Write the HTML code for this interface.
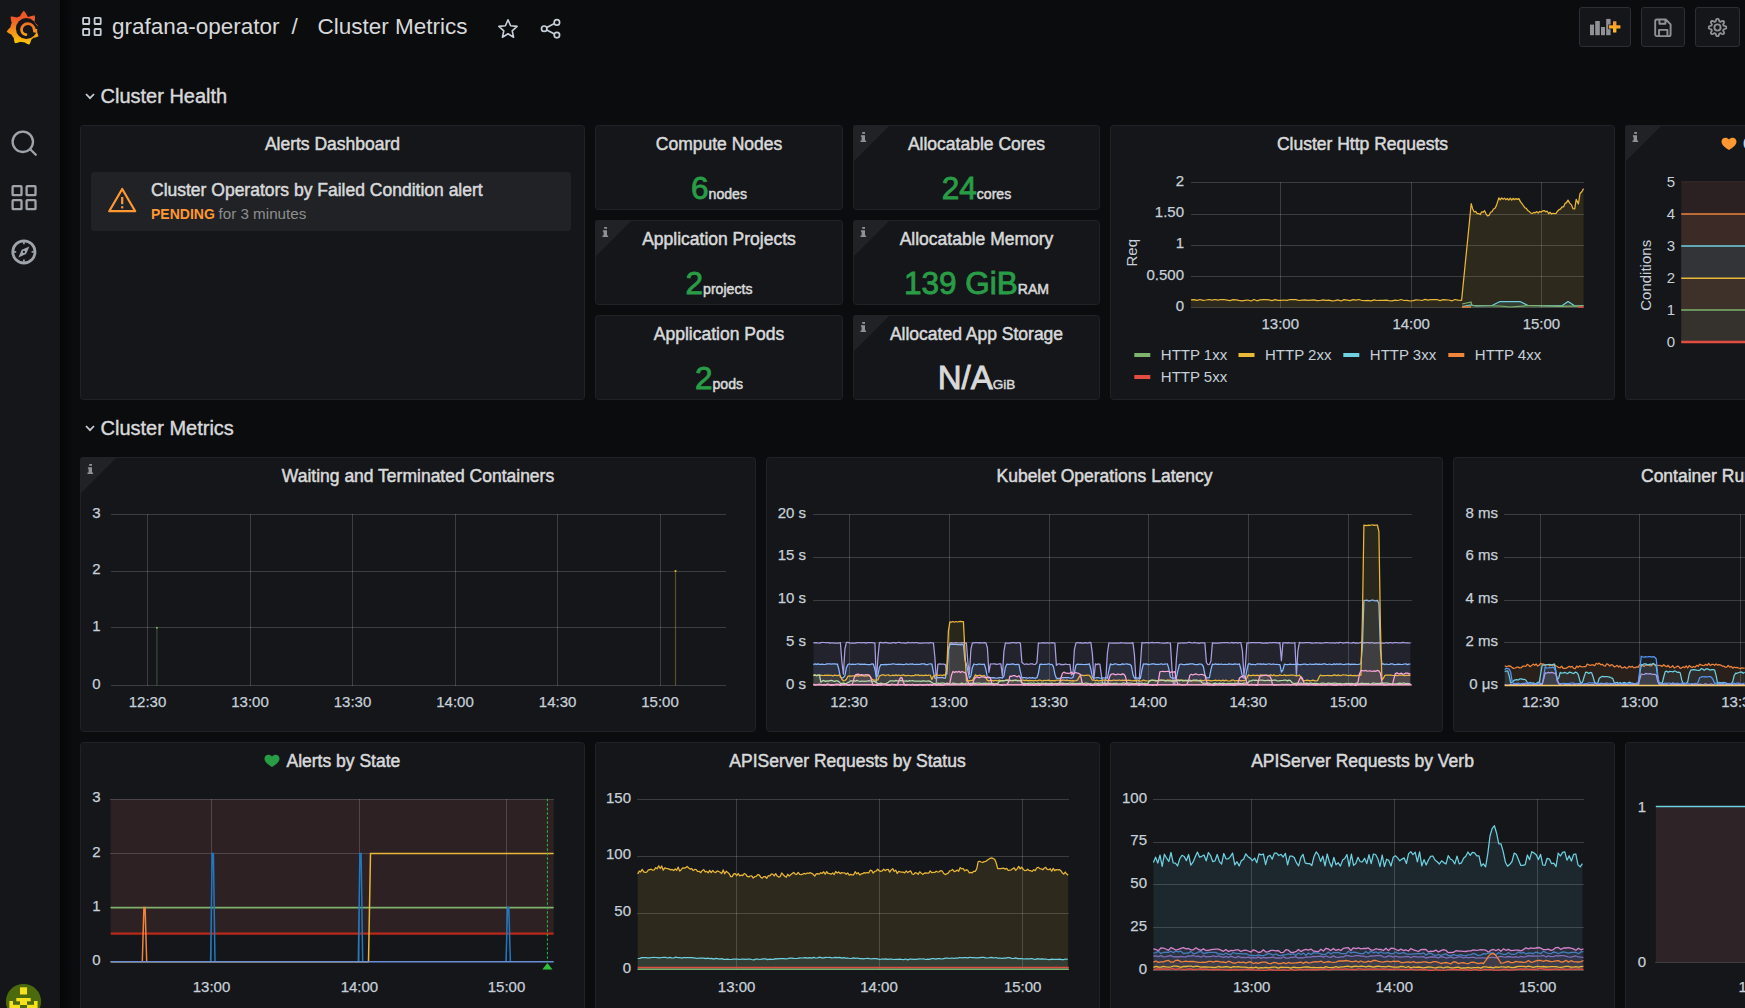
<!DOCTYPE html><html><head><meta charset="utf-8"><style>html,body{margin:0;padding:0;background:#0b0c0e;overflow:hidden;width:1745px;height:1008px}svg{display:block}</style></head><body><svg width="1745" height="1008" viewBox="0 0 1745 1008" font-family="Liberation Sans">
<defs>
<linearGradient id="logo" gradientUnits="userSpaceOnUse" x1="0" y1="12" x2="0" y2="45"><stop offset="0" stop-color="#ef5427"/><stop offset="0.2" stop-color="#f05a28"/><stop offset="1" stop-color="#fbcb0a"/></linearGradient>
<linearGradient id="shadow" x1="0" y1="0" x2="1" y2="0"><stop offset="0" stop-color="#000" stop-opacity="0.55"/><stop offset="1" stop-color="#000" stop-opacity="0"/></linearGradient>
<linearGradient id="plus" x1="0" y1="0" x2="0" y2="1"><stop offset="0" stop-color="#f98d2c"/><stop offset="1" stop-color="#fbc21a"/></linearGradient>
</defs>
<rect width="1745" height="1008" fill="#0b0c0e"/>
<rect x="0" y="0" width="60" height="1008" fill="#141619"/>
<rect x="60" y="0" width="14" height="1008" fill="url(#shadow)"/>
<path d="M8.6,29.0 L8.9,28.7 L9.1,28.5 L9.4,28.3 L9.6,28.0 L9.9,27.8 L10.1,27.6 L10.4,27.4 L10.4,27.2 L10.5,26.9 L10.5,26.7 L10.5,26.5 L10.6,26.3 L10.6,26.0 L10.7,25.8 L10.7,25.6 L10.8,25.4 L10.9,25.1 L10.9,24.9 L11.0,24.7 L11.1,24.5 L11.2,24.3 L11.3,24.1 L11.3,23.8 L11.4,23.6 L11.5,23.4 L11.6,23.2 L11.7,23.0 L11.8,22.8 L11.7,22.5 L11.6,22.1 L11.4,21.8 L11.3,21.4 L11.2,21.0 L11.1,20.7 L11.0,20.3 L11.0,19.9 L10.9,19.5 L10.8,19.1 L10.8,18.7 L10.7,18.3 L10.7,17.9 L10.7,17.5 L10.7,17.1 L10.7,16.6 L11.1,16.6 L11.5,16.6 L11.9,16.6 L12.4,16.6 L12.8,16.7 L13.2,16.7 L13.6,16.7 L14.0,16.8 L14.3,16.9 L14.7,16.9 L15.1,17.0 L15.5,17.1 L15.8,17.2 L16.2,17.3 L16.6,17.4 L16.9,17.6 L17.1,17.5 L17.3,17.3 L17.5,17.2 L17.7,17.1 L17.9,17.0 L18.1,16.9 L18.3,16.8 L18.6,16.8 L18.8,16.7 L19.0,16.6 L19.2,16.5 L19.4,16.4 L19.6,16.4 L19.9,16.3 L20.1,16.2 L20.2,15.9 L20.4,15.5 L20.6,15.2 L20.7,14.8 L20.9,14.5 L21.1,14.1 L21.4,13.8 L21.6,13.4 L21.8,13.1 L22.1,12.7 L22.3,12.4 L22.6,12.1 L22.9,11.7 L23.2,11.4 L23.5,11.1 L23.8,10.8 L24.1,11.1 L24.4,11.4 L24.7,11.8 L25.0,12.1 L25.2,12.5 L25.5,12.8 L25.7,13.1 L26.0,13.5 L26.2,13.8 L26.4,14.2 L26.6,14.6 L26.8,14.9 L26.9,15.3 L27.1,15.6 L27.2,16.0 L27.4,16.4 L27.6,16.4 L27.8,16.5 L28.0,16.6 L28.2,16.7 L28.4,16.8 L28.7,16.8 L28.9,16.9 L29.2,16.8 L29.5,16.6 L29.9,16.5 L30.2,16.4 L30.6,16.3 L30.9,16.1 L31.3,16.0 L31.7,15.9 L32.0,15.9 L32.4,15.8 L32.8,15.7 L33.2,15.7 L33.6,15.6 L34.0,15.6 L34.4,15.5 L34.8,15.5 L34.9,15.9 L34.9,16.3 L34.9,16.7 L35.0,17.1 L35.0,17.5 L35.0,17.9 L35.0,18.3 L34.9,18.7 L34.9,19.1 L34.9,19.5 L34.8,19.8 L34.8,20.2 L34.7,20.6 L34.6,20.9 L34.5,21.3 L34.4,21.6 L34.6,21.8 L34.7,22.0 L34.8,22.2 L34.9,22.4 L35.0,22.6 L35.2,22.8 L35.3,23.0 L35.4,23.2 L35.6,23.4 L35.8,23.5 L36.0,23.7 L36.2,23.9 L36.3,24.1 L36.5,24.3 L36.7,24.4 L36.9,24.6 L37.1,24.8 L37.3,25.1 L37.4,25.3 L37.6,25.5 L37.8,25.7 L38.0,25.9 L38.1,26.2 L38.3,26.4 L38.2,26.7 L38.1,26.9 L38.1,27.2 L38.0,27.5 L37.9,27.7 L37.8,28.0 L37.7,28.3 L37.6,28.5 L37.5,28.8 L37.4,29.0 L37.3,29.2 L37.1,29.5 L37.0,29.7 L36.9,29.9 L36.8,30.2 L36.6,30.4 L36.6,30.6 L36.6,30.8 L36.5,31.1 L36.5,31.3 L36.7,31.6 L36.8,31.8 L37.0,32.1 L37.1,32.4 L37.3,32.7 L37.4,33.0 L37.5,33.3 L37.7,33.6 L37.8,33.9 L37.9,34.2 L38.0,34.6 L38.1,34.9 L38.2,35.2 L38.3,35.6 L38.4,35.9 L38.4,36.3 L38.1,36.4 L37.8,36.6 L37.5,36.7 L37.1,36.9 L36.8,37.0 L36.5,37.1 L36.2,37.2 L35.9,37.3 L35.5,37.4 L35.2,37.5 L34.9,37.6 L34.6,37.7 L34.3,37.7 L33.9,37.8 L33.6,37.8 L33.3,37.8 L33.2,38.0 L33.0,38.2 L32.8,38.3 L32.7,38.5 L32.5,38.7 L32.3,38.8 L32.2,39.0 L32.0,39.1 L31.8,39.3 L31.6,39.4 L31.4,39.5 L31.3,39.7 L31.2,40.0 L31.1,40.3 L31.0,40.6 L30.9,40.9 L30.8,41.2 L30.7,41.5 L30.6,41.8 L30.5,42.2 L30.4,42.5 L30.2,42.8 L30.1,43.1 L29.9,43.4 L29.7,43.7 L29.6,44.0 L29.4,44.3 L29.2,44.6 L28.8,44.5 L28.5,44.4 L28.2,44.3 L27.8,44.1 L27.5,44.0 L27.2,43.9 L26.9,43.7 L26.6,43.6 L26.3,43.4 L26.0,43.3 L25.7,43.1 L25.5,42.9 L25.2,42.7 L24.9,42.6 L24.7,42.4 L24.4,42.2 L24.2,42.2 L24.0,42.2 L23.7,42.2 L23.5,42.2 L23.3,42.2 L23.0,42.2 L22.8,42.2 L22.6,42.2 L22.3,42.1 L22.1,42.1 L21.9,42.1 L21.7,42.1 L21.4,42.0 L21.2,42.0 L21.0,42.0 L20.8,41.9 L20.5,41.9 L20.3,41.8 L20.1,41.8 L19.8,41.9 L19.5,42.0 L19.2,42.2 L18.9,42.3 L18.6,42.4 L18.3,42.5 L18.0,42.6 L17.7,42.7 L17.4,42.8 L17.0,42.9 L16.7,43.0 L16.3,43.0 L16.0,43.1 L15.7,43.1 L15.3,43.2 L15.0,43.2 L14.8,42.9 L14.7,42.6 L14.6,42.2 L14.5,41.9 L14.4,41.6 L14.3,41.2 L14.2,40.9 L14.1,40.6 L14.1,40.3 L14.0,39.9 L14.0,39.6 L13.9,39.3 L13.9,39.0 L13.9,38.6 L13.9,38.3 L13.8,38.0 L13.7,37.8 L13.5,37.7 L13.4,37.5 L13.2,37.3 L13.1,37.1 L13.0,36.9 L12.8,36.8 L12.7,36.6 L12.6,36.4 L12.4,36.2 L12.3,36.0 L12.2,35.8 L12.1,35.6 L12.0,35.4 L11.8,35.2 L11.7,35.0 L11.6,34.8 L11.5,34.6 L11.2,34.5 L10.9,34.3 L10.6,34.2 L10.3,34.1 L10.0,33.9 L9.7,33.8 L9.4,33.6 L9.1,33.4 L8.8,33.2 L8.5,33.0 L8.2,32.8 L7.9,32.6 L7.6,32.4 L7.3,32.2 L7.0,31.9 L6.7,31.7 L6.9,31.3 L7.1,31.0 L7.3,30.7 L7.5,30.4 L7.7,30.1 L7.9,29.8 L8.2,29.5 L8.4,29.3 Z" fill="url(#logo)"/>
<circle cx="26.4" cy="28.6" r="10.5" fill="#141619"/>
<path d="M35,24.5 L40,27.5 L36.5,29.8 Z" fill="#141619"/>
<path d="M34.2,29.5 A6.4,6.4 0 0 0 27.6,23.6 A6.2,6.2 0 0 0 21.5,29.8 A5.4,5.4 0 0 0 26,34.6" fill="none" stroke="url(#logo)" stroke-width="2.7" stroke-linecap="round"/>
<path d="M32.8,28.5 L37.2,29 L37.2,33 L33.2,32.2 Z" fill="url(#logo)"/>
<g fill="none" stroke="#9fa4ab" stroke-width="2.3" stroke-linecap="round"><circle cx="22.8" cy="141.8" r="10.2"/><line x1="30.5" y1="149.5" x2="35.8" y2="154.8"/></g>
<rect x="12.6" y="186.2" width="8.9" height="9.0" rx="0.8" fill="none" stroke="#9fa4ab" stroke-width="2.3"/>
<rect x="26.6" y="186.2" width="8.9" height="9.0" rx="0.8" fill="none" stroke="#9fa4ab" stroke-width="2.3"/>
<rect x="12.6" y="200.2" width="8.9" height="9.0" rx="0.8" fill="none" stroke="#9fa4ab" stroke-width="2.3"/>
<rect x="26.6" y="200.2" width="8.9" height="9.0" rx="0.8" fill="none" stroke="#9fa4ab" stroke-width="2.3"/>
<circle cx="23.9" cy="251.9" r="11.1" fill="none" stroke="#9fa4ab" stroke-width="2.8"/>
<g stroke="#9fa4ab" stroke-width="1.7"><line x1="23.9" y1="242" x2="23.9" y2="244.2"/><line x1="23.9" y1="259.6" x2="23.9" y2="261.8"/><line x1="14" y1="251.9" x2="16.2" y2="251.9"/><line x1="31.6" y1="251.9" x2="33.8" y2="251.9"/></g>
<path d="M29.4,246.4 L26.1,254.1 L18.4,257.4 L21.7,249.7 Z" fill="#9fa4ab"/><circle cx="23.9" cy="251.9" r="1.1" fill="#141619"/>
<circle cx="23.5" cy="1001.5" r="17.6" fill="#4b6a0e"/>
<g fill="#f7e01d"><rect x="20" y="987.3" width="7" height="7.2"/><rect x="16.3" y="998" width="14.4" height="3.3"/><rect x="20" y="1001" width="7" height="4"/><rect x="9.4" y="1001" width="3.6" height="7"/><rect x="34" y="1001" width="3.6" height="7"/><rect x="13" y="1004.8" width="7" height="3.5"/><rect x="27" y="1004.8" width="7" height="3.5"/></g>
<rect x="83.1" y="17.8" width="6.1" height="6.2" rx="0.6" fill="none" stroke="#c7d0d9" stroke-width="1.8"/>
<rect x="94.6" y="17.8" width="6.1" height="6.2" rx="0.6" fill="none" stroke="#c7d0d9" stroke-width="1.8"/>
<rect x="83.1" y="29.0" width="6.1" height="6.2" rx="0.6" fill="none" stroke="#c7d0d9" stroke-width="1.8"/>
<rect x="94.6" y="29.0" width="6.1" height="6.2" rx="0.6" fill="none" stroke="#c7d0d9" stroke-width="1.8"/>
<text x="112" y="34" font-size="22.5" fill="#d8d9da" text-anchor="start" font-weight="400" >grafana-operator</text>
<text x="291.5" y="34" font-size="22.5" fill="#d8d9da" text-anchor="start" font-weight="400" >/</text>
<text x="317.5" y="34" font-size="22.5" fill="#d8d9da" text-anchor="start" font-weight="400" >Cluster Metrics</text>
<path d="M508.0,19.8 L510.6,25.8 L517.1,26.4 L512.2,30.8 L513.6,37.2 L508.0,33.8 L502.4,37.2 L503.8,30.8 L498.9,26.4 L505.4,25.8 Z" fill="none" stroke="#c7d0d9" stroke-width="1.6" stroke-linejoin="round"/>
<g fill="none" stroke="#c7d0d9" stroke-width="1.7"><circle cx="556.9" cy="22.4" r="2.7"/><circle cx="544.2" cy="28.7" r="2.7"/><circle cx="556.9" cy="35.1" r="2.7"/><line x1="546.7" y1="27.4" x2="554.5" y2="23.6"/><line x1="546.7" y1="30" x2="554.5" y2="33.9"/></g>
<rect x="1579.5" y="7.5" width="51" height="39" rx="2.5" fill="#141619" stroke="#2b2f34" stroke-width="1"/>
<rect x="1641.5" y="7.5" width="43" height="39" rx="2.5" fill="#141619" stroke="#2b2f34" stroke-width="1"/>
<rect x="1695.5" y="7.5" width="44" height="39" rx="2.5" fill="#141619" stroke="#2b2f34" stroke-width="1"/>
<g fill="#8e9297"><rect x="1590" y="24.6" width="4" height="10.6"/><rect x="1595.2" y="21" width="4.6" height="14.2"/><rect x="1601" y="27" width="4" height="8.2"/><rect x="1606.2" y="18.9" width="4.4" height="16.3"/></g>
<path d="M1613,21.2 h3.4 v4 h4 v3.4 h-4 v4 h-3.4 v-4 h-4 v-3.4 h4 z" fill="url(#plus)" stroke="#141619" stroke-width="1.4" paint-order="stroke"/>
<path d="M1656.8,19.5 h9 l4.8,4.8 v10.2 a1.6,1.6 0 0 1 -1.6,1.6 h-12.2 a1.6,1.6 0 0 1 -1.6,-1.6 v-13.4 a1.6,1.6 0 0 1 1.6,-1.6 z M1659.4,19.5 v4.2 h6 v-4.2 M1659,35.5 v-5.6 h8.4 v5.6" fill="none" stroke="#8e9297" stroke-width="1.9" stroke-linejoin="round"/>
<path d="M1726.2,27.5 L1726.2,28.4 L1724.9,29.0 L1723.6,29.4 L1723.4,29.9 L1723.1,30.5 L1723.8,31.7 L1724.2,33.0 L1723.7,33.7 L1723.0,34.2 L1721.7,33.8 L1720.5,33.1 L1719.9,33.4 L1719.4,33.6 L1719.0,34.9 L1718.4,36.2 L1717.5,36.2 L1716.6,36.2 L1716.0,34.9 L1715.6,33.6 L1715.1,33.4 L1714.5,33.1 L1713.3,33.8 L1712.0,34.2 L1711.3,33.7 L1710.8,33.0 L1711.2,31.7 L1711.9,30.5 L1711.6,29.9 L1711.4,29.4 L1710.1,29.0 L1708.8,28.4 L1708.8,27.5 L1708.8,26.6 L1710.1,26.0 L1711.4,25.6 L1711.6,25.1 L1711.9,24.5 L1711.2,23.3 L1710.8,22.0 L1711.3,21.3 L1712.0,20.8 L1713.3,21.2 L1714.5,21.9 L1715.1,21.6 L1715.6,21.4 L1716.0,20.1 L1716.6,18.8 L1717.5,18.8 L1718.4,18.8 L1719.0,20.1 L1719.4,21.4 L1719.9,21.6 L1720.5,21.9 L1721.7,21.2 L1723.0,20.8 L1723.7,21.3 L1724.2,22.0 L1723.8,23.3 L1723.1,24.5 L1723.4,25.1 L1723.6,25.6 L1724.9,26.0 L1726.2,26.6 Z" fill="none" stroke="#8e9297" stroke-width="1.8" stroke-linejoin="round"/>
<circle cx="1717.5" cy="27.5" r="3.1" fill="none" stroke="#8e9297" stroke-width="1.9"/>
<path d="M86,94 L90,98.2 L94,94" fill="none" stroke="#c7d0d9" stroke-width="1.7"/>
<text x="100.5" y="103" font-size="20" fill="#d8d9da" text-anchor="start" font-weight="400" stroke="#d8d9da" stroke-width="0.4" >Cluster Health</text>
<path d="M86,426 L90,430.2 L94,426" fill="none" stroke="#c7d0d9" stroke-width="1.7"/>
<text x="100.5" y="435" font-size="20" fill="#d8d9da" text-anchor="start" font-weight="400" stroke="#d8d9da" stroke-width="0.4" >Cluster Metrics</text>
<rect x="80.5" y="125.5" width="504" height="274" rx="3" fill="#141619" stroke="#202226" stroke-width="1"/>
<text x="332.5" y="150" font-size="17.5" fill="#d8d9da" text-anchor="middle" font-weight="400" stroke="#d8d9da" stroke-width="0.5" >Alerts Dashboard</text>
<rect x="91" y="172" width="480" height="59" rx="3" fill="#202226"/>
<path d="M122.2,189 L109.2,211.2 L135.2,211.2 Z" fill="none" stroke="#ff9830" stroke-width="2.2" stroke-linejoin="round"/>
<rect x="121.1" y="197" width="2.2" height="7.2" fill="#ff9830"/><rect x="121.1" y="206.2" width="2.2" height="2.2" fill="#ff9830"/>
<text x="151" y="195.6" font-size="17.5" fill="#d8d9da" text-anchor="start" font-weight="400" stroke="#d8d9da" stroke-width="0.5" >Cluster Operators by Failed Condition alert</text>
<text x="151" y="219" font-size="14" fill="#ff9830" text-anchor="start" font-weight="700" >PENDING</text>
<text x="218.5" y="219" font-size="15.2" fill="#8e8e8e" text-anchor="start" font-weight="400" >for 3 minutes</text>
<rect x="595.5" y="125.5" width="247" height="84" rx="3" fill="#141619" stroke="#202226" stroke-width="1"/>
<text x="719.0" y="150" font-size="17.5" fill="#d8d9da" text-anchor="middle" font-weight="400" stroke="#d8d9da" stroke-width="0.5" >Compute Nodes</text>
<text y="199" text-anchor="middle" x="719.0"><tspan font-size="31.5" fill="#299c46" stroke="#299c46" stroke-width="0.9">6</tspan><tspan font-size="14.1" fill="#d8d9da" stroke="#d8d9da" stroke-width="0.5">nodes</tspan></text>
<rect x="853.5" y="125.5" width="246" height="84" rx="3" fill="#141619" stroke="#202226" stroke-width="1"/>
<path d="M856,125 L890,125 L853,162 L853,128 Q853,125 856,125 Z" fill="#202226"/>
<g fill="#8e9297"><rect x="862.2" y="132" width="2.8" height="1.8"/><path d="M860.9,135.2 h4.1 v5.2 h1.1 v1.5 h-5.6 v-1.5 h1.1 v-3.7 h-0.7 z"/></g>
<text x="976.5" y="150" font-size="17.5" fill="#d8d9da" text-anchor="middle" font-weight="400" stroke="#d8d9da" stroke-width="0.5" >Allocatable Cores</text>
<text y="199" text-anchor="middle" x="976.5"><tspan font-size="31.5" fill="#299c46" stroke="#299c46" stroke-width="0.9">24</tspan><tspan font-size="14.1" fill="#d8d9da" stroke="#d8d9da" stroke-width="0.5">cores</tspan></text>
<rect x="595.5" y="220.5" width="247" height="84" rx="3" fill="#141619" stroke="#202226" stroke-width="1"/>
<path d="M598,220 L632,220 L595,257 L595,223 Q595,220 598,220 Z" fill="#202226"/>
<g fill="#8e9297"><rect x="604.2" y="227" width="2.8" height="1.8"/><path d="M602.9,230.2 h4.1 v5.2 h1.1 v1.5 h-5.6 v-1.5 h1.1 v-3.7 h-0.7 z"/></g>
<text x="719.0" y="245" font-size="17.5" fill="#d8d9da" text-anchor="middle" font-weight="400" stroke="#d8d9da" stroke-width="0.5" >Application Projects</text>
<text y="294" text-anchor="middle" x="719.0"><tspan font-size="31.5" fill="#299c46" stroke="#299c46" stroke-width="0.9">2</tspan><tspan font-size="14.1" fill="#d8d9da" stroke="#d8d9da" stroke-width="0.5">projects</tspan></text>
<rect x="853.5" y="220.5" width="246" height="84" rx="3" fill="#141619" stroke="#202226" stroke-width="1"/>
<path d="M856,220 L890,220 L853,257 L853,223 Q853,220 856,220 Z" fill="#202226"/>
<g fill="#8e9297"><rect x="862.2" y="227" width="2.8" height="1.8"/><path d="M860.9,230.2 h4.1 v5.2 h1.1 v1.5 h-5.6 v-1.5 h1.1 v-3.7 h-0.7 z"/></g>
<text x="976.5" y="245" font-size="17.5" fill="#d8d9da" text-anchor="middle" font-weight="400" stroke="#d8d9da" stroke-width="0.5" >Allocatable Memory</text>
<text y="294" text-anchor="middle" x="976.5"><tspan font-size="31.5" fill="#299c46" stroke="#299c46" stroke-width="0.9">139 GiB</tspan><tspan font-size="14.1" fill="#d8d9da" stroke="#d8d9da" stroke-width="0.5">RAM</tspan></text>
<rect x="595.5" y="315.5" width="247" height="84" rx="3" fill="#141619" stroke="#202226" stroke-width="1"/>
<text x="719.0" y="340" font-size="17.5" fill="#d8d9da" text-anchor="middle" font-weight="400" stroke="#d8d9da" stroke-width="0.5" >Application Pods</text>
<text y="389" text-anchor="middle" x="719.0"><tspan font-size="31.5" fill="#299c46" stroke="#299c46" stroke-width="0.9">2</tspan><tspan font-size="14.1" fill="#d8d9da" stroke="#d8d9da" stroke-width="0.5">pods</tspan></text>
<rect x="853.5" y="315.5" width="246" height="84" rx="3" fill="#141619" stroke="#202226" stroke-width="1"/>
<path d="M856,315 L890,315 L853,352 L853,318 Q853,315 856,315 Z" fill="#202226"/>
<g fill="#8e9297"><rect x="862.2" y="322" width="2.8" height="1.8"/><path d="M860.9,325.2 h4.1 v5.2 h1.1 v1.5 h-5.6 v-1.5 h1.1 v-3.7 h-0.7 z"/></g>
<text x="976.5" y="340" font-size="17.5" fill="#d8d9da" text-anchor="middle" font-weight="400" stroke="#d8d9da" stroke-width="0.5" >Allocated App Storage</text>
<text y="389" text-anchor="middle" x="976.5"><tspan font-size="33" fill="#d8d9da" stroke="#d8d9da" stroke-width="0.9">N/A</tspan><tspan font-size="13.5" fill="#d8d9da" stroke="#d8d9da" stroke-width="0.5">GiB</tspan></text>
<rect x="1110.5" y="125.5" width="504" height="274" rx="3" fill="#141619" stroke="#202226" stroke-width="1"/>
<text x="1362.5" y="150" font-size="17.5" fill="#d8d9da" text-anchor="middle" font-weight="400" stroke="#d8d9da" stroke-width="0.5" >Cluster Http Requests</text>
<line x1="1191" y1="307.5" x2="1584" y2="307.5" stroke="rgba(255,255,255,0.17)" stroke-width="1"/>
<text x="1184" y="310.8" font-size="15" fill="#c7d0d9" text-anchor="end" font-weight="400" stroke="#c7d0d9" stroke-width="0.25" >0</text>
<line x1="1191" y1="276.5" x2="1584" y2="276.5" stroke="rgba(255,255,255,0.17)" stroke-width="1"/>
<text x="1184" y="279.625" font-size="15" fill="#c7d0d9" text-anchor="end" font-weight="400" stroke="#c7d0d9" stroke-width="0.25" >0.500</text>
<line x1="1191" y1="245.5" x2="1584" y2="245.5" stroke="rgba(255,255,255,0.17)" stroke-width="1"/>
<text x="1184" y="248.45000000000005" font-size="15" fill="#c7d0d9" text-anchor="end" font-weight="400" stroke="#c7d0d9" stroke-width="0.25" >1</text>
<line x1="1191" y1="214.5" x2="1584" y2="214.5" stroke="rgba(255,255,255,0.17)" stroke-width="1"/>
<text x="1184" y="217.27500000000003" font-size="15" fill="#c7d0d9" text-anchor="end" font-weight="400" stroke="#c7d0d9" stroke-width="0.25" >1.50</text>
<line x1="1191" y1="182.5" x2="1584" y2="182.5" stroke="rgba(255,255,255,0.17)" stroke-width="1"/>
<text x="1184" y="186.10000000000005" font-size="15" fill="#c7d0d9" text-anchor="end" font-weight="400" stroke="#c7d0d9" stroke-width="0.25" >2</text>
<line x1="1280.5" y1="182" x2="1280.5" y2="308" stroke="rgba(255,255,255,0.17)" stroke-width="1"/>
<text x="1280.3" y="329" font-size="15" fill="#c7d0d9" text-anchor="middle" font-weight="400" stroke="#c7d0d9" stroke-width="0.25" >13:00</text>
<line x1="1411.5" y1="182" x2="1411.5" y2="308" stroke="rgba(255,255,255,0.17)" stroke-width="1"/>
<text x="1411.2" y="329" font-size="15" fill="#c7d0d9" text-anchor="middle" font-weight="400" stroke="#c7d0d9" stroke-width="0.25" >14:00</text>
<line x1="1541.5" y1="182" x2="1541.5" y2="308" stroke="rgba(255,255,255,0.17)" stroke-width="1"/>
<text x="1541.4" y="329" font-size="15" fill="#c7d0d9" text-anchor="middle" font-weight="400" stroke="#c7d0d9" stroke-width="0.25" >15:00</text>
<text x="0" y="0" font-size="15" fill="#c7d0d9" text-anchor="middle" transform="translate(1136.5,252.7) rotate(-90)">Req</text>
<path d="M1191.0,299.9 L1194.0,299.6 L1197.0,300.4 L1200.0,299.5 L1203.0,300.3 L1206.0,300.0 L1209.0,299.5 L1212.0,300.2 L1215.0,299.5 L1218.0,300.1 L1221.0,299.5 L1224.0,299.5 L1227.0,300.1 L1230.0,300.7 L1233.0,299.6 L1236.0,299.8 L1239.0,300.4 L1242.0,300.9 L1245.0,300.3 L1248.0,300.0 L1251.0,301.0 L1254.0,299.5 L1257.0,300.8 L1260.0,299.9 L1263.0,299.6 L1266.0,299.6 L1269.0,299.9 L1272.0,300.7 L1275.0,299.7 L1278.0,300.3 L1281.0,300.4 L1284.0,300.0 L1287.0,300.3 L1290.0,299.5 L1293.0,299.5 L1296.0,299.7 L1299.0,300.5 L1302.0,300.1 L1305.0,299.9 L1308.0,300.3 L1311.0,300.1 L1314.0,299.9 L1317.0,300.7 L1320.0,300.5 L1323.0,299.8 L1326.0,300.3 L1329.0,300.2 L1332.0,300.8 L1335.0,300.6 L1338.0,299.9 L1341.0,301.0 L1344.0,299.6 L1347.0,300.1 L1350.0,300.6 L1353.0,299.6 L1356.0,300.2 L1359.0,299.5 L1362.0,300.5 L1365.0,300.6 L1368.0,300.3 L1371.0,300.8 L1374.0,299.9 L1377.0,300.5 L1380.0,300.4 L1383.0,300.3 L1386.0,300.1 L1389.0,300.7 L1392.0,300.9 L1395.0,300.2 L1398.0,300.5 L1401.0,299.5 L1404.0,300.5 L1407.0,300.4 L1410.0,301.0 L1413.0,300.7 L1416.0,299.9 L1419.0,300.0 L1422.0,300.5 L1425.0,299.4 L1428.0,300.1 L1431.0,299.7 L1434.0,299.6 L1437.0,299.5 L1440.0,300.6 L1443.0,299.6 L1446.0,299.8 L1449.0,300.0 L1452.0,300.8 L1455.0,299.5 L1458.0,300.1 L1461.0,300.3 L1461.6,300.2 L1463.2,284.2 L1464.8,268.2 L1466.4,252.2 L1468.0,236.2 L1469.6,220.2 L1471.2,203.7 L1472.7,208.9 L1474.2,212.0 L1475.7,211.4 L1477.2,213.6 L1478.7,213.6 L1480.2,214.6 L1481.7,211.8 L1483.1,212.2 L1484.6,210.7 L1486.1,214.1 L1487.6,215.9 L1489.1,215.3 L1490.6,212.2 L1492.0,211.6 L1493.5,209.0 L1495.0,208.3 L1496.5,205.4 L1498.8,197.9 L1500.2,199.9 L1501.7,197.9 L1503.1,199.4 L1504.5,198.1 L1506.0,199.7 L1507.4,198.5 L1508.8,200.1 L1510.3,198.2 L1511.7,200.2 L1513.2,198.3 L1514.6,199.7 L1516.0,198.6 L1517.5,199.4 L1518.9,198.6 L1520.4,201.6 L1521.8,203.3 L1523.3,205.5 L1524.8,207.7 L1526.3,208.4 L1527.8,210.6 L1529.3,211.6 L1530.8,213.0 L1532.3,213.4 L1533.8,212.4 L1535.3,212.8 L1536.8,211.6 L1538.2,213.0 L1539.7,211.5 L1541.2,212.1 L1542.7,210.9 L1544.2,210.6 L1545.7,211.8 L1547.2,211.2 L1548.7,213.8 L1550.1,212.3 L1551.6,214.0 L1553.1,213.3 L1554.6,213.7 L1556.1,213.4 L1557.5,211.2 L1559.0,209.7 L1560.5,209.1 L1562.0,206.8 L1563.5,206.9 L1565.0,203.4 L1566.5,202.6 L1568.0,200.1 L1569.7,203.1 L1571.3,204.6 L1573.0,208.7 L1574.7,208.9 L1576.2,199.3 L1578.4,204.0 L1580.0,193.5 L1581.8,191.7 L1583.5,188.6 L1583.5,307.4 L1191.0,307.4 Z" fill="#eab839" fill-opacity="0.12"/>
<path d="M1191.0,299.9 L1194.0,299.6 L1197.0,300.4 L1200.0,299.5 L1203.0,300.3 L1206.0,300.0 L1209.0,299.5 L1212.0,300.2 L1215.0,299.5 L1218.0,300.1 L1221.0,299.5 L1224.0,299.5 L1227.0,300.1 L1230.0,300.7 L1233.0,299.6 L1236.0,299.8 L1239.0,300.4 L1242.0,300.9 L1245.0,300.3 L1248.0,300.0 L1251.0,301.0 L1254.0,299.5 L1257.0,300.8 L1260.0,299.9 L1263.0,299.6 L1266.0,299.6 L1269.0,299.9 L1272.0,300.7 L1275.0,299.7 L1278.0,300.3 L1281.0,300.4 L1284.0,300.0 L1287.0,300.3 L1290.0,299.5 L1293.0,299.5 L1296.0,299.7 L1299.0,300.5 L1302.0,300.1 L1305.0,299.9 L1308.0,300.3 L1311.0,300.1 L1314.0,299.9 L1317.0,300.7 L1320.0,300.5 L1323.0,299.8 L1326.0,300.3 L1329.0,300.2 L1332.0,300.8 L1335.0,300.6 L1338.0,299.9 L1341.0,301.0 L1344.0,299.6 L1347.0,300.1 L1350.0,300.6 L1353.0,299.6 L1356.0,300.2 L1359.0,299.5 L1362.0,300.5 L1365.0,300.6 L1368.0,300.3 L1371.0,300.8 L1374.0,299.9 L1377.0,300.5 L1380.0,300.4 L1383.0,300.3 L1386.0,300.1 L1389.0,300.7 L1392.0,300.9 L1395.0,300.2 L1398.0,300.5 L1401.0,299.5 L1404.0,300.5 L1407.0,300.4 L1410.0,301.0 L1413.0,300.7 L1416.0,299.9 L1419.0,300.0 L1422.0,300.5 L1425.0,299.4 L1428.0,300.1 L1431.0,299.7 L1434.0,299.6 L1437.0,299.5 L1440.0,300.6 L1443.0,299.6 L1446.0,299.8 L1449.0,300.0 L1452.0,300.8 L1455.0,299.5 L1458.0,300.1 L1461.0,300.3 L1461.6,300.2 L1463.2,284.2 L1464.8,268.2 L1466.4,252.2 L1468.0,236.2 L1469.6,220.2 L1471.2,203.7 L1472.7,208.9 L1474.2,212.0 L1475.7,211.4 L1477.2,213.6 L1478.7,213.6 L1480.2,214.6 L1481.7,211.8 L1483.1,212.2 L1484.6,210.7 L1486.1,214.1 L1487.6,215.9 L1489.1,215.3 L1490.6,212.2 L1492.0,211.6 L1493.5,209.0 L1495.0,208.3 L1496.5,205.4 L1498.8,197.9 L1500.2,199.9 L1501.7,197.9 L1503.1,199.4 L1504.5,198.1 L1506.0,199.7 L1507.4,198.5 L1508.8,200.1 L1510.3,198.2 L1511.7,200.2 L1513.2,198.3 L1514.6,199.7 L1516.0,198.6 L1517.5,199.4 L1518.9,198.6 L1520.4,201.6 L1521.8,203.3 L1523.3,205.5 L1524.8,207.7 L1526.3,208.4 L1527.8,210.6 L1529.3,211.6 L1530.8,213.0 L1532.3,213.4 L1533.8,212.4 L1535.3,212.8 L1536.8,211.6 L1538.2,213.0 L1539.7,211.5 L1541.2,212.1 L1542.7,210.9 L1544.2,210.6 L1545.7,211.8 L1547.2,211.2 L1548.7,213.8 L1550.1,212.3 L1551.6,214.0 L1553.1,213.3 L1554.6,213.7 L1556.1,213.4 L1557.5,211.2 L1559.0,209.7 L1560.5,209.1 L1562.0,206.8 L1563.5,206.9 L1565.0,203.4 L1566.5,202.6 L1568.0,200.1 L1569.7,203.1 L1571.3,204.6 L1573.0,208.7 L1574.7,208.9 L1576.2,199.3 L1578.4,204.0 L1580.0,193.5 L1581.8,191.7 L1583.5,188.6" fill="none" stroke="#eab839" stroke-width="1.25" stroke-linejoin="round"/>
<path d="M1462.0,306.5 L1470.0,305.0 L1476.0,305.8 L1492.0,305.5 L1500.0,301.5 L1520.0,301.5 L1528.0,305.5 L1562.0,305.8 L1568.0,301.5 L1575.0,306.0 L1583.5,305.5 L1583.5,307.4 L1462.0,307.4 Z" fill="#6ed0e0" fill-opacity="0.12"/>
<path d="M1462.0,306.5 L1470.0,305.0 L1476.0,305.8 L1492.0,305.5 L1500.0,301.5 L1520.0,301.5 L1528.0,305.5 L1562.0,305.8 L1568.0,301.5 L1575.0,306.0 L1583.5,305.5" fill="none" stroke="#6ed0e0" stroke-width="1.25" stroke-linejoin="round"/>
<path d="M1462.0,304.0 L1471.0,302.0 L1472.0,305.5 L1500.0,306.0 L1510.0,307.0 L1530.0,305.5 L1560.0,306.3 L1583.5,305.8 L1583.5,307.4 L1462.0,307.4 Z" fill="#7eb26d" fill-opacity="0.08"/>
<path d="M1462.0,304.0 L1471.0,302.0 L1472.0,305.5 L1500.0,306.0 L1510.0,307.0 L1530.0,305.5 L1560.0,306.3 L1583.5,305.8" fill="none" stroke="#7eb26d" stroke-width="1.25" stroke-linejoin="round"/>
<line x1="1462" y1="307" x2="1471" y2="307" stroke="#ef843c" stroke-width="1.5"/><line x1="1578" y1="307" x2="1583.5" y2="307" stroke="#e24d42" stroke-width="1.5"/>
<rect x="1134.3" y="353" width="16" height="4" fill="#7eb26d"/>
<text x="1160.8" y="360.3" font-size="15" fill="#c7d0d9" text-anchor="start" font-weight="400" >HTTP 1xx</text>
<rect x="1238.5" y="353" width="16" height="4" fill="#eab839"/>
<text x="1265.0" y="360.3" font-size="15" fill="#c7d0d9" text-anchor="start" font-weight="400" >HTTP 2xx</text>
<rect x="1343.3" y="353" width="16" height="4" fill="#6ed0e0"/>
<text x="1369.8" y="360.3" font-size="15" fill="#c7d0d9" text-anchor="start" font-weight="400" >HTTP 3xx</text>
<rect x="1448.3" y="353" width="16" height="4" fill="#ef843c"/>
<text x="1474.8" y="360.3" font-size="15" fill="#c7d0d9" text-anchor="start" font-weight="400" >HTTP 4xx</text>
<rect x="1134.3" y="375" width="16" height="4" fill="#e24d42"/>
<text x="1160.8" y="382.3" font-size="15" fill="#c7d0d9" text-anchor="start" font-weight="400" >HTTP 5xx</text>
<rect x="1625.5" y="125.5" width="274" height="274" rx="3" fill="#141619" stroke="#202226" stroke-width="1"/>
<path d="M1628,125 L1662,125 L1625,162 L1625,128 Q1625,125 1628,125 Z" fill="#202226"/>
<g fill="#8e9297"><rect x="1634.2" y="132" width="2.8" height="1.8"/><path d="M1632.9,135.2 h4.1 v5.2 h1.1 v1.5 h-5.6 v-1.5 h1.1 v-3.7 h-0.7 z"/></g>
<path d="M1729,139.5 c-2.5,-3 -7.5,-2 -7.5,2.3 c0,3.6 4.6,6.5 7.5,8.2 c2.9,-1.7 7.5,-4.6 7.5,-8.2 c0,-4.3 -5,-5.3 -7.5,-2.3 z" fill="#ff9830"/>
<text x="1743" y="150" font-size="17.5" fill="#d8d9da" text-anchor="start" font-weight="400" stroke="#d8d9da" stroke-width="0.5" >Cluster Operators by Failed Condition</text>
<text x="1675" y="347" font-size="15" fill="#c7d0d9" text-anchor="end" font-weight="400" >0</text>
<text x="1675" y="315.1" font-size="15" fill="#c7d0d9" text-anchor="end" font-weight="400" >1</text>
<text x="1675" y="283.2" font-size="15" fill="#c7d0d9" text-anchor="end" font-weight="400" >2</text>
<text x="1675" y="251" font-size="15" fill="#c7d0d9" text-anchor="end" font-weight="400" >3</text>
<text x="1675" y="219" font-size="15" fill="#c7d0d9" text-anchor="end" font-weight="400" >4</text>
<text x="1675" y="186.8" font-size="15" fill="#c7d0d9" text-anchor="end" font-weight="400" >5</text>
<rect x="1681.2" y="310.1" width="100" height="31.899999999999977" fill="#35322d"/>
<rect x="1681.2" y="278.2" width="100" height="31.900000000000034" fill="#3e3129"/>
<rect x="1681.2" y="246" width="100" height="32.19999999999999" fill="#333438"/>
<rect x="1681.2" y="214" width="100" height="32" fill="#3c2a27"/>
<rect x="1681.2" y="181.8" width="100" height="32.19999999999999" fill="#2b2022"/>
<line x1="1681.2" y1="342" x2="1745" y2="342" stroke="#e24d42" stroke-width="2.5"/>
<line x1="1681.2" y1="310.1" x2="1745" y2="310.1" stroke="#7eb26d" stroke-width="1.5"/>
<line x1="1681.2" y1="278.2" x2="1745" y2="278.2" stroke="#eab839" stroke-width="1.5"/>
<line x1="1681.2" y1="246" x2="1745" y2="246" stroke="#6ed0e0" stroke-width="1.5"/>
<line x1="1681.2" y1="214" x2="1745" y2="214" stroke="#ef843c" stroke-width="1.5"/>
<line x1="1681.2" y1="181.8" x2="1745" y2="181.8" stroke="#3a2c2e" stroke-width="1"/>
<text x="0" y="0" font-size="15" fill="#c7d0d9" text-anchor="middle" transform="translate(1650.5,275.3) rotate(-90)">Conditions</text>
<rect x="80.5" y="457.5" width="675" height="274" rx="3" fill="#141619" stroke="#202226" stroke-width="1"/>
<path d="M83,457 L117,457 L80,494 L80,460 Q80,457 83,457 Z" fill="#202226"/>
<g fill="#8e9297"><rect x="89.2" y="464" width="2.8" height="1.8"/><path d="M87.9,467.2 h4.1 v5.2 h1.1 v1.5 h-5.6 v-1.5 h1.1 v-3.7 h-0.7 z"/></g>
<text x="418.0" y="482" font-size="17.5" fill="#d8d9da" text-anchor="middle" font-weight="400" stroke="#d8d9da" stroke-width="0.5" >Waiting and Terminated Containers</text>
<line x1="111" y1="685.5" x2="726" y2="685.5" stroke="rgba(255,255,255,0.17)" stroke-width="1"/>
<text x="100.5" y="688.6999999999999" font-size="15" fill="#c7d0d9" text-anchor="end" font-weight="400" stroke="#c7d0d9" stroke-width="0.25" >0</text>
<line x1="111" y1="627.5" x2="726" y2="627.5" stroke="rgba(255,255,255,0.17)" stroke-width="1"/>
<text x="100.5" y="630.8" font-size="15" fill="#c7d0d9" text-anchor="end" font-weight="400" stroke="#c7d0d9" stroke-width="0.25" >1</text>
<line x1="111" y1="571.5" x2="726" y2="571.5" stroke="rgba(255,255,255,0.17)" stroke-width="1"/>
<text x="100.5" y="574.1999999999999" font-size="15" fill="#c7d0d9" text-anchor="end" font-weight="400" stroke="#c7d0d9" stroke-width="0.25" >2</text>
<line x1="111" y1="514.5" x2="726" y2="514.5" stroke="rgba(255,255,255,0.17)" stroke-width="1"/>
<text x="100.5" y="517.6999999999999" font-size="15" fill="#c7d0d9" text-anchor="end" font-weight="400" stroke="#c7d0d9" stroke-width="0.25" >3</text>
<line x1="147.5" y1="514" x2="147.5" y2="686" stroke="rgba(255,255,255,0.17)" stroke-width="1"/>
<text x="147.5" y="707" font-size="15" fill="#c7d0d9" text-anchor="middle" font-weight="400" stroke="#c7d0d9" stroke-width="0.25" >12:30</text>
<line x1="250.5" y1="514" x2="250.5" y2="686" stroke="rgba(255,255,255,0.17)" stroke-width="1"/>
<text x="250" y="707" font-size="15" fill="#c7d0d9" text-anchor="middle" font-weight="400" stroke="#c7d0d9" stroke-width="0.25" >13:00</text>
<line x1="352.5" y1="514" x2="352.5" y2="686" stroke="rgba(255,255,255,0.17)" stroke-width="1"/>
<text x="352.5" y="707" font-size="15" fill="#c7d0d9" text-anchor="middle" font-weight="400" stroke="#c7d0d9" stroke-width="0.25" >13:30</text>
<line x1="455.5" y1="514" x2="455.5" y2="686" stroke="rgba(255,255,255,0.17)" stroke-width="1"/>
<text x="455" y="707" font-size="15" fill="#c7d0d9" text-anchor="middle" font-weight="400" stroke="#c7d0d9" stroke-width="0.25" >14:00</text>
<line x1="557.5" y1="514" x2="557.5" y2="686" stroke="rgba(255,255,255,0.17)" stroke-width="1"/>
<text x="557.6" y="707" font-size="15" fill="#c7d0d9" text-anchor="middle" font-weight="400" stroke="#c7d0d9" stroke-width="0.25" >14:30</text>
<line x1="660.5" y1="514" x2="660.5" y2="686" stroke="rgba(255,255,255,0.17)" stroke-width="1"/>
<text x="660" y="707" font-size="15" fill="#c7d0d9" text-anchor="middle" font-weight="400" stroke="#c7d0d9" stroke-width="0.25" >15:00</text>
<line x1="156.9" y1="627.7" x2="156.9" y2="685.4" stroke="#7eb26d" stroke-opacity="0.35" stroke-width="1.2"/><circle cx="156.9" cy="627.7" r="1" fill="#7eb26d"/>
<line x1="675.5" y1="571.1" x2="675.5" y2="685.4" stroke="#eab839" stroke-opacity="0.35" stroke-width="1.2"/><circle cx="675.5" cy="571.1" r="1" fill="#eab839"/>
<rect x="766.5" y="457.5" width="676" height="274" rx="3" fill="#141619" stroke="#202226" stroke-width="1"/>
<text x="1104.5" y="482" font-size="17.5" fill="#d8d9da" text-anchor="middle" font-weight="400" stroke="#d8d9da" stroke-width="0.5" >Kubelet Operations Latency</text>
<line x1="813" y1="685.5" x2="1412" y2="685.5" stroke="rgba(255,255,255,0.17)" stroke-width="1"/>
<text x="806" y="688.8" font-size="15" fill="#c7d0d9" text-anchor="end" font-weight="400" stroke="#c7d0d9" stroke-width="0.25" >0 s</text>
<line x1="813" y1="642.5" x2="1412" y2="642.5" stroke="rgba(255,255,255,0.17)" stroke-width="1"/>
<text x="806" y="646.025" font-size="15" fill="#c7d0d9" text-anchor="end" font-weight="400" stroke="#c7d0d9" stroke-width="0.25" >5 s</text>
<line x1="813" y1="600.5" x2="1412" y2="600.5" stroke="rgba(255,255,255,0.17)" stroke-width="1"/>
<text x="806" y="603.25" font-size="15" fill="#c7d0d9" text-anchor="end" font-weight="400" stroke="#c7d0d9" stroke-width="0.25" >10 s</text>
<line x1="813" y1="557.5" x2="1412" y2="557.5" stroke="rgba(255,255,255,0.17)" stroke-width="1"/>
<text x="806" y="560.475" font-size="15" fill="#c7d0d9" text-anchor="end" font-weight="400" stroke="#c7d0d9" stroke-width="0.25" >15 s</text>
<line x1="813" y1="514.5" x2="1412" y2="514.5" stroke="rgba(255,255,255,0.17)" stroke-width="1"/>
<text x="806" y="517.6999999999999" font-size="15" fill="#c7d0d9" text-anchor="end" font-weight="400" stroke="#c7d0d9" stroke-width="0.25" >20 s</text>
<line x1="849.5" y1="514" x2="849.5" y2="686" stroke="rgba(255,255,255,0.17)" stroke-width="1"/>
<text x="849" y="707" font-size="15" fill="#c7d0d9" text-anchor="middle" font-weight="400" stroke="#c7d0d9" stroke-width="0.25" >12:30</text>
<line x1="949.5" y1="514" x2="949.5" y2="686" stroke="rgba(255,255,255,0.17)" stroke-width="1"/>
<text x="949" y="707" font-size="15" fill="#c7d0d9" text-anchor="middle" font-weight="400" stroke="#c7d0d9" stroke-width="0.25" >13:00</text>
<line x1="1049.5" y1="514" x2="1049.5" y2="686" stroke="rgba(255,255,255,0.17)" stroke-width="1"/>
<text x="1049" y="707" font-size="15" fill="#c7d0d9" text-anchor="middle" font-weight="400" stroke="#c7d0d9" stroke-width="0.25" >13:30</text>
<line x1="1148.5" y1="514" x2="1148.5" y2="686" stroke="rgba(255,255,255,0.17)" stroke-width="1"/>
<text x="1148.3" y="707" font-size="15" fill="#c7d0d9" text-anchor="middle" font-weight="400" stroke="#c7d0d9" stroke-width="0.25" >14:00</text>
<line x1="1248.5" y1="514" x2="1248.5" y2="686" stroke="rgba(255,255,255,0.17)" stroke-width="1"/>
<text x="1248.3" y="707" font-size="15" fill="#c7d0d9" text-anchor="middle" font-weight="400" stroke="#c7d0d9" stroke-width="0.25" >14:30</text>
<line x1="1348.5" y1="514" x2="1348.5" y2="686" stroke="rgba(255,255,255,0.17)" stroke-width="1"/>
<text x="1348.4" y="707" font-size="15" fill="#c7d0d9" text-anchor="middle" font-weight="400" stroke="#c7d0d9" stroke-width="0.25" >15:00</text>
<path d="M813.4,642.6 L814.9,642.8 L816.4,642.6 L817.9,643.0 L819.4,643.1 L820.9,642.6 L822.4,642.4 L823.9,642.5 L825.4,642.6 L826.9,642.6 L828.4,642.6 L829.9,643.1 L831.4,642.8 L832.9,642.9 L834.4,643.2 L835.9,643.2 L837.4,643.0 L838.9,643.0 L840.4,642.7 L841.9,662.1 L843.4,674.1 L844.9,649.0 L846.4,642.4 L847.9,642.4 L849.4,642.9 L850.9,643.1 L852.4,643.1 L853.9,643.1 L855.4,643.1 L856.9,642.7 L858.4,642.5 L859.9,642.5 L861.4,642.8 L862.9,642.7 L864.4,642.6 L865.9,643.2 L867.4,642.7 L868.9,642.5 L870.4,642.6 L871.9,642.6 L873.4,642.8 L874.9,643.1 L876.4,682.0 L877.9,657.8 L879.4,642.6 L880.9,642.4 L882.4,642.9 L883.9,642.9 L885.4,642.4 L886.9,642.6 L888.4,643.1 L889.9,643.1 L891.4,643.1 L892.9,642.5 L894.4,642.6 L895.9,643.1 L897.4,642.5 L898.9,642.4 L900.4,642.7 L901.9,643.0 L903.4,642.8 L904.9,643.1 L906.4,643.2 L907.9,642.4 L909.4,642.7 L910.9,642.8 L912.4,642.5 L913.9,642.9 L915.4,642.5 L916.9,642.5 L918.4,643.1 L919.9,643.0 L921.4,643.0 L922.9,643.0 L924.4,642.8 L925.9,643.0 L927.4,642.9 L928.9,643.1 L930.4,642.5 L931.9,643.0 L933.4,642.9 L934.9,657.5 L936.4,681.9 L937.9,664.3 L939.4,663.9 L940.9,664.2 L942.4,664.2 L943.9,664.2 L945.4,664.6 L946.9,674.1 L948.4,649.7 L949.9,643.2 L951.4,642.6 L952.9,643.1 L954.4,642.8 L955.9,642.6 L957.4,642.8 L958.9,643.0 L960.4,642.8 L961.9,642.8 L963.4,642.6 L964.9,643.2 L966.4,642.8 L967.9,662.8 L969.4,674.2 L970.9,649.2 L972.4,642.8 L973.9,642.8 L975.4,642.6 L976.9,642.5 L978.4,642.9 L979.9,642.7 L981.4,642.8 L982.9,642.8 L984.4,642.7 L985.9,642.9 L987.4,647.7 L988.9,672.4 L990.4,663.8 L991.9,664.0 L993.4,663.9 L994.9,663.8 L996.4,664.4 L997.9,664.2 L999.4,663.8 L1000.9,663.9 L1002.4,676.0 L1003.9,651.4 L1005.4,642.9 L1006.9,643.2 L1008.4,643.0 L1009.9,643.2 L1011.4,642.7 L1012.9,642.6 L1014.4,642.5 L1015.9,643.1 L1017.4,642.6 L1018.9,642.7 L1020.4,643.1 L1021.9,662.2 L1023.4,663.8 L1024.9,664.5 L1026.4,663.8 L1027.9,664.3 L1029.4,664.2 L1030.9,663.8 L1032.4,663.9 L1033.9,664.5 L1035.4,664.3 L1036.9,662.5 L1038.4,643.0 L1039.9,643.1 L1041.4,643.0 L1042.9,642.6 L1044.4,643.2 L1045.9,642.8 L1047.4,642.9 L1048.9,643.2 L1050.4,643.0 L1051.9,642.7 L1053.4,642.8 L1054.9,643.2 L1056.4,665.4 L1057.9,664.0 L1059.4,663.8 L1060.9,664.6 L1062.4,664.4 L1063.9,664.6 L1065.4,664.0 L1066.9,664.4 L1068.4,664.5 L1069.9,664.3 L1071.4,674.9 L1072.9,673.8 L1074.4,649.6 L1075.9,643.1 L1077.4,642.5 L1078.9,642.8 L1080.4,642.7 L1081.9,643.2 L1083.4,643.2 L1084.9,642.7 L1086.4,642.9 L1087.9,643.2 L1089.4,642.4 L1090.9,642.7 L1092.4,654.1 L1093.9,679.3 L1095.4,663.9 L1096.9,664.6 L1098.4,663.9 L1099.9,664.3 L1101.4,675.4 L1102.9,683.8 L1104.4,683.5 L1105.9,677.5 L1107.4,653.0 L1108.9,642.8 L1110.4,643.0 L1111.9,643.2 L1113.4,643.1 L1114.9,643.2 L1116.4,643.1 L1117.9,643.0 L1119.4,643.0 L1120.9,642.6 L1122.4,643.0 L1123.9,642.8 L1125.4,643.1 L1126.9,643.0 L1128.4,643.2 L1129.9,643.0 L1131.4,643.2 L1132.9,642.6 L1134.4,654.3 L1135.9,679.2 L1137.4,683.9 L1138.9,683.5 L1140.4,664.5 L1141.9,642.6 L1143.4,642.9 L1144.9,642.8 L1146.4,642.5 L1147.9,642.9 L1149.4,642.8 L1150.9,642.7 L1152.4,642.4 L1153.9,643.0 L1155.4,642.5 L1156.9,642.6 L1158.4,642.7 L1159.9,642.9 L1161.4,643.0 L1162.9,643.2 L1164.4,643.1 L1165.9,643.2 L1167.4,642.6 L1168.9,643.0 L1170.4,643.1 L1171.9,667.8 L1173.4,683.6 L1174.9,683.6 L1176.4,659.1 L1177.9,643.0 L1179.4,643.0 L1180.9,643.0 L1182.4,642.9 L1183.9,643.1 L1185.4,642.9 L1186.9,643.0 L1188.4,642.4 L1189.9,642.4 L1191.4,642.8 L1192.9,643.0 L1194.4,642.4 L1195.9,643.0 L1197.4,642.9 L1198.9,643.3 L1200.4,642.9 L1201.9,642.8 L1203.4,642.8 L1204.9,643.1 L1206.4,662.5 L1207.9,664.6 L1209.4,664.4 L1210.9,661.2 L1212.4,642.9 L1213.9,643.2 L1215.4,643.2 L1216.9,643.0 L1218.4,643.1 L1219.9,642.8 L1221.4,642.8 L1222.9,642.6 L1224.4,642.7 L1225.9,642.6 L1227.4,642.5 L1228.9,642.9 L1230.4,643.0 L1231.9,642.4 L1233.4,643.1 L1234.9,642.6 L1236.4,642.7 L1237.9,643.2 L1239.4,642.5 L1240.9,642.5 L1242.4,650.9 L1243.9,675.5 L1245.4,665.6 L1246.9,643.1 L1248.4,642.8 L1249.9,642.8 L1251.4,642.5 L1252.9,642.6 L1254.4,642.5 L1255.9,642.8 L1257.4,642.5 L1258.9,642.7 L1260.4,642.7 L1261.9,643.1 L1263.4,643.2 L1264.9,643.1 L1266.4,642.9 L1267.9,643.2 L1269.4,642.5 L1270.9,642.8 L1272.4,642.7 L1273.9,642.7 L1275.4,642.7 L1276.9,642.8 L1278.4,643.2 L1279.9,642.6 L1281.4,660.7 L1282.9,642.8 L1284.4,642.8 L1285.9,642.7 L1287.4,643.2 L1288.9,642.6 L1290.4,643.0 L1291.9,643.2 L1293.4,643.0 L1294.9,642.6 L1296.4,675.9 L1297.9,650.8 L1299.4,642.4 L1300.9,642.8 L1302.4,642.9 L1303.9,642.8 L1305.4,642.7 L1306.9,642.6 L1308.4,642.7 L1309.9,642.7 L1311.4,643.2 L1312.9,643.1 L1314.4,643.0 L1315.9,642.6 L1317.4,643.0 L1318.9,642.8 L1320.4,643.2 L1321.9,643.2 L1323.4,643.0 L1324.9,642.7 L1326.4,642.7 L1327.9,642.7 L1329.4,643.0 L1330.9,642.8 L1332.4,642.9 L1333.9,642.9 L1335.4,643.2 L1336.9,642.5 L1338.4,643.1 L1339.9,642.4 L1341.4,642.5 L1342.9,643.2 L1344.4,642.9 L1345.9,642.6 L1347.4,642.4 L1348.9,642.9 L1350.4,643.0 L1351.9,643.1 L1353.4,642.4 L1354.9,643.1 L1356.4,642.8 L1357.9,643.1 L1359.4,642.8 L1360.9,642.4 L1362.4,643.1 L1363.9,642.6 L1365.4,642.8 L1366.9,642.5 L1368.4,642.7 L1369.9,643.1 L1371.4,642.5 L1372.9,642.8 L1374.4,643.2 L1375.9,643.2 L1377.4,642.8 L1378.9,642.9 L1380.4,643.0 L1381.9,643.1 L1383.4,643.0 L1384.9,643.0 L1386.4,642.5 L1387.9,643.3 L1389.4,642.6 L1390.9,642.5 L1392.4,643.2 L1393.9,642.5 L1395.4,642.6 L1396.9,642.5 L1398.4,643.0 L1399.9,642.9 L1401.4,642.9 L1402.9,642.4 L1404.4,642.7 L1405.9,642.9 L1407.4,642.9 L1408.9,643.0 L1410.4,643.2 L1410.4,685.6 L813.4,685.6 Z" fill="#a99ee0" fill-opacity="0.1"/>
<path d="M813.4,642.6 L814.9,642.8 L816.4,642.6 L817.9,643.0 L819.4,643.1 L820.9,642.6 L822.4,642.4 L823.9,642.5 L825.4,642.6 L826.9,642.6 L828.4,642.6 L829.9,643.1 L831.4,642.8 L832.9,642.9 L834.4,643.2 L835.9,643.2 L837.4,643.0 L838.9,643.0 L840.4,642.7 L841.9,662.1 L843.4,674.1 L844.9,649.0 L846.4,642.4 L847.9,642.4 L849.4,642.9 L850.9,643.1 L852.4,643.1 L853.9,643.1 L855.4,643.1 L856.9,642.7 L858.4,642.5 L859.9,642.5 L861.4,642.8 L862.9,642.7 L864.4,642.6 L865.9,643.2 L867.4,642.7 L868.9,642.5 L870.4,642.6 L871.9,642.6 L873.4,642.8 L874.9,643.1 L876.4,682.0 L877.9,657.8 L879.4,642.6 L880.9,642.4 L882.4,642.9 L883.9,642.9 L885.4,642.4 L886.9,642.6 L888.4,643.1 L889.9,643.1 L891.4,643.1 L892.9,642.5 L894.4,642.6 L895.9,643.1 L897.4,642.5 L898.9,642.4 L900.4,642.7 L901.9,643.0 L903.4,642.8 L904.9,643.1 L906.4,643.2 L907.9,642.4 L909.4,642.7 L910.9,642.8 L912.4,642.5 L913.9,642.9 L915.4,642.5 L916.9,642.5 L918.4,643.1 L919.9,643.0 L921.4,643.0 L922.9,643.0 L924.4,642.8 L925.9,643.0 L927.4,642.9 L928.9,643.1 L930.4,642.5 L931.9,643.0 L933.4,642.9 L934.9,657.5 L936.4,681.9 L937.9,664.3 L939.4,663.9 L940.9,664.2 L942.4,664.2 L943.9,664.2 L945.4,664.6 L946.9,674.1 L948.4,649.7 L949.9,643.2 L951.4,642.6 L952.9,643.1 L954.4,642.8 L955.9,642.6 L957.4,642.8 L958.9,643.0 L960.4,642.8 L961.9,642.8 L963.4,642.6 L964.9,643.2 L966.4,642.8 L967.9,662.8 L969.4,674.2 L970.9,649.2 L972.4,642.8 L973.9,642.8 L975.4,642.6 L976.9,642.5 L978.4,642.9 L979.9,642.7 L981.4,642.8 L982.9,642.8 L984.4,642.7 L985.9,642.9 L987.4,647.7 L988.9,672.4 L990.4,663.8 L991.9,664.0 L993.4,663.9 L994.9,663.8 L996.4,664.4 L997.9,664.2 L999.4,663.8 L1000.9,663.9 L1002.4,676.0 L1003.9,651.4 L1005.4,642.9 L1006.9,643.2 L1008.4,643.0 L1009.9,643.2 L1011.4,642.7 L1012.9,642.6 L1014.4,642.5 L1015.9,643.1 L1017.4,642.6 L1018.9,642.7 L1020.4,643.1 L1021.9,662.2 L1023.4,663.8 L1024.9,664.5 L1026.4,663.8 L1027.9,664.3 L1029.4,664.2 L1030.9,663.8 L1032.4,663.9 L1033.9,664.5 L1035.4,664.3 L1036.9,662.5 L1038.4,643.0 L1039.9,643.1 L1041.4,643.0 L1042.9,642.6 L1044.4,643.2 L1045.9,642.8 L1047.4,642.9 L1048.9,643.2 L1050.4,643.0 L1051.9,642.7 L1053.4,642.8 L1054.9,643.2 L1056.4,665.4 L1057.9,664.0 L1059.4,663.8 L1060.9,664.6 L1062.4,664.4 L1063.9,664.6 L1065.4,664.0 L1066.9,664.4 L1068.4,664.5 L1069.9,664.3 L1071.4,674.9 L1072.9,673.8 L1074.4,649.6 L1075.9,643.1 L1077.4,642.5 L1078.9,642.8 L1080.4,642.7 L1081.9,643.2 L1083.4,643.2 L1084.9,642.7 L1086.4,642.9 L1087.9,643.2 L1089.4,642.4 L1090.9,642.7 L1092.4,654.1 L1093.9,679.3 L1095.4,663.9 L1096.9,664.6 L1098.4,663.9 L1099.9,664.3 L1101.4,675.4 L1102.9,683.8 L1104.4,683.5 L1105.9,677.5 L1107.4,653.0 L1108.9,642.8 L1110.4,643.0 L1111.9,643.2 L1113.4,643.1 L1114.9,643.2 L1116.4,643.1 L1117.9,643.0 L1119.4,643.0 L1120.9,642.6 L1122.4,643.0 L1123.9,642.8 L1125.4,643.1 L1126.9,643.0 L1128.4,643.2 L1129.9,643.0 L1131.4,643.2 L1132.9,642.6 L1134.4,654.3 L1135.9,679.2 L1137.4,683.9 L1138.9,683.5 L1140.4,664.5 L1141.9,642.6 L1143.4,642.9 L1144.9,642.8 L1146.4,642.5 L1147.9,642.9 L1149.4,642.8 L1150.9,642.7 L1152.4,642.4 L1153.9,643.0 L1155.4,642.5 L1156.9,642.6 L1158.4,642.7 L1159.9,642.9 L1161.4,643.0 L1162.9,643.2 L1164.4,643.1 L1165.9,643.2 L1167.4,642.6 L1168.9,643.0 L1170.4,643.1 L1171.9,667.8 L1173.4,683.6 L1174.9,683.6 L1176.4,659.1 L1177.9,643.0 L1179.4,643.0 L1180.9,643.0 L1182.4,642.9 L1183.9,643.1 L1185.4,642.9 L1186.9,643.0 L1188.4,642.4 L1189.9,642.4 L1191.4,642.8 L1192.9,643.0 L1194.4,642.4 L1195.9,643.0 L1197.4,642.9 L1198.9,643.3 L1200.4,642.9 L1201.9,642.8 L1203.4,642.8 L1204.9,643.1 L1206.4,662.5 L1207.9,664.6 L1209.4,664.4 L1210.9,661.2 L1212.4,642.9 L1213.9,643.2 L1215.4,643.2 L1216.9,643.0 L1218.4,643.1 L1219.9,642.8 L1221.4,642.8 L1222.9,642.6 L1224.4,642.7 L1225.9,642.6 L1227.4,642.5 L1228.9,642.9 L1230.4,643.0 L1231.9,642.4 L1233.4,643.1 L1234.9,642.6 L1236.4,642.7 L1237.9,643.2 L1239.4,642.5 L1240.9,642.5 L1242.4,650.9 L1243.9,675.5 L1245.4,665.6 L1246.9,643.1 L1248.4,642.8 L1249.9,642.8 L1251.4,642.5 L1252.9,642.6 L1254.4,642.5 L1255.9,642.8 L1257.4,642.5 L1258.9,642.7 L1260.4,642.7 L1261.9,643.1 L1263.4,643.2 L1264.9,643.1 L1266.4,642.9 L1267.9,643.2 L1269.4,642.5 L1270.9,642.8 L1272.4,642.7 L1273.9,642.7 L1275.4,642.7 L1276.9,642.8 L1278.4,643.2 L1279.9,642.6 L1281.4,660.7 L1282.9,642.8 L1284.4,642.8 L1285.9,642.7 L1287.4,643.2 L1288.9,642.6 L1290.4,643.0 L1291.9,643.2 L1293.4,643.0 L1294.9,642.6 L1296.4,675.9 L1297.9,650.8 L1299.4,642.4 L1300.9,642.8 L1302.4,642.9 L1303.9,642.8 L1305.4,642.7 L1306.9,642.6 L1308.4,642.7 L1309.9,642.7 L1311.4,643.2 L1312.9,643.1 L1314.4,643.0 L1315.9,642.6 L1317.4,643.0 L1318.9,642.8 L1320.4,643.2 L1321.9,643.2 L1323.4,643.0 L1324.9,642.7 L1326.4,642.7 L1327.9,642.7 L1329.4,643.0 L1330.9,642.8 L1332.4,642.9 L1333.9,642.9 L1335.4,643.2 L1336.9,642.5 L1338.4,643.1 L1339.9,642.4 L1341.4,642.5 L1342.9,643.2 L1344.4,642.9 L1345.9,642.6 L1347.4,642.4 L1348.9,642.9 L1350.4,643.0 L1351.9,643.1 L1353.4,642.4 L1354.9,643.1 L1356.4,642.8 L1357.9,643.1 L1359.4,642.8 L1360.9,642.4 L1362.4,643.1 L1363.9,642.6 L1365.4,642.8 L1366.9,642.5 L1368.4,642.7 L1369.9,643.1 L1371.4,642.5 L1372.9,642.8 L1374.4,643.2 L1375.9,643.2 L1377.4,642.8 L1378.9,642.9 L1380.4,643.0 L1381.9,643.1 L1383.4,643.0 L1384.9,643.0 L1386.4,642.5 L1387.9,643.3 L1389.4,642.6 L1390.9,642.5 L1392.4,643.2 L1393.9,642.5 L1395.4,642.6 L1396.9,642.5 L1398.4,643.0 L1399.9,642.9 L1401.4,642.9 L1402.9,642.4 L1404.4,642.7 L1405.9,642.9 L1407.4,642.9 L1408.9,643.0 L1410.4,643.2" fill="none" stroke="#a99ee0" stroke-width="1.25" stroke-linejoin="round"/>
<path d="M813.4,664.6 L814.9,663.9 L816.4,664.4 L817.9,663.8 L819.4,664.4 L820.9,664.4 L822.4,664.2 L823.9,664.5 L825.4,664.3 L826.9,663.8 L828.4,663.9 L829.9,663.9 L831.4,664.1 L832.9,663.9 L834.4,663.8 L835.9,664.2 L837.4,664.0 L838.9,669.5 L840.4,677.2 L841.9,677.9 L843.4,677.7 L844.9,675.6 L846.4,667.7 L847.9,664.6 L849.4,663.8 L850.9,664.5 L852.4,664.2 L853.9,664.3 L855.4,664.4 L856.9,664.0 L858.4,663.8 L859.9,664.4 L861.4,664.1 L862.9,664.4 L864.4,664.2 L865.9,664.3 L867.4,664.5 L868.9,664.5 L870.4,664.5 L871.9,663.9 L873.4,664.2 L874.9,669.4 L876.4,677.0 L877.9,675.3 L879.4,667.5 L880.9,664.5 L882.4,664.5 L883.9,664.6 L885.4,664.3 L886.9,664.6 L888.4,664.4 L889.9,664.4 L891.4,664.2 L892.9,663.9 L894.4,664.0 L895.9,664.3 L897.4,664.3 L898.9,664.2 L900.4,664.3 L901.9,664.4 L903.4,664.6 L904.9,664.4 L906.4,663.8 L907.9,664.5 L909.4,664.2 L910.9,664.1 L912.4,663.9 L913.9,664.5 L915.4,664.4 L916.9,664.4 L918.4,664.3 L919.9,664.3 L921.4,663.8 L922.9,663.9 L924.4,663.9 L925.9,664.6 L927.4,664.6 L928.9,664.0 L930.4,663.9 L931.9,664.2 L933.4,671.8 L934.9,678.3 L936.4,678.0 L937.9,677.5 L939.4,677.6 L940.9,677.6 L942.4,677.5 L943.9,678.1 L945.4,678.2 L946.9,670.2 L948.4,649.9 L949.9,644.4 L951.4,644.2 L952.9,644.3 L954.4,644.4 L955.9,644.3 L957.4,644.6 L958.9,644.5 L960.4,644.9 L961.9,644.3 L963.4,644.8 L964.9,660.2 L966.4,664.1 L967.9,671.0 L969.4,678.2 L970.9,675.9 L972.4,667.4 L973.9,664.0 L975.4,664.5 L976.9,664.6 L978.4,664.2 L979.9,664.1 L981.4,664.3 L982.9,664.4 L984.4,664.1 L985.9,669.6 L987.4,677.5 L988.9,677.9 L990.4,677.5 L991.9,677.8 L993.4,677.6 L994.9,677.9 L996.4,678.1 L997.9,678.1 L999.4,677.5 L1000.9,677.7 L1002.4,678.1 L1003.9,676.1 L1005.4,667.5 L1006.9,664.1 L1008.4,664.3 L1009.9,664.4 L1011.4,664.1 L1012.9,663.8 L1014.4,664.4 L1015.9,664.6 L1017.4,664.4 L1018.9,664.3 L1020.4,671.7 L1021.9,678.2 L1023.4,677.6 L1024.9,677.7 L1026.4,677.9 L1027.9,678.2 L1029.4,677.5 L1030.9,678.1 L1032.4,677.6 L1033.9,678.1 L1035.4,678.1 L1036.9,677.7 L1038.4,673.1 L1039.9,664.4 L1041.4,664.2 L1042.9,664.5 L1044.4,664.4 L1045.9,664.3 L1047.4,664.1 L1048.9,663.8 L1050.4,664.5 L1051.9,664.3 L1053.4,666.6 L1054.9,674.2 L1056.4,678.2 L1057.9,678.3 L1059.4,678.3 L1060.9,678.0 L1062.4,677.6 L1063.9,677.6 L1065.4,677.7 L1066.9,677.5 L1068.4,677.5 L1069.9,678.0 L1071.4,678.2 L1072.9,677.5 L1074.4,672.8 L1075.9,665.2 L1077.4,664.1 L1078.9,664.3 L1080.4,664.3 L1081.9,664.4 L1083.4,664.5 L1084.9,664.6 L1086.4,664.4 L1087.9,664.3 L1089.4,663.8 L1090.9,669.5 L1092.4,677.0 L1093.9,678.2 L1095.4,678.0 L1096.9,677.6 L1098.4,677.6 L1099.9,678.0 L1101.4,678.3 L1102.9,677.9 L1104.4,678.0 L1105.9,677.5 L1107.4,678.2 L1108.9,670.4 L1110.4,663.9 L1111.9,664.6 L1113.4,664.3 L1114.9,663.9 L1116.4,664.0 L1117.9,664.6 L1119.4,664.6 L1120.9,664.6 L1122.4,663.9 L1123.9,664.4 L1125.4,664.0 L1126.9,663.9 L1128.4,664.4 L1129.9,664.4 L1131.4,666.0 L1132.9,674.5 L1134.4,678.1 L1135.9,677.7 L1137.4,678.1 L1138.9,678.1 L1140.4,678.3 L1141.9,670.0 L1143.4,663.9 L1144.9,664.1 L1146.4,663.8 L1147.9,664.6 L1149.4,664.4 L1150.9,664.2 L1152.4,663.8 L1153.9,663.8 L1155.4,664.3 L1156.9,664.4 L1158.4,664.3 L1159.9,664.2 L1161.4,663.8 L1162.9,664.5 L1164.4,664.0 L1165.9,664.0 L1167.4,663.9 L1168.9,668.9 L1170.4,677.3 L1171.9,678.0 L1173.4,678.1 L1174.9,678.0 L1176.4,677.7 L1177.9,670.6 L1179.4,664.5 L1180.9,664.0 L1182.4,664.4 L1183.9,664.6 L1185.4,664.6 L1186.9,664.2 L1188.4,664.4 L1189.9,663.8 L1191.4,663.9 L1192.9,663.8 L1194.4,664.4 L1195.9,664.6 L1197.4,664.6 L1198.9,664.2 L1200.4,664.0 L1201.9,664.3 L1203.4,666.6 L1204.9,674.7 L1206.4,677.8 L1207.9,677.8 L1209.4,677.7 L1210.9,669.9 L1212.4,664.1 L1213.9,664.5 L1215.4,663.9 L1216.9,664.4 L1218.4,664.2 L1219.9,664.3 L1221.4,664.0 L1222.9,664.5 L1224.4,664.4 L1225.9,664.4 L1227.4,664.5 L1228.9,663.9 L1230.4,664.1 L1231.9,664.4 L1233.4,664.3 L1234.9,663.8 L1236.4,664.2 L1237.9,664.4 L1239.4,663.9 L1240.9,669.0 L1242.4,676.9 L1243.9,678.2 L1245.4,677.9 L1246.9,670.0 L1248.4,663.9 L1249.9,663.9 L1251.4,664.6 L1252.9,664.4 L1254.4,664.5 L1255.9,664.5 L1257.4,663.8 L1258.9,664.1 L1260.4,663.8 L1261.9,664.3 L1263.4,663.9 L1264.9,664.3 L1266.4,664.4 L1267.9,664.0 L1269.4,663.8 L1270.9,664.5 L1272.4,664.1 L1273.9,664.1 L1275.4,664.5 L1276.9,664.3 L1278.4,664.5 L1279.9,664.5 L1281.4,672.1 L1282.9,670.2 L1284.4,664.1 L1285.9,664.5 L1287.4,664.6 L1288.9,664.4 L1290.4,664.1 L1291.9,664.5 L1293.4,664.4 L1294.9,664.5 L1296.4,664.0 L1297.9,664.2 L1299.4,664.6 L1300.9,664.6 L1302.4,664.3 L1303.9,664.2 L1305.4,664.1 L1306.9,664.6 L1308.4,664.5 L1309.9,664.0 L1311.4,664.3 L1312.9,664.4 L1314.4,664.4 L1315.9,663.8 L1317.4,664.4 L1318.9,664.2 L1320.4,664.3 L1321.9,664.3 L1323.4,663.9 L1324.9,663.8 L1326.4,664.3 L1327.9,664.5 L1329.4,664.0 L1330.9,664.5 L1332.4,664.6 L1333.9,663.9 L1335.4,664.3 L1336.9,663.9 L1338.4,664.3 L1339.9,663.9 L1341.4,664.2 L1342.9,664.5 L1344.4,664.6 L1345.9,664.2 L1347.4,664.1 L1348.9,663.9 L1350.4,664.6 L1351.9,664.1 L1353.4,664.3 L1354.9,664.2 L1356.4,664.5 L1357.9,664.4 L1359.4,664.2 L1360.9,663.8 L1362.4,647.3 L1363.9,600.6 L1365.4,600.3 L1366.9,600.2 L1368.4,600.8 L1369.9,600.9 L1371.4,600.2 L1372.9,600.2 L1374.4,600.6 L1375.9,600.9 L1377.4,600.2 L1378.9,603.8 L1380.4,649.7 L1381.9,664.1 L1383.4,663.9 L1384.9,664.5 L1386.4,664.0 L1387.9,664.5 L1389.4,664.3 L1390.9,663.9 L1392.4,663.9 L1393.9,664.5 L1395.4,664.5 L1396.9,664.3 L1398.4,664.2 L1399.9,664.3 L1401.4,664.5 L1402.9,664.4 L1404.4,664.0 L1405.9,663.9 L1407.4,664.6 L1408.9,664.2 L1410.4,664.0 L1410.4,685.6 L813.4,685.6 Z" fill="#8ab8ff" fill-opacity="0.1"/>
<path d="M813.4,664.6 L814.9,663.9 L816.4,664.4 L817.9,663.8 L819.4,664.4 L820.9,664.4 L822.4,664.2 L823.9,664.5 L825.4,664.3 L826.9,663.8 L828.4,663.9 L829.9,663.9 L831.4,664.1 L832.9,663.9 L834.4,663.8 L835.9,664.2 L837.4,664.0 L838.9,669.5 L840.4,677.2 L841.9,677.9 L843.4,677.7 L844.9,675.6 L846.4,667.7 L847.9,664.6 L849.4,663.8 L850.9,664.5 L852.4,664.2 L853.9,664.3 L855.4,664.4 L856.9,664.0 L858.4,663.8 L859.9,664.4 L861.4,664.1 L862.9,664.4 L864.4,664.2 L865.9,664.3 L867.4,664.5 L868.9,664.5 L870.4,664.5 L871.9,663.9 L873.4,664.2 L874.9,669.4 L876.4,677.0 L877.9,675.3 L879.4,667.5 L880.9,664.5 L882.4,664.5 L883.9,664.6 L885.4,664.3 L886.9,664.6 L888.4,664.4 L889.9,664.4 L891.4,664.2 L892.9,663.9 L894.4,664.0 L895.9,664.3 L897.4,664.3 L898.9,664.2 L900.4,664.3 L901.9,664.4 L903.4,664.6 L904.9,664.4 L906.4,663.8 L907.9,664.5 L909.4,664.2 L910.9,664.1 L912.4,663.9 L913.9,664.5 L915.4,664.4 L916.9,664.4 L918.4,664.3 L919.9,664.3 L921.4,663.8 L922.9,663.9 L924.4,663.9 L925.9,664.6 L927.4,664.6 L928.9,664.0 L930.4,663.9 L931.9,664.2 L933.4,671.8 L934.9,678.3 L936.4,678.0 L937.9,677.5 L939.4,677.6 L940.9,677.6 L942.4,677.5 L943.9,678.1 L945.4,678.2 L946.9,670.2 L948.4,649.9 L949.9,644.4 L951.4,644.2 L952.9,644.3 L954.4,644.4 L955.9,644.3 L957.4,644.6 L958.9,644.5 L960.4,644.9 L961.9,644.3 L963.4,644.8 L964.9,660.2 L966.4,664.1 L967.9,671.0 L969.4,678.2 L970.9,675.9 L972.4,667.4 L973.9,664.0 L975.4,664.5 L976.9,664.6 L978.4,664.2 L979.9,664.1 L981.4,664.3 L982.9,664.4 L984.4,664.1 L985.9,669.6 L987.4,677.5 L988.9,677.9 L990.4,677.5 L991.9,677.8 L993.4,677.6 L994.9,677.9 L996.4,678.1 L997.9,678.1 L999.4,677.5 L1000.9,677.7 L1002.4,678.1 L1003.9,676.1 L1005.4,667.5 L1006.9,664.1 L1008.4,664.3 L1009.9,664.4 L1011.4,664.1 L1012.9,663.8 L1014.4,664.4 L1015.9,664.6 L1017.4,664.4 L1018.9,664.3 L1020.4,671.7 L1021.9,678.2 L1023.4,677.6 L1024.9,677.7 L1026.4,677.9 L1027.9,678.2 L1029.4,677.5 L1030.9,678.1 L1032.4,677.6 L1033.9,678.1 L1035.4,678.1 L1036.9,677.7 L1038.4,673.1 L1039.9,664.4 L1041.4,664.2 L1042.9,664.5 L1044.4,664.4 L1045.9,664.3 L1047.4,664.1 L1048.9,663.8 L1050.4,664.5 L1051.9,664.3 L1053.4,666.6 L1054.9,674.2 L1056.4,678.2 L1057.9,678.3 L1059.4,678.3 L1060.9,678.0 L1062.4,677.6 L1063.9,677.6 L1065.4,677.7 L1066.9,677.5 L1068.4,677.5 L1069.9,678.0 L1071.4,678.2 L1072.9,677.5 L1074.4,672.8 L1075.9,665.2 L1077.4,664.1 L1078.9,664.3 L1080.4,664.3 L1081.9,664.4 L1083.4,664.5 L1084.9,664.6 L1086.4,664.4 L1087.9,664.3 L1089.4,663.8 L1090.9,669.5 L1092.4,677.0 L1093.9,678.2 L1095.4,678.0 L1096.9,677.6 L1098.4,677.6 L1099.9,678.0 L1101.4,678.3 L1102.9,677.9 L1104.4,678.0 L1105.9,677.5 L1107.4,678.2 L1108.9,670.4 L1110.4,663.9 L1111.9,664.6 L1113.4,664.3 L1114.9,663.9 L1116.4,664.0 L1117.9,664.6 L1119.4,664.6 L1120.9,664.6 L1122.4,663.9 L1123.9,664.4 L1125.4,664.0 L1126.9,663.9 L1128.4,664.4 L1129.9,664.4 L1131.4,666.0 L1132.9,674.5 L1134.4,678.1 L1135.9,677.7 L1137.4,678.1 L1138.9,678.1 L1140.4,678.3 L1141.9,670.0 L1143.4,663.9 L1144.9,664.1 L1146.4,663.8 L1147.9,664.6 L1149.4,664.4 L1150.9,664.2 L1152.4,663.8 L1153.9,663.8 L1155.4,664.3 L1156.9,664.4 L1158.4,664.3 L1159.9,664.2 L1161.4,663.8 L1162.9,664.5 L1164.4,664.0 L1165.9,664.0 L1167.4,663.9 L1168.9,668.9 L1170.4,677.3 L1171.9,678.0 L1173.4,678.1 L1174.9,678.0 L1176.4,677.7 L1177.9,670.6 L1179.4,664.5 L1180.9,664.0 L1182.4,664.4 L1183.9,664.6 L1185.4,664.6 L1186.9,664.2 L1188.4,664.4 L1189.9,663.8 L1191.4,663.9 L1192.9,663.8 L1194.4,664.4 L1195.9,664.6 L1197.4,664.6 L1198.9,664.2 L1200.4,664.0 L1201.9,664.3 L1203.4,666.6 L1204.9,674.7 L1206.4,677.8 L1207.9,677.8 L1209.4,677.7 L1210.9,669.9 L1212.4,664.1 L1213.9,664.5 L1215.4,663.9 L1216.9,664.4 L1218.4,664.2 L1219.9,664.3 L1221.4,664.0 L1222.9,664.5 L1224.4,664.4 L1225.9,664.4 L1227.4,664.5 L1228.9,663.9 L1230.4,664.1 L1231.9,664.4 L1233.4,664.3 L1234.9,663.8 L1236.4,664.2 L1237.9,664.4 L1239.4,663.9 L1240.9,669.0 L1242.4,676.9 L1243.9,678.2 L1245.4,677.9 L1246.9,670.0 L1248.4,663.9 L1249.9,663.9 L1251.4,664.6 L1252.9,664.4 L1254.4,664.5 L1255.9,664.5 L1257.4,663.8 L1258.9,664.1 L1260.4,663.8 L1261.9,664.3 L1263.4,663.9 L1264.9,664.3 L1266.4,664.4 L1267.9,664.0 L1269.4,663.8 L1270.9,664.5 L1272.4,664.1 L1273.9,664.1 L1275.4,664.5 L1276.9,664.3 L1278.4,664.5 L1279.9,664.5 L1281.4,672.1 L1282.9,670.2 L1284.4,664.1 L1285.9,664.5 L1287.4,664.6 L1288.9,664.4 L1290.4,664.1 L1291.9,664.5 L1293.4,664.4 L1294.9,664.5 L1296.4,664.0 L1297.9,664.2 L1299.4,664.6 L1300.9,664.6 L1302.4,664.3 L1303.9,664.2 L1305.4,664.1 L1306.9,664.6 L1308.4,664.5 L1309.9,664.0 L1311.4,664.3 L1312.9,664.4 L1314.4,664.4 L1315.9,663.8 L1317.4,664.4 L1318.9,664.2 L1320.4,664.3 L1321.9,664.3 L1323.4,663.9 L1324.9,663.8 L1326.4,664.3 L1327.9,664.5 L1329.4,664.0 L1330.9,664.5 L1332.4,664.6 L1333.9,663.9 L1335.4,664.3 L1336.9,663.9 L1338.4,664.3 L1339.9,663.9 L1341.4,664.2 L1342.9,664.5 L1344.4,664.6 L1345.9,664.2 L1347.4,664.1 L1348.9,663.9 L1350.4,664.6 L1351.9,664.1 L1353.4,664.3 L1354.9,664.2 L1356.4,664.5 L1357.9,664.4 L1359.4,664.2 L1360.9,663.8 L1362.4,647.3 L1363.9,600.6 L1365.4,600.3 L1366.9,600.2 L1368.4,600.8 L1369.9,600.9 L1371.4,600.2 L1372.9,600.2 L1374.4,600.6 L1375.9,600.9 L1377.4,600.2 L1378.9,603.8 L1380.4,649.7 L1381.9,664.1 L1383.4,663.9 L1384.9,664.5 L1386.4,664.0 L1387.9,664.5 L1389.4,664.3 L1390.9,663.9 L1392.4,663.9 L1393.9,664.5 L1395.4,664.5 L1396.9,664.3 L1398.4,664.2 L1399.9,664.3 L1401.4,664.5 L1402.9,664.4 L1404.4,664.0 L1405.9,663.9 L1407.4,664.6 L1408.9,664.2 L1410.4,664.0" fill="none" stroke="#8ab8ff" stroke-width="1.25" stroke-linejoin="round"/>
<path d="M813.4,675.8 L814.9,675.0 L816.4,675.7 L817.9,675.2 L819.4,675.3 L820.9,675.2 L822.4,675.5 L823.9,675.4 L825.4,675.2 L826.9,675.4 L828.4,675.2 L829.9,675.4 L831.4,675.4 L832.9,675.8 L834.4,675.2 L835.9,675.3 L837.4,675.6 L838.9,675.1 L840.4,675.9 L841.9,679.3 L843.4,680.8 L844.9,680.5 L846.4,679.2 L847.9,676.3 L849.4,675.8 L850.9,676.2 L852.4,675.8 L853.9,675.8 L855.4,676.2 L856.9,675.6 L858.4,676.2 L859.9,675.5 L861.4,675.5 L862.9,675.7 L864.4,676.2 L865.9,675.8 L867.4,675.9 L868.9,675.3 L870.4,676.9 L871.9,679.0 L873.4,680.0 L874.9,680.2 L876.4,680.1 L877.9,680.0 L879.4,676.1 L880.9,675.3 L882.4,674.9 L883.9,674.9 L885.4,675.7 L886.9,675.0 L888.4,674.9 L889.9,675.8 L891.4,675.5 L892.9,675.1 L894.4,675.7 L895.9,674.9 L897.4,675.6 L898.9,675.0 L900.4,675.7 L901.9,675.3 L903.4,674.9 L904.9,675.6 L906.4,675.6 L907.9,675.3 L909.4,675.5 L910.9,675.8 L912.4,675.7 L913.9,675.7 L915.4,674.9 L916.9,675.1 L918.4,674.9 L919.9,675.7 L921.4,675.0 L922.9,675.7 L924.4,675.3 L925.9,675.2 L927.4,675.5 L928.9,675.0 L930.4,675.3 L931.9,679.6 L933.4,676.2 L934.9,675.7 L936.4,674.8 L937.9,675.2 L939.4,675.4 L940.9,675.0 L942.4,675.6 L943.9,674.8 L945.4,675.3 L946.9,666.5 L948.4,630.9 L949.9,621.8 L951.4,622.1 L952.9,621.5 L954.4,622.2 L955.9,621.5 L957.4,622.0 L958.9,621.6 L960.4,621.3 L961.9,621.7 L963.4,621.6 L964.9,650.1 L966.4,681.0 L967.9,680.9 L969.4,680.8 L970.9,680.3 L972.4,680.5 L973.9,677.6 L975.4,674.9 L976.9,675.7 L978.4,675.6 L979.9,675.2 L981.4,675.8 L982.9,675.8 L984.4,675.5 L985.9,677.6 L987.4,680.4 L988.9,680.8 L990.4,680.4 L991.9,680.4 L993.4,680.8 L994.9,680.3 L996.4,680.5 L997.9,680.8 L999.4,680.0 L1000.9,680.7 L1002.4,680.8 L1003.9,680.9 L1005.4,680.3 L1006.9,680.1 L1008.4,680.2 L1009.9,680.6 L1011.4,680.7 L1012.9,681.0 L1014.4,680.3 L1015.9,680.4 L1017.4,680.6 L1018.9,680.3 L1020.4,680.5 L1021.9,680.0 L1023.4,680.2 L1024.9,680.7 L1026.4,680.1 L1027.9,680.9 L1029.4,680.4 L1030.9,680.6 L1032.4,680.7 L1033.9,680.9 L1035.4,680.2 L1036.9,681.0 L1038.4,680.4 L1039.9,680.0 L1041.4,680.8 L1042.9,680.8 L1044.4,680.4 L1045.9,680.5 L1047.4,680.3 L1048.9,680.1 L1050.4,680.8 L1051.9,680.7 L1053.4,680.7 L1054.9,680.9 L1056.4,680.1 L1057.9,680.2 L1059.4,680.2 L1060.9,681.0 L1062.4,680.1 L1063.9,680.2 L1065.4,680.5 L1066.9,680.2 L1068.4,680.5 L1069.9,680.7 L1071.4,680.9 L1072.9,680.7 L1074.4,680.9 L1075.9,680.6 L1077.4,680.2 L1078.9,677.4 L1080.4,675.0 L1081.9,675.1 L1083.4,675.6 L1084.9,675.3 L1086.4,675.4 L1087.9,675.0 L1089.4,675.3 L1090.9,677.4 L1092.4,680.1 L1093.9,680.0 L1095.4,680.8 L1096.9,680.1 L1098.4,681.0 L1099.9,680.7 L1101.4,680.7 L1102.9,680.2 L1104.4,680.0 L1105.9,680.2 L1107.4,680.6 L1108.9,680.1 L1110.4,680.6 L1111.9,680.7 L1113.4,680.0 L1114.9,680.3 L1116.4,680.3 L1117.9,680.3 L1119.4,680.0 L1120.9,680.5 L1122.4,680.1 L1123.9,680.3 L1125.4,680.1 L1126.9,680.5 L1128.4,680.2 L1129.9,680.4 L1131.4,680.7 L1132.9,680.8 L1134.4,680.3 L1135.9,680.9 L1137.4,680.0 L1138.9,680.8 L1140.4,681.0 L1141.9,680.9 L1143.4,680.0 L1144.9,680.6 L1146.4,680.8 L1147.9,681.0 L1149.4,680.9 L1150.9,680.3 L1152.4,680.3 L1153.9,680.3 L1155.4,680.2 L1156.9,680.9 L1158.4,680.4 L1159.9,680.6 L1161.4,680.1 L1162.9,680.1 L1164.4,680.1 L1165.9,680.9 L1167.4,680.1 L1168.9,680.0 L1170.4,680.0 L1171.9,680.9 L1173.4,680.8 L1174.9,680.9 L1176.4,680.9 L1177.9,680.1 L1179.4,680.1 L1180.9,680.3 L1182.4,680.1 L1183.9,680.3 L1185.4,680.7 L1186.9,680.9 L1188.4,680.9 L1189.9,680.2 L1191.4,680.8 L1192.9,680.7 L1194.4,680.5 L1195.9,681.0 L1197.4,680.7 L1198.9,680.7 L1200.4,680.2 L1201.9,680.6 L1203.4,680.7 L1204.9,680.0 L1206.4,680.5 L1207.9,680.1 L1209.4,680.3 L1210.9,680.9 L1212.4,680.6 L1213.9,680.5 L1215.4,680.2 L1216.9,680.6 L1218.4,680.3 L1219.9,680.4 L1221.4,680.8 L1222.9,680.1 L1224.4,680.9 L1225.9,680.1 L1227.4,680.8 L1228.9,681.0 L1230.4,680.8 L1231.9,680.2 L1233.4,680.0 L1234.9,681.0 L1236.4,680.5 L1237.9,680.5 L1239.4,680.2 L1240.9,680.8 L1242.4,680.5 L1243.9,680.6 L1245.4,680.1 L1246.9,677.8 L1248.4,674.9 L1249.9,675.6 L1251.4,675.6 L1252.9,675.1 L1254.4,675.3 L1255.9,675.7 L1257.4,675.2 L1258.9,675.8 L1260.4,675.0 L1261.9,675.1 L1263.4,675.0 L1264.9,675.2 L1266.4,675.5 L1267.9,675.4 L1269.4,675.4 L1270.9,674.9 L1272.4,675.8 L1273.9,674.9 L1275.4,675.8 L1276.9,675.6 L1278.4,675.6 L1279.9,674.9 L1281.4,675.3 L1282.9,675.5 L1284.4,674.9 L1285.9,675.6 L1287.4,675.4 L1288.9,675.3 L1290.4,675.1 L1291.9,675.1 L1293.4,675.2 L1294.9,675.5 L1296.4,675.5 L1297.9,675.7 L1299.4,675.0 L1300.9,677.0 L1302.4,680.0 L1303.9,680.8 L1305.4,680.5 L1306.9,680.2 L1308.4,680.4 L1309.9,680.9 L1311.4,680.5 L1312.9,680.1 L1314.4,680.7 L1315.9,680.8 L1317.4,680.7 L1318.9,677.4 L1320.4,675.0 L1321.9,675.7 L1323.4,675.7 L1324.9,675.6 L1326.4,675.5 L1327.9,675.3 L1329.4,675.7 L1330.9,675.5 L1332.4,675.7 L1333.9,674.8 L1335.4,675.1 L1336.9,675.7 L1338.4,674.9 L1339.9,675.7 L1341.4,675.5 L1342.9,674.8 L1344.4,675.0 L1345.9,675.1 L1347.4,675.4 L1348.9,675.6 L1350.4,675.2 L1351.9,675.7 L1353.4,675.6 L1354.9,675.4 L1356.4,675.8 L1357.9,675.4 L1359.4,675.0 L1360.9,675.1 L1362.4,618.4 L1363.9,525.1 L1365.4,525.3 L1366.9,525.6 L1368.4,525.2 L1369.9,525.4 L1371.4,525.0 L1372.9,524.9 L1374.4,525.4 L1375.9,525.2 L1377.4,525.0 L1378.9,531.6 L1380.4,624.9 L1381.9,680.2 L1383.4,678.2 L1384.9,675.3 L1386.4,675.1 L1387.9,675.0 L1389.4,675.1 L1390.9,675.2 L1392.4,675.4 L1393.9,675.5 L1395.4,675.2 L1396.9,675.7 L1398.4,675.4 L1399.9,675.0 L1401.4,675.1 L1402.9,675.2 L1404.4,675.6 L1405.9,675.4 L1407.4,675.4 L1408.9,675.2 L1410.4,675.4 L1410.4,685.6 L813.4,685.6 Z" fill="#eab839" fill-opacity="0.1"/>
<path d="M813.4,675.8 L814.9,675.0 L816.4,675.7 L817.9,675.2 L819.4,675.3 L820.9,675.2 L822.4,675.5 L823.9,675.4 L825.4,675.2 L826.9,675.4 L828.4,675.2 L829.9,675.4 L831.4,675.4 L832.9,675.8 L834.4,675.2 L835.9,675.3 L837.4,675.6 L838.9,675.1 L840.4,675.9 L841.9,679.3 L843.4,680.8 L844.9,680.5 L846.4,679.2 L847.9,676.3 L849.4,675.8 L850.9,676.2 L852.4,675.8 L853.9,675.8 L855.4,676.2 L856.9,675.6 L858.4,676.2 L859.9,675.5 L861.4,675.5 L862.9,675.7 L864.4,676.2 L865.9,675.8 L867.4,675.9 L868.9,675.3 L870.4,676.9 L871.9,679.0 L873.4,680.0 L874.9,680.2 L876.4,680.1 L877.9,680.0 L879.4,676.1 L880.9,675.3 L882.4,674.9 L883.9,674.9 L885.4,675.7 L886.9,675.0 L888.4,674.9 L889.9,675.8 L891.4,675.5 L892.9,675.1 L894.4,675.7 L895.9,674.9 L897.4,675.6 L898.9,675.0 L900.4,675.7 L901.9,675.3 L903.4,674.9 L904.9,675.6 L906.4,675.6 L907.9,675.3 L909.4,675.5 L910.9,675.8 L912.4,675.7 L913.9,675.7 L915.4,674.9 L916.9,675.1 L918.4,674.9 L919.9,675.7 L921.4,675.0 L922.9,675.7 L924.4,675.3 L925.9,675.2 L927.4,675.5 L928.9,675.0 L930.4,675.3 L931.9,679.6 L933.4,676.2 L934.9,675.7 L936.4,674.8 L937.9,675.2 L939.4,675.4 L940.9,675.0 L942.4,675.6 L943.9,674.8 L945.4,675.3 L946.9,666.5 L948.4,630.9 L949.9,621.8 L951.4,622.1 L952.9,621.5 L954.4,622.2 L955.9,621.5 L957.4,622.0 L958.9,621.6 L960.4,621.3 L961.9,621.7 L963.4,621.6 L964.9,650.1 L966.4,681.0 L967.9,680.9 L969.4,680.8 L970.9,680.3 L972.4,680.5 L973.9,677.6 L975.4,674.9 L976.9,675.7 L978.4,675.6 L979.9,675.2 L981.4,675.8 L982.9,675.8 L984.4,675.5 L985.9,677.6 L987.4,680.4 L988.9,680.8 L990.4,680.4 L991.9,680.4 L993.4,680.8 L994.9,680.3 L996.4,680.5 L997.9,680.8 L999.4,680.0 L1000.9,680.7 L1002.4,680.8 L1003.9,680.9 L1005.4,680.3 L1006.9,680.1 L1008.4,680.2 L1009.9,680.6 L1011.4,680.7 L1012.9,681.0 L1014.4,680.3 L1015.9,680.4 L1017.4,680.6 L1018.9,680.3 L1020.4,680.5 L1021.9,680.0 L1023.4,680.2 L1024.9,680.7 L1026.4,680.1 L1027.9,680.9 L1029.4,680.4 L1030.9,680.6 L1032.4,680.7 L1033.9,680.9 L1035.4,680.2 L1036.9,681.0 L1038.4,680.4 L1039.9,680.0 L1041.4,680.8 L1042.9,680.8 L1044.4,680.4 L1045.9,680.5 L1047.4,680.3 L1048.9,680.1 L1050.4,680.8 L1051.9,680.7 L1053.4,680.7 L1054.9,680.9 L1056.4,680.1 L1057.9,680.2 L1059.4,680.2 L1060.9,681.0 L1062.4,680.1 L1063.9,680.2 L1065.4,680.5 L1066.9,680.2 L1068.4,680.5 L1069.9,680.7 L1071.4,680.9 L1072.9,680.7 L1074.4,680.9 L1075.9,680.6 L1077.4,680.2 L1078.9,677.4 L1080.4,675.0 L1081.9,675.1 L1083.4,675.6 L1084.9,675.3 L1086.4,675.4 L1087.9,675.0 L1089.4,675.3 L1090.9,677.4 L1092.4,680.1 L1093.9,680.0 L1095.4,680.8 L1096.9,680.1 L1098.4,681.0 L1099.9,680.7 L1101.4,680.7 L1102.9,680.2 L1104.4,680.0 L1105.9,680.2 L1107.4,680.6 L1108.9,680.1 L1110.4,680.6 L1111.9,680.7 L1113.4,680.0 L1114.9,680.3 L1116.4,680.3 L1117.9,680.3 L1119.4,680.0 L1120.9,680.5 L1122.4,680.1 L1123.9,680.3 L1125.4,680.1 L1126.9,680.5 L1128.4,680.2 L1129.9,680.4 L1131.4,680.7 L1132.9,680.8 L1134.4,680.3 L1135.9,680.9 L1137.4,680.0 L1138.9,680.8 L1140.4,681.0 L1141.9,680.9 L1143.4,680.0 L1144.9,680.6 L1146.4,680.8 L1147.9,681.0 L1149.4,680.9 L1150.9,680.3 L1152.4,680.3 L1153.9,680.3 L1155.4,680.2 L1156.9,680.9 L1158.4,680.4 L1159.9,680.6 L1161.4,680.1 L1162.9,680.1 L1164.4,680.1 L1165.9,680.9 L1167.4,680.1 L1168.9,680.0 L1170.4,680.0 L1171.9,680.9 L1173.4,680.8 L1174.9,680.9 L1176.4,680.9 L1177.9,680.1 L1179.4,680.1 L1180.9,680.3 L1182.4,680.1 L1183.9,680.3 L1185.4,680.7 L1186.9,680.9 L1188.4,680.9 L1189.9,680.2 L1191.4,680.8 L1192.9,680.7 L1194.4,680.5 L1195.9,681.0 L1197.4,680.7 L1198.9,680.7 L1200.4,680.2 L1201.9,680.6 L1203.4,680.7 L1204.9,680.0 L1206.4,680.5 L1207.9,680.1 L1209.4,680.3 L1210.9,680.9 L1212.4,680.6 L1213.9,680.5 L1215.4,680.2 L1216.9,680.6 L1218.4,680.3 L1219.9,680.4 L1221.4,680.8 L1222.9,680.1 L1224.4,680.9 L1225.9,680.1 L1227.4,680.8 L1228.9,681.0 L1230.4,680.8 L1231.9,680.2 L1233.4,680.0 L1234.9,681.0 L1236.4,680.5 L1237.9,680.5 L1239.4,680.2 L1240.9,680.8 L1242.4,680.5 L1243.9,680.6 L1245.4,680.1 L1246.9,677.8 L1248.4,674.9 L1249.9,675.6 L1251.4,675.6 L1252.9,675.1 L1254.4,675.3 L1255.9,675.7 L1257.4,675.2 L1258.9,675.8 L1260.4,675.0 L1261.9,675.1 L1263.4,675.0 L1264.9,675.2 L1266.4,675.5 L1267.9,675.4 L1269.4,675.4 L1270.9,674.9 L1272.4,675.8 L1273.9,674.9 L1275.4,675.8 L1276.9,675.6 L1278.4,675.6 L1279.9,674.9 L1281.4,675.3 L1282.9,675.5 L1284.4,674.9 L1285.9,675.6 L1287.4,675.4 L1288.9,675.3 L1290.4,675.1 L1291.9,675.1 L1293.4,675.2 L1294.9,675.5 L1296.4,675.5 L1297.9,675.7 L1299.4,675.0 L1300.9,677.0 L1302.4,680.0 L1303.9,680.8 L1305.4,680.5 L1306.9,680.2 L1308.4,680.4 L1309.9,680.9 L1311.4,680.5 L1312.9,680.1 L1314.4,680.7 L1315.9,680.8 L1317.4,680.7 L1318.9,677.4 L1320.4,675.0 L1321.9,675.7 L1323.4,675.7 L1324.9,675.6 L1326.4,675.5 L1327.9,675.3 L1329.4,675.7 L1330.9,675.5 L1332.4,675.7 L1333.9,674.8 L1335.4,675.1 L1336.9,675.7 L1338.4,674.9 L1339.9,675.7 L1341.4,675.5 L1342.9,674.8 L1344.4,675.0 L1345.9,675.1 L1347.4,675.4 L1348.9,675.6 L1350.4,675.2 L1351.9,675.7 L1353.4,675.6 L1354.9,675.4 L1356.4,675.8 L1357.9,675.4 L1359.4,675.0 L1360.9,675.1 L1362.4,618.4 L1363.9,525.1 L1365.4,525.3 L1366.9,525.6 L1368.4,525.2 L1369.9,525.4 L1371.4,525.0 L1372.9,524.9 L1374.4,525.4 L1375.9,525.2 L1377.4,525.0 L1378.9,531.6 L1380.4,624.9 L1381.9,680.2 L1383.4,678.2 L1384.9,675.3 L1386.4,675.1 L1387.9,675.0 L1389.4,675.1 L1390.9,675.2 L1392.4,675.4 L1393.9,675.5 L1395.4,675.2 L1396.9,675.7 L1398.4,675.4 L1399.9,675.0 L1401.4,675.1 L1402.9,675.2 L1404.4,675.6 L1405.9,675.4 L1407.4,675.4 L1408.9,675.2 L1410.4,675.4" fill="none" stroke="#eab839" stroke-width="1.25" stroke-linejoin="round"/>
<path d="M813.4,675.2 L814.9,674.9 L816.4,675.7 L817.9,675.2 L819.4,675.0 L820.9,682.1 L822.4,680.9 L823.9,680.4 L825.4,681.4 L826.9,680.9 L828.4,681.2 L829.9,680.6 L831.4,680.4 L832.9,680.9 L834.4,681.3 L835.9,680.8 L837.4,680.9 L838.9,681.6 L840.4,683.3 L841.9,683.3 L843.4,683.1 L844.9,683.4 L846.4,683.6 L847.9,682.6 L849.4,681.8 L850.9,680.7 L852.4,681.0 L853.9,680.6 L855.4,681.3 L856.9,680.4 L858.4,681.0 L859.9,681.3 L861.4,681.1 L862.9,681.0 L864.4,681.4 L865.9,681.0 L867.4,681.0 L868.9,680.7 L870.4,681.0 L871.9,681.1 L873.4,681.2 L874.9,681.6 L876.4,682.9 L877.9,683.4 L879.4,683.7 L880.9,683.2 L882.4,683.6 L883.9,683.8 L885.4,683.8 L886.9,683.2 L888.4,682.2 L889.9,680.9 L891.4,680.9 L892.9,680.8 L894.4,681.2 L895.9,680.4 L897.4,681.0 L898.9,680.8 L900.4,680.6 L901.9,680.6 L903.4,680.9 L904.9,681.1 L906.4,680.8 L907.9,681.3 L909.4,680.6 L910.9,681.0 L912.4,680.5 L913.9,681.1 L915.4,681.0 L916.9,681.1 L918.4,681.0 L919.9,681.2 L921.4,681.4 L922.9,680.7 L924.4,681.1 L925.9,681.2 L927.4,681.1 L928.9,680.9 L930.4,681.4 L931.9,682.7 L933.4,683.3 L934.9,683.6 L936.4,683.0 L937.9,683.1 L939.4,683.9 L940.9,683.1 L942.4,683.0 L943.9,683.2 L945.4,683.8 L946.9,683.1 L948.4,683.3 L949.9,684.0 L951.4,684.0 L952.9,683.0 L954.4,683.3 L955.9,683.7 L957.4,683.9 L958.9,683.8 L960.4,683.7 L961.9,683.2 L963.4,683.6 L964.9,683.8 L966.4,683.0 L967.9,683.2 L969.4,683.8 L970.9,683.1 L972.4,683.4 L973.9,683.2 L975.4,683.3 L976.9,683.1 L978.4,683.2 L979.9,683.1 L981.4,683.8 L982.9,683.3 L984.4,683.4 L985.9,683.2 L987.4,683.5 L988.9,683.1 L990.4,683.4 L991.9,683.7 L993.4,683.7 L994.9,683.8 L996.4,683.5 L997.9,683.4 L999.4,681.2 L1000.9,680.8 L1002.4,680.5 L1003.9,680.5 L1005.4,680.4 L1006.9,680.1 L1008.4,681.0 L1009.9,680.1 L1011.4,680.5 L1012.9,680.4 L1014.4,680.3 L1015.9,680.1 L1017.4,680.6 L1018.9,680.6 L1020.4,680.5 L1021.9,683.2 L1023.4,683.3 L1024.9,683.3 L1026.4,683.9 L1027.9,683.3 L1029.4,683.3 L1030.9,683.0 L1032.4,683.6 L1033.9,683.0 L1035.4,683.5 L1036.9,683.5 L1038.4,683.1 L1039.9,683.9 L1041.4,683.2 L1042.9,683.3 L1044.4,683.6 L1045.9,683.1 L1047.4,683.6 L1048.9,683.5 L1050.4,683.4 L1051.9,683.2 L1053.4,683.8 L1054.9,683.5 L1056.4,683.5 L1057.9,683.4 L1059.4,683.1 L1060.9,683.7 L1062.4,683.1 L1063.9,683.6 L1065.4,683.5 L1066.9,683.7 L1068.4,683.5 L1069.9,683.0 L1071.4,683.3 L1072.9,683.2 L1074.4,683.6 L1075.9,683.6 L1077.4,683.7 L1078.9,683.4 L1080.4,683.3 L1081.9,683.2 L1083.4,683.9 L1084.9,683.2 L1086.4,683.1 L1087.9,683.4 L1089.4,683.9 L1090.9,683.7 L1092.4,684.0 L1093.9,683.8 L1095.4,683.0 L1096.9,683.3 L1098.4,683.3 L1099.9,683.2 L1101.4,683.0 L1102.9,683.3 L1104.4,683.3 L1105.9,683.3 L1107.4,683.3 L1108.9,683.4 L1110.4,683.3 L1111.9,683.8 L1113.4,683.3 L1114.9,683.5 L1116.4,683.2 L1117.9,683.9 L1119.4,683.8 L1120.9,683.9 L1122.4,683.2 L1123.9,683.0 L1125.4,683.3 L1126.9,683.6 L1128.4,683.1 L1129.9,683.2 L1131.4,683.4 L1132.9,683.7 L1134.4,683.7 L1135.9,683.5 L1137.4,683.6 L1138.9,683.5 L1140.4,683.3 L1141.9,683.0 L1143.4,683.9 L1144.9,683.4 L1146.4,683.9 L1147.9,683.4 L1149.4,680.9 L1150.9,680.4 L1152.4,680.0 L1153.9,680.5 L1155.4,681.0 L1156.9,680.6 L1158.4,680.4 L1159.9,680.0 L1161.4,680.0 L1162.9,680.5 L1164.4,680.6 L1165.9,680.9 L1167.4,680.3 L1168.9,680.8 L1170.4,680.8 L1171.9,681.0 L1173.4,681.0 L1174.9,680.3 L1176.4,680.9 L1177.9,680.0 L1179.4,680.9 L1180.9,680.1 L1182.4,680.8 L1183.9,681.0 L1185.4,680.2 L1186.9,680.7 L1188.4,680.2 L1189.9,680.8 L1191.4,680.9 L1192.9,680.2 L1194.4,680.2 L1195.9,680.1 L1197.4,680.2 L1198.9,680.9 L1200.4,680.8 L1201.9,682.5 L1203.4,683.5 L1204.9,683.0 L1206.4,683.7 L1207.9,683.0 L1209.4,683.2 L1210.9,684.0 L1212.4,684.0 L1213.9,683.3 L1215.4,683.1 L1216.9,683.9 L1218.4,683.7 L1219.9,683.2 L1221.4,683.8 L1222.9,683.1 L1224.4,683.5 L1225.9,683.9 L1227.4,683.6 L1228.9,683.4 L1230.4,683.5 L1231.9,683.3 L1233.4,683.8 L1234.9,683.2 L1236.4,683.6 L1237.9,683.3 L1239.4,683.3 L1240.9,683.5 L1242.4,683.6 L1243.9,683.2 L1245.4,683.0 L1246.9,683.2 L1248.4,682.3 L1249.9,680.8 L1251.4,680.9 L1252.9,680.0 L1254.4,680.3 L1255.9,680.1 L1257.4,680.6 L1258.9,680.4 L1260.4,680.0 L1261.9,680.1 L1263.4,680.4 L1264.9,680.7 L1266.4,680.5 L1267.9,680.1 L1269.4,680.6 L1270.9,680.3 L1272.4,680.4 L1273.9,680.1 L1275.4,680.2 L1276.9,680.7 L1278.4,681.0 L1279.9,680.7 L1281.4,680.5 L1282.9,680.4 L1284.4,680.1 L1285.9,680.1 L1287.4,680.9 L1288.9,680.1 L1290.4,680.6 L1291.9,682.4 L1293.4,683.4 L1294.9,683.7 L1296.4,683.1 L1297.9,683.1 L1299.4,683.3 L1300.9,683.0 L1302.4,683.6 L1303.9,683.9 L1305.4,683.4 L1306.9,683.2 L1308.4,683.8 L1309.9,683.2 L1311.4,683.0 L1312.9,683.7 L1314.4,683.4 L1315.9,683.3 L1317.4,683.5 L1318.9,683.8 L1320.4,683.7 L1321.9,683.2 L1323.4,683.2 L1324.9,683.5 L1326.4,683.9 L1327.9,683.1 L1329.4,683.2 L1330.9,683.7 L1332.4,683.4 L1333.9,683.1 L1335.4,683.1 L1336.9,683.4 L1338.4,683.5 L1339.9,683.4 L1341.4,683.8 L1342.9,683.8 L1344.4,683.8 L1345.9,683.3 L1347.4,683.6 L1348.9,683.4 L1350.4,683.6 L1351.9,683.4 L1353.4,683.8 L1354.9,683.9 L1356.4,683.0 L1357.9,683.6 L1359.4,683.9 L1360.9,683.3 L1362.4,683.2 L1363.9,683.8 L1365.4,683.4 L1366.9,683.6 L1368.4,683.4 L1369.9,684.0 L1371.4,683.9 L1372.9,683.0 L1374.4,683.1 L1375.9,683.5 L1377.4,683.4 L1378.9,683.7 L1380.4,683.2 L1381.9,683.5 L1383.4,683.0 L1384.9,683.2 L1386.4,683.1 L1387.9,683.0 L1389.4,683.7 L1390.9,683.9 L1392.4,683.8 L1393.9,683.8 L1395.4,683.9 L1396.9,683.9 L1398.4,683.4 L1399.9,683.1 L1401.4,683.5 L1402.9,683.0 L1404.4,683.0 L1405.9,683.9 L1407.4,683.4 L1408.9,683.6 L1410.4,683.9 L1410.4,685.6 L813.4,685.6 Z" fill="#b7dbab" fill-opacity="0.05"/>
<path d="M813.4,675.2 L814.9,674.9 L816.4,675.7 L817.9,675.2 L819.4,675.0 L820.9,682.1 L822.4,680.9 L823.9,680.4 L825.4,681.4 L826.9,680.9 L828.4,681.2 L829.9,680.6 L831.4,680.4 L832.9,680.9 L834.4,681.3 L835.9,680.8 L837.4,680.9 L838.9,681.6 L840.4,683.3 L841.9,683.3 L843.4,683.1 L844.9,683.4 L846.4,683.6 L847.9,682.6 L849.4,681.8 L850.9,680.7 L852.4,681.0 L853.9,680.6 L855.4,681.3 L856.9,680.4 L858.4,681.0 L859.9,681.3 L861.4,681.1 L862.9,681.0 L864.4,681.4 L865.9,681.0 L867.4,681.0 L868.9,680.7 L870.4,681.0 L871.9,681.1 L873.4,681.2 L874.9,681.6 L876.4,682.9 L877.9,683.4 L879.4,683.7 L880.9,683.2 L882.4,683.6 L883.9,683.8 L885.4,683.8 L886.9,683.2 L888.4,682.2 L889.9,680.9 L891.4,680.9 L892.9,680.8 L894.4,681.2 L895.9,680.4 L897.4,681.0 L898.9,680.8 L900.4,680.6 L901.9,680.6 L903.4,680.9 L904.9,681.1 L906.4,680.8 L907.9,681.3 L909.4,680.6 L910.9,681.0 L912.4,680.5 L913.9,681.1 L915.4,681.0 L916.9,681.1 L918.4,681.0 L919.9,681.2 L921.4,681.4 L922.9,680.7 L924.4,681.1 L925.9,681.2 L927.4,681.1 L928.9,680.9 L930.4,681.4 L931.9,682.7 L933.4,683.3 L934.9,683.6 L936.4,683.0 L937.9,683.1 L939.4,683.9 L940.9,683.1 L942.4,683.0 L943.9,683.2 L945.4,683.8 L946.9,683.1 L948.4,683.3 L949.9,684.0 L951.4,684.0 L952.9,683.0 L954.4,683.3 L955.9,683.7 L957.4,683.9 L958.9,683.8 L960.4,683.7 L961.9,683.2 L963.4,683.6 L964.9,683.8 L966.4,683.0 L967.9,683.2 L969.4,683.8 L970.9,683.1 L972.4,683.4 L973.9,683.2 L975.4,683.3 L976.9,683.1 L978.4,683.2 L979.9,683.1 L981.4,683.8 L982.9,683.3 L984.4,683.4 L985.9,683.2 L987.4,683.5 L988.9,683.1 L990.4,683.4 L991.9,683.7 L993.4,683.7 L994.9,683.8 L996.4,683.5 L997.9,683.4 L999.4,681.2 L1000.9,680.8 L1002.4,680.5 L1003.9,680.5 L1005.4,680.4 L1006.9,680.1 L1008.4,681.0 L1009.9,680.1 L1011.4,680.5 L1012.9,680.4 L1014.4,680.3 L1015.9,680.1 L1017.4,680.6 L1018.9,680.6 L1020.4,680.5 L1021.9,683.2 L1023.4,683.3 L1024.9,683.3 L1026.4,683.9 L1027.9,683.3 L1029.4,683.3 L1030.9,683.0 L1032.4,683.6 L1033.9,683.0 L1035.4,683.5 L1036.9,683.5 L1038.4,683.1 L1039.9,683.9 L1041.4,683.2 L1042.9,683.3 L1044.4,683.6 L1045.9,683.1 L1047.4,683.6 L1048.9,683.5 L1050.4,683.4 L1051.9,683.2 L1053.4,683.8 L1054.9,683.5 L1056.4,683.5 L1057.9,683.4 L1059.4,683.1 L1060.9,683.7 L1062.4,683.1 L1063.9,683.6 L1065.4,683.5 L1066.9,683.7 L1068.4,683.5 L1069.9,683.0 L1071.4,683.3 L1072.9,683.2 L1074.4,683.6 L1075.9,683.6 L1077.4,683.7 L1078.9,683.4 L1080.4,683.3 L1081.9,683.2 L1083.4,683.9 L1084.9,683.2 L1086.4,683.1 L1087.9,683.4 L1089.4,683.9 L1090.9,683.7 L1092.4,684.0 L1093.9,683.8 L1095.4,683.0 L1096.9,683.3 L1098.4,683.3 L1099.9,683.2 L1101.4,683.0 L1102.9,683.3 L1104.4,683.3 L1105.9,683.3 L1107.4,683.3 L1108.9,683.4 L1110.4,683.3 L1111.9,683.8 L1113.4,683.3 L1114.9,683.5 L1116.4,683.2 L1117.9,683.9 L1119.4,683.8 L1120.9,683.9 L1122.4,683.2 L1123.9,683.0 L1125.4,683.3 L1126.9,683.6 L1128.4,683.1 L1129.9,683.2 L1131.4,683.4 L1132.9,683.7 L1134.4,683.7 L1135.9,683.5 L1137.4,683.6 L1138.9,683.5 L1140.4,683.3 L1141.9,683.0 L1143.4,683.9 L1144.9,683.4 L1146.4,683.9 L1147.9,683.4 L1149.4,680.9 L1150.9,680.4 L1152.4,680.0 L1153.9,680.5 L1155.4,681.0 L1156.9,680.6 L1158.4,680.4 L1159.9,680.0 L1161.4,680.0 L1162.9,680.5 L1164.4,680.6 L1165.9,680.9 L1167.4,680.3 L1168.9,680.8 L1170.4,680.8 L1171.9,681.0 L1173.4,681.0 L1174.9,680.3 L1176.4,680.9 L1177.9,680.0 L1179.4,680.9 L1180.9,680.1 L1182.4,680.8 L1183.9,681.0 L1185.4,680.2 L1186.9,680.7 L1188.4,680.2 L1189.9,680.8 L1191.4,680.9 L1192.9,680.2 L1194.4,680.2 L1195.9,680.1 L1197.4,680.2 L1198.9,680.9 L1200.4,680.8 L1201.9,682.5 L1203.4,683.5 L1204.9,683.0 L1206.4,683.7 L1207.9,683.0 L1209.4,683.2 L1210.9,684.0 L1212.4,684.0 L1213.9,683.3 L1215.4,683.1 L1216.9,683.9 L1218.4,683.7 L1219.9,683.2 L1221.4,683.8 L1222.9,683.1 L1224.4,683.5 L1225.9,683.9 L1227.4,683.6 L1228.9,683.4 L1230.4,683.5 L1231.9,683.3 L1233.4,683.8 L1234.9,683.2 L1236.4,683.6 L1237.9,683.3 L1239.4,683.3 L1240.9,683.5 L1242.4,683.6 L1243.9,683.2 L1245.4,683.0 L1246.9,683.2 L1248.4,682.3 L1249.9,680.8 L1251.4,680.9 L1252.9,680.0 L1254.4,680.3 L1255.9,680.1 L1257.4,680.6 L1258.9,680.4 L1260.4,680.0 L1261.9,680.1 L1263.4,680.4 L1264.9,680.7 L1266.4,680.5 L1267.9,680.1 L1269.4,680.6 L1270.9,680.3 L1272.4,680.4 L1273.9,680.1 L1275.4,680.2 L1276.9,680.7 L1278.4,681.0 L1279.9,680.7 L1281.4,680.5 L1282.9,680.4 L1284.4,680.1 L1285.9,680.1 L1287.4,680.9 L1288.9,680.1 L1290.4,680.6 L1291.9,682.4 L1293.4,683.4 L1294.9,683.7 L1296.4,683.1 L1297.9,683.1 L1299.4,683.3 L1300.9,683.0 L1302.4,683.6 L1303.9,683.9 L1305.4,683.4 L1306.9,683.2 L1308.4,683.8 L1309.9,683.2 L1311.4,683.0 L1312.9,683.7 L1314.4,683.4 L1315.9,683.3 L1317.4,683.5 L1318.9,683.8 L1320.4,683.7 L1321.9,683.2 L1323.4,683.2 L1324.9,683.5 L1326.4,683.9 L1327.9,683.1 L1329.4,683.2 L1330.9,683.7 L1332.4,683.4 L1333.9,683.1 L1335.4,683.1 L1336.9,683.4 L1338.4,683.5 L1339.9,683.4 L1341.4,683.8 L1342.9,683.8 L1344.4,683.8 L1345.9,683.3 L1347.4,683.6 L1348.9,683.4 L1350.4,683.6 L1351.9,683.4 L1353.4,683.8 L1354.9,683.9 L1356.4,683.0 L1357.9,683.6 L1359.4,683.9 L1360.9,683.3 L1362.4,683.2 L1363.9,683.8 L1365.4,683.4 L1366.9,683.6 L1368.4,683.4 L1369.9,684.0 L1371.4,683.9 L1372.9,683.0 L1374.4,683.1 L1375.9,683.5 L1377.4,683.4 L1378.9,683.7 L1380.4,683.2 L1381.9,683.5 L1383.4,683.0 L1384.9,683.2 L1386.4,683.1 L1387.9,683.0 L1389.4,683.7 L1390.9,683.9 L1392.4,683.8 L1393.9,683.8 L1395.4,683.9 L1396.9,683.9 L1398.4,683.4 L1399.9,683.1 L1401.4,683.5 L1402.9,683.0 L1404.4,683.0 L1405.9,683.9 L1407.4,683.4 L1408.9,683.6 L1410.4,683.9" fill="none" stroke="#b7dbab" stroke-width="1.25" stroke-linejoin="round"/>
<path d="M813.4,684.1 L814.9,685.1 L816.4,684.7 L817.9,684.6 L819.4,684.1 L820.9,684.5 L822.4,684.9 L823.9,684.8 L825.4,685.2 L826.9,684.1 L828.4,684.1 L829.9,685.1 L831.4,685.4 L832.9,685.1 L834.4,684.9 L835.9,684.2 L837.4,684.2 L838.9,684.3 L840.4,685.4 L841.9,684.4 L843.4,684.5 L844.9,684.5 L846.4,684.1 L847.9,685.4 L849.4,685.2 L850.9,684.4 L852.4,684.1 L853.9,678.8 L855.4,674.8 L856.9,674.4 L858.4,674.1 L859.9,675.0 L861.4,674.7 L862.9,674.8 L864.4,675.0 L865.9,674.5 L867.4,674.9 L868.9,674.8 L870.4,676.6 L871.9,682.0 L873.4,685.4 L874.9,684.4 L876.4,685.2 L877.9,685.4 L879.4,684.2 L880.9,685.1 L882.4,684.2 L883.9,684.2 L885.4,684.2 L886.9,685.2 L888.4,684.8 L889.9,685.3 L891.4,684.2 L892.9,684.3 L894.4,684.6 L895.9,684.8 L897.4,685.0 L898.9,680.5 L900.4,677.9 L901.9,677.7 L903.4,682.2 L904.9,685.1 L906.4,685.4 L907.9,684.5 L909.4,684.7 L910.9,685.2 L912.4,684.2 L913.9,685.1 L915.4,684.9 L916.9,685.2 L918.4,685.1 L919.9,684.3 L921.4,685.0 L922.9,685.2 L924.4,684.8 L925.9,685.0 L927.4,684.2 L928.9,685.3 L930.4,684.1 L931.9,685.4 L933.4,684.2 L934.9,684.5 L936.4,685.1 L937.9,684.8 L939.4,685.0 L940.9,685.1 L942.4,685.2 L943.9,684.9 L945.4,684.1 L946.9,684.1 L948.4,684.2 L949.9,683.2 L951.4,675.3 L952.9,671.4 L954.4,672.5 L955.9,671.6 L957.4,672.2 L958.9,671.3 L960.4,672.6 L961.9,671.5 L963.4,672.1 L964.9,672.4 L966.4,674.6 L967.9,681.2 L969.4,684.7 L970.9,685.2 L972.4,684.8 L973.9,679.9 L975.4,677.4 L976.9,676.9 L978.4,677.5 L979.9,677.5 L981.4,676.7 L982.9,676.8 L984.4,677.5 L985.9,677.6 L987.4,677.6 L988.9,676.9 L990.4,678.3 L991.9,683.2 L993.4,685.1 L994.9,684.6 L996.4,684.5 L997.9,684.3 L999.4,684.6 L1000.9,685.2 L1002.4,685.3 L1003.9,684.4 L1005.4,684.9 L1006.9,684.4 L1008.4,682.3 L1009.9,676.1 L1011.4,676.4 L1012.9,675.7 L1014.4,675.7 L1015.9,676.2 L1017.4,676.9 L1018.9,675.6 L1020.4,677.6 L1021.9,682.2 L1023.4,685.1 L1024.9,685.2 L1026.4,684.3 L1027.9,684.9 L1029.4,685.2 L1030.9,684.9 L1032.4,684.6 L1033.9,685.4 L1035.4,684.7 L1036.9,684.8 L1038.4,684.7 L1039.9,685.3 L1041.4,684.5 L1042.9,684.3 L1044.4,684.2 L1045.9,685.0 L1047.4,684.5 L1048.9,684.9 L1050.4,684.4 L1051.9,685.3 L1053.4,684.2 L1054.9,684.1 L1056.4,684.8 L1057.9,684.7 L1059.4,684.7 L1060.9,678.0 L1062.4,673.4 L1063.9,672.1 L1065.4,673.1 L1066.9,673.2 L1068.4,673.3 L1069.9,673.1 L1071.4,672.3 L1072.9,673.4 L1074.4,673.3 L1075.9,672.5 L1077.4,673.2 L1078.9,673.4 L1080.4,674.5 L1081.9,681.8 L1083.4,684.7 L1084.9,684.5 L1086.4,685.3 L1087.9,684.2 L1089.4,684.4 L1090.9,685.4 L1092.4,685.3 L1093.9,684.8 L1095.4,684.7 L1096.9,685.0 L1098.4,685.3 L1099.9,684.9 L1101.4,685.2 L1102.9,684.6 L1104.4,684.3 L1105.9,685.2 L1107.4,684.6 L1108.9,678.7 L1110.4,674.9 L1111.9,674.0 L1113.4,673.9 L1114.9,674.6 L1116.4,674.6 L1117.9,674.0 L1119.4,674.4 L1120.9,674.6 L1122.4,673.9 L1123.9,674.1 L1125.4,676.3 L1126.9,682.6 L1128.4,685.0 L1129.9,684.8 L1131.4,684.1 L1132.9,684.3 L1134.4,684.2 L1135.9,684.3 L1137.4,684.3 L1138.9,685.4 L1140.4,684.7 L1141.9,684.1 L1143.4,684.1 L1144.9,685.1 L1146.4,684.9 L1147.9,684.6 L1149.4,684.9 L1150.9,684.7 L1152.4,685.3 L1153.9,684.8 L1155.4,684.7 L1156.9,685.4 L1158.4,680.6 L1159.9,671.8 L1161.4,671.5 L1162.9,671.3 L1164.4,671.7 L1165.9,671.5 L1167.4,671.4 L1168.9,671.4 L1170.4,672.5 L1171.9,671.7 L1173.4,672.2 L1174.9,671.7 L1176.4,679.4 L1177.9,684.7 L1179.4,684.2 L1180.9,684.6 L1182.4,685.1 L1183.9,684.7 L1185.4,684.8 L1186.9,684.1 L1188.4,681.3 L1189.9,675.2 L1191.4,674.3 L1192.9,675.0 L1194.4,674.3 L1195.9,673.9 L1197.4,674.5 L1198.9,674.8 L1200.4,674.5 L1201.9,674.4 L1203.4,675.0 L1204.9,675.0 L1206.4,680.7 L1207.9,685.0 L1209.4,684.9 L1210.9,685.0 L1212.4,685.1 L1213.9,685.3 L1215.4,684.7 L1216.9,684.3 L1218.4,684.6 L1219.9,684.6 L1221.4,684.5 L1222.9,685.2 L1224.4,684.5 L1225.9,684.8 L1227.4,684.7 L1228.9,684.6 L1230.4,684.8 L1231.9,685.0 L1233.4,685.1 L1234.9,685.1 L1236.4,684.7 L1237.9,683.5 L1239.4,678.1 L1240.9,676.9 L1242.4,676.4 L1243.9,675.7 L1245.4,677.9 L1246.9,682.6 L1248.4,684.8 L1249.9,685.0 L1251.4,684.1 L1252.9,685.0 L1254.4,684.4 L1255.9,685.2 L1257.4,685.3 L1258.9,679.0 L1260.4,675.4 L1261.9,675.9 L1263.4,675.5 L1264.9,675.4 L1266.4,675.0 L1267.9,675.9 L1269.4,675.7 L1270.9,678.1 L1272.4,684.0 L1273.9,685.2 L1275.4,685.0 L1276.9,684.9 L1278.4,684.5 L1279.9,684.6 L1281.4,684.3 L1282.9,684.3 L1284.4,684.7 L1285.9,684.4 L1287.4,684.4 L1288.9,684.4 L1290.4,684.8 L1291.9,684.4 L1293.4,684.5 L1294.9,684.2 L1296.4,685.3 L1297.9,683.0 L1299.4,679.6 L1300.9,676.7 L1302.4,678.2 L1303.9,682.9 L1305.4,684.1 L1306.9,684.6 L1308.4,684.9 L1309.9,684.4 L1311.4,684.2 L1312.9,684.6 L1314.4,684.9 L1315.9,684.8 L1317.4,684.8 L1318.9,684.4 L1320.4,685.0 L1321.9,684.9 L1323.4,684.7 L1324.9,684.9 L1326.4,685.0 L1327.9,684.4 L1329.4,684.3 L1330.9,684.7 L1332.4,684.8 L1333.9,685.2 L1335.4,685.0 L1336.9,685.2 L1338.4,684.6 L1339.9,684.6 L1341.4,685.3 L1342.9,684.2 L1344.4,685.0 L1345.9,684.3 L1347.4,684.3 L1348.9,684.1 L1350.4,685.1 L1351.9,684.8 L1353.4,684.2 L1354.9,685.4 L1356.4,685.4 L1357.9,682.5 L1359.4,674.3 L1360.9,670.5 L1362.4,670.7 L1363.9,671.0 L1365.4,670.4 L1366.9,671.0 L1368.4,671.0 L1369.9,670.8 L1371.4,671.2 L1372.9,671.3 L1374.4,670.9 L1375.9,671.3 L1377.4,670.4 L1378.9,670.8 L1380.4,673.2 L1381.9,682.0 L1383.4,684.9 L1384.9,684.9 L1386.4,684.7 L1387.9,684.6 L1389.4,684.2 L1390.9,684.1 L1392.4,684.8 L1393.9,678.6 L1395.4,673.5 L1396.9,672.9 L1398.4,673.8 L1399.9,673.6 L1401.4,673.2 L1402.9,674.1 L1404.4,673.9 L1405.9,673.0 L1407.4,673.2 L1408.9,673.6 L1410.4,674.2 L1410.4,685.6 L813.4,685.6 Z" fill="#f9a8d8" fill-opacity="0.08"/>
<path d="M813.4,684.1 L814.9,685.1 L816.4,684.7 L817.9,684.6 L819.4,684.1 L820.9,684.5 L822.4,684.9 L823.9,684.8 L825.4,685.2 L826.9,684.1 L828.4,684.1 L829.9,685.1 L831.4,685.4 L832.9,685.1 L834.4,684.9 L835.9,684.2 L837.4,684.2 L838.9,684.3 L840.4,685.4 L841.9,684.4 L843.4,684.5 L844.9,684.5 L846.4,684.1 L847.9,685.4 L849.4,685.2 L850.9,684.4 L852.4,684.1 L853.9,678.8 L855.4,674.8 L856.9,674.4 L858.4,674.1 L859.9,675.0 L861.4,674.7 L862.9,674.8 L864.4,675.0 L865.9,674.5 L867.4,674.9 L868.9,674.8 L870.4,676.6 L871.9,682.0 L873.4,685.4 L874.9,684.4 L876.4,685.2 L877.9,685.4 L879.4,684.2 L880.9,685.1 L882.4,684.2 L883.9,684.2 L885.4,684.2 L886.9,685.2 L888.4,684.8 L889.9,685.3 L891.4,684.2 L892.9,684.3 L894.4,684.6 L895.9,684.8 L897.4,685.0 L898.9,680.5 L900.4,677.9 L901.9,677.7 L903.4,682.2 L904.9,685.1 L906.4,685.4 L907.9,684.5 L909.4,684.7 L910.9,685.2 L912.4,684.2 L913.9,685.1 L915.4,684.9 L916.9,685.2 L918.4,685.1 L919.9,684.3 L921.4,685.0 L922.9,685.2 L924.4,684.8 L925.9,685.0 L927.4,684.2 L928.9,685.3 L930.4,684.1 L931.9,685.4 L933.4,684.2 L934.9,684.5 L936.4,685.1 L937.9,684.8 L939.4,685.0 L940.9,685.1 L942.4,685.2 L943.9,684.9 L945.4,684.1 L946.9,684.1 L948.4,684.2 L949.9,683.2 L951.4,675.3 L952.9,671.4 L954.4,672.5 L955.9,671.6 L957.4,672.2 L958.9,671.3 L960.4,672.6 L961.9,671.5 L963.4,672.1 L964.9,672.4 L966.4,674.6 L967.9,681.2 L969.4,684.7 L970.9,685.2 L972.4,684.8 L973.9,679.9 L975.4,677.4 L976.9,676.9 L978.4,677.5 L979.9,677.5 L981.4,676.7 L982.9,676.8 L984.4,677.5 L985.9,677.6 L987.4,677.6 L988.9,676.9 L990.4,678.3 L991.9,683.2 L993.4,685.1 L994.9,684.6 L996.4,684.5 L997.9,684.3 L999.4,684.6 L1000.9,685.2 L1002.4,685.3 L1003.9,684.4 L1005.4,684.9 L1006.9,684.4 L1008.4,682.3 L1009.9,676.1 L1011.4,676.4 L1012.9,675.7 L1014.4,675.7 L1015.9,676.2 L1017.4,676.9 L1018.9,675.6 L1020.4,677.6 L1021.9,682.2 L1023.4,685.1 L1024.9,685.2 L1026.4,684.3 L1027.9,684.9 L1029.4,685.2 L1030.9,684.9 L1032.4,684.6 L1033.9,685.4 L1035.4,684.7 L1036.9,684.8 L1038.4,684.7 L1039.9,685.3 L1041.4,684.5 L1042.9,684.3 L1044.4,684.2 L1045.9,685.0 L1047.4,684.5 L1048.9,684.9 L1050.4,684.4 L1051.9,685.3 L1053.4,684.2 L1054.9,684.1 L1056.4,684.8 L1057.9,684.7 L1059.4,684.7 L1060.9,678.0 L1062.4,673.4 L1063.9,672.1 L1065.4,673.1 L1066.9,673.2 L1068.4,673.3 L1069.9,673.1 L1071.4,672.3 L1072.9,673.4 L1074.4,673.3 L1075.9,672.5 L1077.4,673.2 L1078.9,673.4 L1080.4,674.5 L1081.9,681.8 L1083.4,684.7 L1084.9,684.5 L1086.4,685.3 L1087.9,684.2 L1089.4,684.4 L1090.9,685.4 L1092.4,685.3 L1093.9,684.8 L1095.4,684.7 L1096.9,685.0 L1098.4,685.3 L1099.9,684.9 L1101.4,685.2 L1102.9,684.6 L1104.4,684.3 L1105.9,685.2 L1107.4,684.6 L1108.9,678.7 L1110.4,674.9 L1111.9,674.0 L1113.4,673.9 L1114.9,674.6 L1116.4,674.6 L1117.9,674.0 L1119.4,674.4 L1120.9,674.6 L1122.4,673.9 L1123.9,674.1 L1125.4,676.3 L1126.9,682.6 L1128.4,685.0 L1129.9,684.8 L1131.4,684.1 L1132.9,684.3 L1134.4,684.2 L1135.9,684.3 L1137.4,684.3 L1138.9,685.4 L1140.4,684.7 L1141.9,684.1 L1143.4,684.1 L1144.9,685.1 L1146.4,684.9 L1147.9,684.6 L1149.4,684.9 L1150.9,684.7 L1152.4,685.3 L1153.9,684.8 L1155.4,684.7 L1156.9,685.4 L1158.4,680.6 L1159.9,671.8 L1161.4,671.5 L1162.9,671.3 L1164.4,671.7 L1165.9,671.5 L1167.4,671.4 L1168.9,671.4 L1170.4,672.5 L1171.9,671.7 L1173.4,672.2 L1174.9,671.7 L1176.4,679.4 L1177.9,684.7 L1179.4,684.2 L1180.9,684.6 L1182.4,685.1 L1183.9,684.7 L1185.4,684.8 L1186.9,684.1 L1188.4,681.3 L1189.9,675.2 L1191.4,674.3 L1192.9,675.0 L1194.4,674.3 L1195.9,673.9 L1197.4,674.5 L1198.9,674.8 L1200.4,674.5 L1201.9,674.4 L1203.4,675.0 L1204.9,675.0 L1206.4,680.7 L1207.9,685.0 L1209.4,684.9 L1210.9,685.0 L1212.4,685.1 L1213.9,685.3 L1215.4,684.7 L1216.9,684.3 L1218.4,684.6 L1219.9,684.6 L1221.4,684.5 L1222.9,685.2 L1224.4,684.5 L1225.9,684.8 L1227.4,684.7 L1228.9,684.6 L1230.4,684.8 L1231.9,685.0 L1233.4,685.1 L1234.9,685.1 L1236.4,684.7 L1237.9,683.5 L1239.4,678.1 L1240.9,676.9 L1242.4,676.4 L1243.9,675.7 L1245.4,677.9 L1246.9,682.6 L1248.4,684.8 L1249.9,685.0 L1251.4,684.1 L1252.9,685.0 L1254.4,684.4 L1255.9,685.2 L1257.4,685.3 L1258.9,679.0 L1260.4,675.4 L1261.9,675.9 L1263.4,675.5 L1264.9,675.4 L1266.4,675.0 L1267.9,675.9 L1269.4,675.7 L1270.9,678.1 L1272.4,684.0 L1273.9,685.2 L1275.4,685.0 L1276.9,684.9 L1278.4,684.5 L1279.9,684.6 L1281.4,684.3 L1282.9,684.3 L1284.4,684.7 L1285.9,684.4 L1287.4,684.4 L1288.9,684.4 L1290.4,684.8 L1291.9,684.4 L1293.4,684.5 L1294.9,684.2 L1296.4,685.3 L1297.9,683.0 L1299.4,679.6 L1300.9,676.7 L1302.4,678.2 L1303.9,682.9 L1305.4,684.1 L1306.9,684.6 L1308.4,684.9 L1309.9,684.4 L1311.4,684.2 L1312.9,684.6 L1314.4,684.9 L1315.9,684.8 L1317.4,684.8 L1318.9,684.4 L1320.4,685.0 L1321.9,684.9 L1323.4,684.7 L1324.9,684.9 L1326.4,685.0 L1327.9,684.4 L1329.4,684.3 L1330.9,684.7 L1332.4,684.8 L1333.9,685.2 L1335.4,685.0 L1336.9,685.2 L1338.4,684.6 L1339.9,684.6 L1341.4,685.3 L1342.9,684.2 L1344.4,685.0 L1345.9,684.3 L1347.4,684.3 L1348.9,684.1 L1350.4,685.1 L1351.9,684.8 L1353.4,684.2 L1354.9,685.4 L1356.4,685.4 L1357.9,682.5 L1359.4,674.3 L1360.9,670.5 L1362.4,670.7 L1363.9,671.0 L1365.4,670.4 L1366.9,671.0 L1368.4,671.0 L1369.9,670.8 L1371.4,671.2 L1372.9,671.3 L1374.4,670.9 L1375.9,671.3 L1377.4,670.4 L1378.9,670.8 L1380.4,673.2 L1381.9,682.0 L1383.4,684.9 L1384.9,684.9 L1386.4,684.7 L1387.9,684.6 L1389.4,684.2 L1390.9,684.1 L1392.4,684.8 L1393.9,678.6 L1395.4,673.5 L1396.9,672.9 L1398.4,673.8 L1399.9,673.6 L1401.4,673.2 L1402.9,674.1 L1404.4,673.9 L1405.9,673.0 L1407.4,673.2 L1408.9,673.6 L1410.4,674.2" fill="none" stroke="#f9a8d8" stroke-width="1.25" stroke-linejoin="round"/>
<line x1="813.4" y1="684.8" x2="1411.6" y2="684.8" stroke="#f2a5c9" stroke-width="1.5"/>
<rect x="1453.5" y="457.5" width="446" height="274" rx="3" fill="#141619" stroke="#202226" stroke-width="1"/>
<text x="1641" y="482" font-size="17.5" fill="#d8d9da" text-anchor="start" font-weight="400" stroke="#d8d9da" stroke-width="0.5" >Container Runtime Operations Latency</text>
<line x1="1504" y1="685.5" x2="1745" y2="685.5" stroke="rgba(255,255,255,0.17)" stroke-width="1"/>
<text x="1498" y="688.8" font-size="15" fill="#c7d0d9" text-anchor="end" font-weight="400" stroke="#c7d0d9" stroke-width="0.25" >0 μs</text>
<line x1="1504" y1="642.5" x2="1745" y2="642.5" stroke="rgba(255,255,255,0.17)" stroke-width="1"/>
<text x="1498" y="646.0" font-size="15" fill="#c7d0d9" text-anchor="end" font-weight="400" stroke="#c7d0d9" stroke-width="0.25" >2 ms</text>
<line x1="1504" y1="600.5" x2="1745" y2="600.5" stroke="rgba(255,255,255,0.17)" stroke-width="1"/>
<text x="1498" y="603.1999999999999" font-size="15" fill="#c7d0d9" text-anchor="end" font-weight="400" stroke="#c7d0d9" stroke-width="0.25" >4 ms</text>
<line x1="1504" y1="557.5" x2="1745" y2="557.5" stroke="rgba(255,255,255,0.17)" stroke-width="1"/>
<text x="1498" y="560.4" font-size="15" fill="#c7d0d9" text-anchor="end" font-weight="400" stroke="#c7d0d9" stroke-width="0.25" >6 ms</text>
<line x1="1504" y1="514.5" x2="1745" y2="514.5" stroke="rgba(255,255,255,0.17)" stroke-width="1"/>
<text x="1498" y="517.6" font-size="15" fill="#c7d0d9" text-anchor="end" font-weight="400" stroke="#c7d0d9" stroke-width="0.25" >8 ms</text>
<line x1="1540.5" y1="514" x2="1540.5" y2="686" stroke="rgba(255,255,255,0.17)" stroke-width="1"/>
<text x="1540.7" y="707" font-size="15" fill="#c7d0d9" text-anchor="middle" font-weight="400" stroke="#c7d0d9" stroke-width="0.25" >12:30</text>
<line x1="1639.5" y1="514" x2="1639.5" y2="686" stroke="rgba(255,255,255,0.17)" stroke-width="1"/>
<text x="1639.4" y="707" font-size="15" fill="#c7d0d9" text-anchor="middle" font-weight="400" stroke="#c7d0d9" stroke-width="0.25" >13:00</text>
<line x1="1740.5" y1="514" x2="1740.5" y2="686" stroke="rgba(255,255,255,0.17)" stroke-width="1"/>
<text x="1740" y="707" font-size="15" fill="#c7d0d9" text-anchor="middle" font-weight="400" stroke="#c7d0d9" stroke-width="0.25" >13:30</text>
<path d="M1504.7,665.7 L1506.2,666.5 L1507.7,666.2 L1509.2,665.8 L1510.7,666.2 L1512.2,667.6 L1513.7,668.4 L1515.2,668.0 L1516.7,667.2 L1518.2,667.1 L1519.7,667.9 L1521.2,667.7 L1522.7,666.2 L1524.2,666.0 L1525.7,666.5 L1527.2,664.4 L1528.7,665.2 L1530.2,666.7 L1531.7,665.4 L1533.2,664.1 L1534.7,665.3 L1536.2,664.0 L1537.7,666.0 L1539.2,665.0 L1540.7,663.4 L1542.2,664.2 L1543.7,664.0 L1545.2,665.5 L1546.7,664.7 L1548.2,664.7 L1549.7,665.8 L1551.2,664.8 L1552.7,665.4 L1554.2,664.3 L1555.7,665.8 L1557.2,666.5 L1558.7,667.6 L1560.2,667.7 L1561.7,666.1 L1563.2,668.3 L1564.7,668.4 L1566.2,668.3 L1567.7,667.3 L1569.2,666.4 L1570.7,667.1 L1572.2,666.4 L1573.7,668.5 L1575.2,668.6 L1576.7,666.1 L1578.2,667.3 L1579.7,665.9 L1581.2,666.7 L1582.7,667.0 L1584.2,666.5 L1585.7,666.7 L1587.2,664.1 L1588.7,664.8 L1590.2,665.3 L1591.7,664.9 L1593.2,664.9 L1594.7,665.8 L1596.2,663.3 L1597.7,664.2 L1599.2,663.1 L1600.7,664.7 L1602.2,664.3 L1603.7,665.5 L1605.2,666.3 L1606.7,663.8 L1608.2,664.3 L1609.7,666.1 L1611.2,664.6 L1612.7,665.1 L1614.2,666.9 L1615.7,666.3 L1617.2,665.4 L1618.7,667.0 L1620.2,665.8 L1621.7,668.0 L1623.2,667.7 L1624.7,666.7 L1626.2,668.2 L1627.7,667.9 L1629.2,666.2 L1630.7,667.2 L1632.2,666.2 L1633.7,667.6 L1635.2,667.6 L1636.7,666.9 L1638.2,667.1 L1639.7,664.5 L1641.2,666.3 L1642.7,665.3 L1644.2,666.4 L1645.7,664.9 L1647.2,665.2 L1648.7,665.0 L1650.2,665.9 L1651.7,665.6 L1653.2,663.4 L1654.7,664.9 L1656.2,665.2 L1657.7,665.5 L1659.2,665.3 L1660.7,665.6 L1662.2,666.4 L1663.7,664.7 L1665.2,665.9 L1666.7,666.7 L1668.2,665.3 L1669.7,667.4 L1671.2,667.1 L1672.7,665.6 L1674.2,668.0 L1675.7,667.2 L1677.2,666.2 L1678.7,666.4 L1680.2,668.4 L1681.7,667.8 L1683.2,666.7 L1684.7,667.7 L1686.2,665.9 L1687.7,668.0 L1689.2,665.6 L1690.7,666.8 L1692.2,667.4 L1693.7,666.5 L1695.2,667.2 L1696.7,665.3 L1698.2,666.3 L1699.7,664.2 L1701.2,664.9 L1702.7,665.4 L1704.2,665.5 L1705.7,664.3 L1707.2,665.4 L1708.7,663.3 L1710.2,665.5 L1711.7,664.4 L1713.2,664.3 L1714.7,665.3 L1716.2,663.9 L1717.7,665.2 L1719.2,664.6 L1720.7,665.1 L1722.2,666.1 L1723.7,666.1 L1725.2,667.2 L1726.7,667.2 L1728.2,665.4 L1729.7,667.2 L1731.2,666.4 L1732.7,668.2 L1734.2,667.0 L1735.7,667.7 L1737.2,667.4 L1738.7,668.0 L1740.2,668.7 L1741.7,667.9 L1743.2,668.1 L1744.7,668.2 L1744.7,685.6 L1504.7,685.6 Z" fill="#ef843c" fill-opacity="0.1"/>
<path d="M1504.7,665.7 L1506.2,666.5 L1507.7,666.2 L1509.2,665.8 L1510.7,666.2 L1512.2,667.6 L1513.7,668.4 L1515.2,668.0 L1516.7,667.2 L1518.2,667.1 L1519.7,667.9 L1521.2,667.7 L1522.7,666.2 L1524.2,666.0 L1525.7,666.5 L1527.2,664.4 L1528.7,665.2 L1530.2,666.7 L1531.7,665.4 L1533.2,664.1 L1534.7,665.3 L1536.2,664.0 L1537.7,666.0 L1539.2,665.0 L1540.7,663.4 L1542.2,664.2 L1543.7,664.0 L1545.2,665.5 L1546.7,664.7 L1548.2,664.7 L1549.7,665.8 L1551.2,664.8 L1552.7,665.4 L1554.2,664.3 L1555.7,665.8 L1557.2,666.5 L1558.7,667.6 L1560.2,667.7 L1561.7,666.1 L1563.2,668.3 L1564.7,668.4 L1566.2,668.3 L1567.7,667.3 L1569.2,666.4 L1570.7,667.1 L1572.2,666.4 L1573.7,668.5 L1575.2,668.6 L1576.7,666.1 L1578.2,667.3 L1579.7,665.9 L1581.2,666.7 L1582.7,667.0 L1584.2,666.5 L1585.7,666.7 L1587.2,664.1 L1588.7,664.8 L1590.2,665.3 L1591.7,664.9 L1593.2,664.9 L1594.7,665.8 L1596.2,663.3 L1597.7,664.2 L1599.2,663.1 L1600.7,664.7 L1602.2,664.3 L1603.7,665.5 L1605.2,666.3 L1606.7,663.8 L1608.2,664.3 L1609.7,666.1 L1611.2,664.6 L1612.7,665.1 L1614.2,666.9 L1615.7,666.3 L1617.2,665.4 L1618.7,667.0 L1620.2,665.8 L1621.7,668.0 L1623.2,667.7 L1624.7,666.7 L1626.2,668.2 L1627.7,667.9 L1629.2,666.2 L1630.7,667.2 L1632.2,666.2 L1633.7,667.6 L1635.2,667.6 L1636.7,666.9 L1638.2,667.1 L1639.7,664.5 L1641.2,666.3 L1642.7,665.3 L1644.2,666.4 L1645.7,664.9 L1647.2,665.2 L1648.7,665.0 L1650.2,665.9 L1651.7,665.6 L1653.2,663.4 L1654.7,664.9 L1656.2,665.2 L1657.7,665.5 L1659.2,665.3 L1660.7,665.6 L1662.2,666.4 L1663.7,664.7 L1665.2,665.9 L1666.7,666.7 L1668.2,665.3 L1669.7,667.4 L1671.2,667.1 L1672.7,665.6 L1674.2,668.0 L1675.7,667.2 L1677.2,666.2 L1678.7,666.4 L1680.2,668.4 L1681.7,667.8 L1683.2,666.7 L1684.7,667.7 L1686.2,665.9 L1687.7,668.0 L1689.2,665.6 L1690.7,666.8 L1692.2,667.4 L1693.7,666.5 L1695.2,667.2 L1696.7,665.3 L1698.2,666.3 L1699.7,664.2 L1701.2,664.9 L1702.7,665.4 L1704.2,665.5 L1705.7,664.3 L1707.2,665.4 L1708.7,663.3 L1710.2,665.5 L1711.7,664.4 L1713.2,664.3 L1714.7,665.3 L1716.2,663.9 L1717.7,665.2 L1719.2,664.6 L1720.7,665.1 L1722.2,666.1 L1723.7,666.1 L1725.2,667.2 L1726.7,667.2 L1728.2,665.4 L1729.7,667.2 L1731.2,666.4 L1732.7,668.2 L1734.2,667.0 L1735.7,667.7 L1737.2,667.4 L1738.7,668.0 L1740.2,668.7 L1741.7,667.9 L1743.2,668.1 L1744.7,668.2" fill="none" stroke="#ef843c" stroke-width="1.25" stroke-linejoin="round"/>
<path d="M1504.7,671.7 L1506.2,671.0 L1507.7,670.8 L1509.2,675.9 L1510.7,682.6 L1512.2,682.4 L1513.7,680.6 L1515.2,679.8 L1516.7,679.6 L1518.2,680.0 L1519.7,678.9 L1521.2,678.9 L1522.7,679.4 L1524.2,679.3 L1525.7,680.0 L1527.2,682.2 L1528.7,683.5 L1530.2,682.4 L1531.7,683.3 L1533.2,682.8 L1534.7,683.6 L1536.2,683.7 L1537.7,682.3 L1539.2,682.6 L1540.7,673.6 L1542.2,665.0 L1543.7,665.0 L1545.2,664.8 L1546.7,664.7 L1548.2,664.5 L1549.7,664.4 L1551.2,665.0 L1552.7,664.5 L1554.2,664.0 L1555.7,670.0 L1557.2,680.2 L1558.7,678.0 L1560.2,672.4 L1561.7,673.2 L1563.2,672.9 L1564.7,672.4 L1566.2,673.0 L1567.7,673.6 L1569.2,672.2 L1570.7,672.3 L1572.2,673.1 L1573.7,673.5 L1575.2,672.2 L1576.7,672.6 L1578.2,674.4 L1579.7,680.2 L1581.2,683.7 L1582.7,681.7 L1584.2,676.5 L1585.7,672.1 L1587.2,672.3 L1588.7,673.5 L1590.2,672.4 L1591.7,672.9 L1593.2,677.3 L1594.7,682.5 L1596.2,683.4 L1597.7,683.3 L1599.2,678.2 L1600.7,677.2 L1602.2,676.3 L1603.7,676.7 L1605.2,676.6 L1606.7,676.5 L1608.2,676.8 L1609.7,677.1 L1611.2,677.8 L1612.7,678.4 L1614.2,682.4 L1615.7,683.0 L1617.2,682.3 L1618.7,683.7 L1620.2,682.6 L1621.7,683.8 L1623.2,682.7 L1624.7,682.5 L1626.2,683.4 L1627.7,683.0 L1629.2,682.2 L1630.7,682.8 L1632.2,683.0 L1633.7,683.5 L1635.2,683.8 L1636.7,683.3 L1638.2,683.2 L1639.7,674.5 L1641.2,664.5 L1642.7,664.8 L1644.2,663.8 L1645.7,663.9 L1647.2,664.6 L1648.7,664.6 L1650.2,664.2 L1651.7,664.3 L1653.2,663.5 L1654.7,664.5 L1656.2,666.1 L1657.7,676.3 L1659.2,683.6 L1660.7,682.9 L1662.2,683.3 L1663.7,677.0 L1665.2,671.6 L1666.7,671.2 L1668.2,672.3 L1669.7,671.4 L1671.2,671.5 L1672.7,671.8 L1674.2,671.2 L1675.7,671.1 L1677.2,672.4 L1678.7,672.1 L1680.2,672.8 L1681.7,679.9 L1683.2,683.8 L1684.7,683.4 L1686.2,683.6 L1687.7,681.6 L1689.2,674.0 L1690.7,670.2 L1692.2,669.9 L1693.7,669.6 L1695.2,669.8 L1696.7,670.1 L1698.2,670.3 L1699.7,670.4 L1701.2,668.7 L1702.7,669.1 L1704.2,670.3 L1705.7,669.2 L1707.2,668.7 L1708.7,669.4 L1710.2,670.2 L1711.7,669.6 L1713.2,669.7 L1714.7,670.1 L1716.2,675.9 L1717.7,683.9 L1719.2,682.3 L1720.7,682.8 L1722.2,682.8 L1723.7,682.3 L1725.2,682.8 L1726.7,683.5 L1728.2,683.5 L1729.7,683.7 L1731.2,683.8 L1732.7,681.7 L1734.2,675.5 L1735.7,673.1 L1737.2,673.3 L1738.7,672.5 L1740.2,672.2 L1741.7,672.0 L1743.2,673.3 L1744.7,672.3 L1744.7,685.6 L1504.7,685.6 Z" fill="#6ed0e0" fill-opacity="0.08"/>
<path d="M1504.7,671.7 L1506.2,671.0 L1507.7,670.8 L1509.2,675.9 L1510.7,682.6 L1512.2,682.4 L1513.7,680.6 L1515.2,679.8 L1516.7,679.6 L1518.2,680.0 L1519.7,678.9 L1521.2,678.9 L1522.7,679.4 L1524.2,679.3 L1525.7,680.0 L1527.2,682.2 L1528.7,683.5 L1530.2,682.4 L1531.7,683.3 L1533.2,682.8 L1534.7,683.6 L1536.2,683.7 L1537.7,682.3 L1539.2,682.6 L1540.7,673.6 L1542.2,665.0 L1543.7,665.0 L1545.2,664.8 L1546.7,664.7 L1548.2,664.5 L1549.7,664.4 L1551.2,665.0 L1552.7,664.5 L1554.2,664.0 L1555.7,670.0 L1557.2,680.2 L1558.7,678.0 L1560.2,672.4 L1561.7,673.2 L1563.2,672.9 L1564.7,672.4 L1566.2,673.0 L1567.7,673.6 L1569.2,672.2 L1570.7,672.3 L1572.2,673.1 L1573.7,673.5 L1575.2,672.2 L1576.7,672.6 L1578.2,674.4 L1579.7,680.2 L1581.2,683.7 L1582.7,681.7 L1584.2,676.5 L1585.7,672.1 L1587.2,672.3 L1588.7,673.5 L1590.2,672.4 L1591.7,672.9 L1593.2,677.3 L1594.7,682.5 L1596.2,683.4 L1597.7,683.3 L1599.2,678.2 L1600.7,677.2 L1602.2,676.3 L1603.7,676.7 L1605.2,676.6 L1606.7,676.5 L1608.2,676.8 L1609.7,677.1 L1611.2,677.8 L1612.7,678.4 L1614.2,682.4 L1615.7,683.0 L1617.2,682.3 L1618.7,683.7 L1620.2,682.6 L1621.7,683.8 L1623.2,682.7 L1624.7,682.5 L1626.2,683.4 L1627.7,683.0 L1629.2,682.2 L1630.7,682.8 L1632.2,683.0 L1633.7,683.5 L1635.2,683.8 L1636.7,683.3 L1638.2,683.2 L1639.7,674.5 L1641.2,664.5 L1642.7,664.8 L1644.2,663.8 L1645.7,663.9 L1647.2,664.6 L1648.7,664.6 L1650.2,664.2 L1651.7,664.3 L1653.2,663.5 L1654.7,664.5 L1656.2,666.1 L1657.7,676.3 L1659.2,683.6 L1660.7,682.9 L1662.2,683.3 L1663.7,677.0 L1665.2,671.6 L1666.7,671.2 L1668.2,672.3 L1669.7,671.4 L1671.2,671.5 L1672.7,671.8 L1674.2,671.2 L1675.7,671.1 L1677.2,672.4 L1678.7,672.1 L1680.2,672.8 L1681.7,679.9 L1683.2,683.8 L1684.7,683.4 L1686.2,683.6 L1687.7,681.6 L1689.2,674.0 L1690.7,670.2 L1692.2,669.9 L1693.7,669.6 L1695.2,669.8 L1696.7,670.1 L1698.2,670.3 L1699.7,670.4 L1701.2,668.7 L1702.7,669.1 L1704.2,670.3 L1705.7,669.2 L1707.2,668.7 L1708.7,669.4 L1710.2,670.2 L1711.7,669.6 L1713.2,669.7 L1714.7,670.1 L1716.2,675.9 L1717.7,683.9 L1719.2,682.3 L1720.7,682.8 L1722.2,682.8 L1723.7,682.3 L1725.2,682.8 L1726.7,683.5 L1728.2,683.5 L1729.7,683.7 L1731.2,683.8 L1732.7,681.7 L1734.2,675.5 L1735.7,673.1 L1737.2,673.3 L1738.7,672.5 L1740.2,672.2 L1741.7,672.0 L1743.2,673.3 L1744.7,672.3" fill="none" stroke="#6ed0e0" stroke-width="1.25" stroke-linejoin="round"/>
<path d="M1504.7,669.9 L1506.2,668.2 L1507.7,668.7 L1509.2,668.9 L1510.7,672.3 L1512.2,681.9 L1513.7,683.6 L1515.2,683.4 L1516.7,683.6 L1518.2,683.0 L1519.7,683.8 L1521.2,684.0 L1522.7,683.4 L1524.2,683.3 L1525.7,683.0 L1527.2,683.2 L1528.7,682.9 L1530.2,682.9 L1531.7,683.5 L1533.2,683.5 L1534.7,683.9 L1536.2,683.7 L1537.7,683.4 L1539.2,684.0 L1540.7,683.2 L1542.2,683.9 L1543.7,675.8 L1545.2,666.8 L1546.7,667.9 L1548.2,668.0 L1549.7,667.5 L1551.2,667.8 L1552.7,667.1 L1554.2,668.0 L1555.7,671.5 L1557.2,681.1 L1558.7,683.1 L1560.2,683.6 L1561.7,683.7 L1563.2,683.3 L1564.7,683.4 L1566.2,683.6 L1567.7,683.7 L1569.2,683.5 L1570.7,683.2 L1572.2,683.0 L1573.7,682.9 L1575.2,683.9 L1576.7,683.7 L1578.2,683.5 L1579.7,683.4 L1581.2,683.7 L1582.7,683.9 L1584.2,684.0 L1585.7,683.7 L1587.2,683.5 L1588.7,682.9 L1590.2,682.9 L1591.7,683.0 L1593.2,682.9 L1594.7,682.9 L1596.2,683.3 L1597.7,683.1 L1599.2,684.0 L1600.7,683.2 L1602.2,683.3 L1603.7,683.7 L1605.2,683.4 L1606.7,682.9 L1608.2,683.5 L1609.7,683.3 L1611.2,683.7 L1612.7,683.7 L1614.2,683.0 L1615.7,684.1 L1617.2,683.9 L1618.7,683.2 L1620.2,683.5 L1621.7,684.0 L1623.2,683.3 L1624.7,683.6 L1626.2,683.4 L1627.7,683.6 L1629.2,683.4 L1630.7,683.4 L1632.2,683.6 L1633.7,684.0 L1635.2,683.9 L1636.7,683.0 L1638.2,683.4 L1639.7,671.1 L1641.2,656.2 L1642.7,657.0 L1644.2,657.2 L1645.7,656.7 L1647.2,657.0 L1648.7,656.7 L1650.2,656.6 L1651.7,657.1 L1653.2,656.6 L1654.7,657.2 L1656.2,658.8 L1657.7,674.8 L1659.2,684.0 L1660.7,683.6 L1662.2,684.0 L1663.7,683.5 L1665.2,683.0 L1666.7,683.4 L1668.2,683.2 L1669.7,683.1 L1671.2,684.0 L1672.7,682.8 L1674.2,683.2 L1675.7,684.0 L1677.2,683.0 L1678.7,683.6 L1680.2,683.9 L1681.7,682.9 L1683.2,683.4 L1684.7,683.1 L1686.2,683.9 L1687.7,683.1 L1689.2,684.0 L1690.7,683.8 L1692.2,683.6 L1693.7,684.1 L1695.2,683.3 L1696.7,683.8 L1698.2,681.9 L1699.7,677.5 L1701.2,677.1 L1702.7,676.5 L1704.2,676.9 L1705.7,676.6 L1707.2,677.0 L1708.7,676.5 L1710.2,676.6 L1711.7,677.5 L1713.2,679.8 L1714.7,683.7 L1716.2,683.1 L1717.7,683.2 L1719.2,683.0 L1720.7,683.9 L1722.2,683.6 L1723.7,683.2 L1725.2,682.9 L1726.7,683.2 L1728.2,684.0 L1729.7,683.3 L1731.2,684.0 L1732.7,683.4 L1734.2,683.1 L1735.7,684.0 L1737.2,682.9 L1738.7,683.2 L1740.2,683.8 L1741.7,683.9 L1743.2,683.5 L1744.7,683.0 L1744.7,685.6 L1504.7,685.6 Z" fill="#5794f2" fill-opacity="0.08"/>
<path d="M1504.7,669.9 L1506.2,668.2 L1507.7,668.7 L1509.2,668.9 L1510.7,672.3 L1512.2,681.9 L1513.7,683.6 L1515.2,683.4 L1516.7,683.6 L1518.2,683.0 L1519.7,683.8 L1521.2,684.0 L1522.7,683.4 L1524.2,683.3 L1525.7,683.0 L1527.2,683.2 L1528.7,682.9 L1530.2,682.9 L1531.7,683.5 L1533.2,683.5 L1534.7,683.9 L1536.2,683.7 L1537.7,683.4 L1539.2,684.0 L1540.7,683.2 L1542.2,683.9 L1543.7,675.8 L1545.2,666.8 L1546.7,667.9 L1548.2,668.0 L1549.7,667.5 L1551.2,667.8 L1552.7,667.1 L1554.2,668.0 L1555.7,671.5 L1557.2,681.1 L1558.7,683.1 L1560.2,683.6 L1561.7,683.7 L1563.2,683.3 L1564.7,683.4 L1566.2,683.6 L1567.7,683.7 L1569.2,683.5 L1570.7,683.2 L1572.2,683.0 L1573.7,682.9 L1575.2,683.9 L1576.7,683.7 L1578.2,683.5 L1579.7,683.4 L1581.2,683.7 L1582.7,683.9 L1584.2,684.0 L1585.7,683.7 L1587.2,683.5 L1588.7,682.9 L1590.2,682.9 L1591.7,683.0 L1593.2,682.9 L1594.7,682.9 L1596.2,683.3 L1597.7,683.1 L1599.2,684.0 L1600.7,683.2 L1602.2,683.3 L1603.7,683.7 L1605.2,683.4 L1606.7,682.9 L1608.2,683.5 L1609.7,683.3 L1611.2,683.7 L1612.7,683.7 L1614.2,683.0 L1615.7,684.1 L1617.2,683.9 L1618.7,683.2 L1620.2,683.5 L1621.7,684.0 L1623.2,683.3 L1624.7,683.6 L1626.2,683.4 L1627.7,683.6 L1629.2,683.4 L1630.7,683.4 L1632.2,683.6 L1633.7,684.0 L1635.2,683.9 L1636.7,683.0 L1638.2,683.4 L1639.7,671.1 L1641.2,656.2 L1642.7,657.0 L1644.2,657.2 L1645.7,656.7 L1647.2,657.0 L1648.7,656.7 L1650.2,656.6 L1651.7,657.1 L1653.2,656.6 L1654.7,657.2 L1656.2,658.8 L1657.7,674.8 L1659.2,684.0 L1660.7,683.6 L1662.2,684.0 L1663.7,683.5 L1665.2,683.0 L1666.7,683.4 L1668.2,683.2 L1669.7,683.1 L1671.2,684.0 L1672.7,682.8 L1674.2,683.2 L1675.7,684.0 L1677.2,683.0 L1678.7,683.6 L1680.2,683.9 L1681.7,682.9 L1683.2,683.4 L1684.7,683.1 L1686.2,683.9 L1687.7,683.1 L1689.2,684.0 L1690.7,683.8 L1692.2,683.6 L1693.7,684.1 L1695.2,683.3 L1696.7,683.8 L1698.2,681.9 L1699.7,677.5 L1701.2,677.1 L1702.7,676.5 L1704.2,676.9 L1705.7,676.6 L1707.2,677.0 L1708.7,676.5 L1710.2,676.6 L1711.7,677.5 L1713.2,679.8 L1714.7,683.7 L1716.2,683.1 L1717.7,683.2 L1719.2,683.0 L1720.7,683.9 L1722.2,683.6 L1723.7,683.2 L1725.2,682.9 L1726.7,683.2 L1728.2,684.0 L1729.7,683.3 L1731.2,684.0 L1732.7,683.4 L1734.2,683.1 L1735.7,684.0 L1737.2,682.9 L1738.7,683.2 L1740.2,683.8 L1741.7,683.9 L1743.2,683.5 L1744.7,683.0" fill="none" stroke="#5794f2" stroke-width="1.25" stroke-linejoin="round"/>
<path d="M1504.7,684.4 L1506.2,685.0 L1507.7,685.1 L1509.2,685.0 L1510.7,684.1 L1512.2,684.9 L1513.7,684.5 L1515.2,684.8 L1516.7,684.3 L1518.2,684.7 L1519.7,685.0 L1521.2,684.0 L1522.7,684.5 L1524.2,684.3 L1525.7,684.1 L1527.2,684.0 L1528.7,685.2 L1530.2,684.7 L1531.7,685.0 L1533.2,684.5 L1534.7,684.1 L1536.2,684.1 L1537.7,685.1 L1539.2,684.9 L1540.7,684.1 L1542.2,684.3 L1543.7,679.0 L1545.2,672.8 L1546.7,673.2 L1548.2,672.3 L1549.7,672.9 L1551.2,672.3 L1552.7,672.6 L1554.2,673.3 L1555.7,673.0 L1557.2,678.8 L1558.7,684.0 L1560.2,684.4 L1561.7,685.1 L1563.2,685.0 L1564.7,684.7 L1566.2,684.6 L1567.7,684.4 L1569.2,684.7 L1570.7,684.7 L1572.2,685.2 L1573.7,684.4 L1575.2,684.7 L1576.7,685.1 L1578.2,684.6 L1579.7,683.9 L1581.2,685.1 L1582.7,685.0 L1584.2,684.3 L1585.7,684.8 L1587.2,684.8 L1588.7,684.5 L1590.2,684.8 L1591.7,684.4 L1593.2,684.5 L1594.7,683.9 L1596.2,683.9 L1597.7,685.1 L1599.2,684.5 L1600.7,684.2 L1602.2,684.1 L1603.7,684.2 L1605.2,684.4 L1606.7,684.4 L1608.2,684.7 L1609.7,684.8 L1611.2,684.2 L1612.7,684.1 L1614.2,684.0 L1615.7,684.3 L1617.2,684.8 L1618.7,684.2 L1620.2,684.2 L1621.7,684.5 L1623.2,684.4 L1624.7,684.7 L1626.2,684.5 L1627.7,684.7 L1629.2,685.1 L1630.7,684.7 L1632.2,684.8 L1633.7,683.9 L1635.2,684.6 L1636.7,684.7 L1638.2,684.9 L1639.7,679.7 L1641.2,674.0 L1642.7,674.3 L1644.2,674.5 L1645.7,673.4 L1647.2,673.9 L1648.7,673.9 L1650.2,673.7 L1651.7,674.1 L1653.2,674.3 L1654.7,674.4 L1656.2,674.9 L1657.7,681.4 L1659.2,684.2 L1660.7,684.5 L1662.2,684.0 L1663.7,684.7 L1665.2,684.0 L1666.7,684.4 L1668.2,685.1 L1669.7,684.9 L1671.2,684.4 L1672.7,683.9 L1674.2,684.7 L1675.7,684.2 L1677.2,684.6 L1678.7,684.1 L1680.2,685.1 L1681.7,684.5 L1683.2,684.0 L1684.7,684.8 L1686.2,684.8 L1687.7,685.1 L1689.2,685.0 L1690.7,684.8 L1692.2,684.3 L1693.7,684.9 L1695.2,684.7 L1696.7,684.9 L1698.2,684.4 L1699.7,684.1 L1701.2,684.3 L1702.7,684.9 L1704.2,684.2 L1705.7,683.9 L1707.2,684.4 L1708.7,685.1 L1710.2,684.1 L1711.7,684.0 L1713.2,684.7 L1714.7,685.0 L1716.2,684.9 L1717.7,684.5 L1719.2,684.0 L1720.7,684.4 L1722.2,684.0 L1723.7,684.9 L1725.2,684.8 L1726.7,684.2 L1728.2,684.3 L1729.7,684.7 L1731.2,684.3 L1732.7,684.7 L1734.2,685.1 L1735.7,684.6 L1737.2,685.1 L1738.7,684.4 L1740.2,684.7 L1741.7,684.5 L1743.2,684.4 L1744.7,684.8 L1744.7,685.6 L1504.7,685.6 Z" fill="#a99ee0" fill-opacity="0.1"/>
<path d="M1504.7,684.4 L1506.2,685.0 L1507.7,685.1 L1509.2,685.0 L1510.7,684.1 L1512.2,684.9 L1513.7,684.5 L1515.2,684.8 L1516.7,684.3 L1518.2,684.7 L1519.7,685.0 L1521.2,684.0 L1522.7,684.5 L1524.2,684.3 L1525.7,684.1 L1527.2,684.0 L1528.7,685.2 L1530.2,684.7 L1531.7,685.0 L1533.2,684.5 L1534.7,684.1 L1536.2,684.1 L1537.7,685.1 L1539.2,684.9 L1540.7,684.1 L1542.2,684.3 L1543.7,679.0 L1545.2,672.8 L1546.7,673.2 L1548.2,672.3 L1549.7,672.9 L1551.2,672.3 L1552.7,672.6 L1554.2,673.3 L1555.7,673.0 L1557.2,678.8 L1558.7,684.0 L1560.2,684.4 L1561.7,685.1 L1563.2,685.0 L1564.7,684.7 L1566.2,684.6 L1567.7,684.4 L1569.2,684.7 L1570.7,684.7 L1572.2,685.2 L1573.7,684.4 L1575.2,684.7 L1576.7,685.1 L1578.2,684.6 L1579.7,683.9 L1581.2,685.1 L1582.7,685.0 L1584.2,684.3 L1585.7,684.8 L1587.2,684.8 L1588.7,684.5 L1590.2,684.8 L1591.7,684.4 L1593.2,684.5 L1594.7,683.9 L1596.2,683.9 L1597.7,685.1 L1599.2,684.5 L1600.7,684.2 L1602.2,684.1 L1603.7,684.2 L1605.2,684.4 L1606.7,684.4 L1608.2,684.7 L1609.7,684.8 L1611.2,684.2 L1612.7,684.1 L1614.2,684.0 L1615.7,684.3 L1617.2,684.8 L1618.7,684.2 L1620.2,684.2 L1621.7,684.5 L1623.2,684.4 L1624.7,684.7 L1626.2,684.5 L1627.7,684.7 L1629.2,685.1 L1630.7,684.7 L1632.2,684.8 L1633.7,683.9 L1635.2,684.6 L1636.7,684.7 L1638.2,684.9 L1639.7,679.7 L1641.2,674.0 L1642.7,674.3 L1644.2,674.5 L1645.7,673.4 L1647.2,673.9 L1648.7,673.9 L1650.2,673.7 L1651.7,674.1 L1653.2,674.3 L1654.7,674.4 L1656.2,674.9 L1657.7,681.4 L1659.2,684.2 L1660.7,684.5 L1662.2,684.0 L1663.7,684.7 L1665.2,684.0 L1666.7,684.4 L1668.2,685.1 L1669.7,684.9 L1671.2,684.4 L1672.7,683.9 L1674.2,684.7 L1675.7,684.2 L1677.2,684.6 L1678.7,684.1 L1680.2,685.1 L1681.7,684.5 L1683.2,684.0 L1684.7,684.8 L1686.2,684.8 L1687.7,685.1 L1689.2,685.0 L1690.7,684.8 L1692.2,684.3 L1693.7,684.9 L1695.2,684.7 L1696.7,684.9 L1698.2,684.4 L1699.7,684.1 L1701.2,684.3 L1702.7,684.9 L1704.2,684.2 L1705.7,683.9 L1707.2,684.4 L1708.7,685.1 L1710.2,684.1 L1711.7,684.0 L1713.2,684.7 L1714.7,685.0 L1716.2,684.9 L1717.7,684.5 L1719.2,684.0 L1720.7,684.4 L1722.2,684.0 L1723.7,684.9 L1725.2,684.8 L1726.7,684.2 L1728.2,684.3 L1729.7,684.7 L1731.2,684.3 L1732.7,684.7 L1734.2,685.1 L1735.7,684.6 L1737.2,685.1 L1738.7,684.4 L1740.2,684.7 L1741.7,684.5 L1743.2,684.4 L1744.7,684.8" fill="none" stroke="#a99ee0" stroke-width="1.25" stroke-linejoin="round"/>
<line x1="1504.7" y1="685.5" x2="1745" y2="685.5" stroke="#f2c96d" stroke-width="1.4"/>
<rect x="80.5" y="742.5" width="504" height="277" rx="3" fill="#141619" stroke="#202226" stroke-width="1"/>
<path d="M272,756.5 c-2.5,-3 -7.5,-2 -7.5,2.3 c0,3.6 4.6,6.5 7.5,8.2 c2.9,-1.7 7.5,-4.6 7.5,-8.2 c0,-4.3 -5,-5.3 -7.5,-2.3 z" fill="#299c46"/>
<text x="286.5" y="767" font-size="17.5" fill="#d8d9da" text-anchor="start" font-weight="400" stroke="#d8d9da" stroke-width="0.5" >Alerts by State</text>
<rect x="110.7" y="799.1999999999999" width="442.90000000000003" height="134.41600000000005" fill="rgb(234,112,112)" fill-opacity="0.12"/>
<line x1="110" y1="961.5" x2="554" y2="961.5" stroke="rgba(255,255,255,0.17)" stroke-width="1"/>
<text x="100.5" y="964.9999999999999" font-size="15" fill="#c7d0d9" text-anchor="end" font-weight="400" stroke="#c7d0d9" stroke-width="0.25" >0</text>
<line x1="110" y1="907.5" x2="554" y2="907.5" stroke="rgba(255,255,255,0.17)" stroke-width="1"/>
<text x="100.5" y="910.7999999999998" font-size="15" fill="#c7d0d9" text-anchor="end" font-weight="400" stroke="#c7d0d9" stroke-width="0.25" >1</text>
<line x1="110" y1="853.5" x2="554" y2="853.5" stroke="rgba(255,255,255,0.17)" stroke-width="1"/>
<text x="100.5" y="856.5999999999999" font-size="15" fill="#c7d0d9" text-anchor="end" font-weight="400" stroke="#c7d0d9" stroke-width="0.25" >2</text>
<line x1="110" y1="799.5" x2="554" y2="799.5" stroke="rgba(255,255,255,0.17)" stroke-width="1"/>
<text x="100.5" y="802.3999999999999" font-size="15" fill="#c7d0d9" text-anchor="end" font-weight="400" stroke="#c7d0d9" stroke-width="0.25" >3</text>
<line x1="211.5" y1="799" x2="211.5" y2="962" stroke="rgba(255,255,255,0.17)" stroke-width="1"/>
<text x="211.5" y="992" font-size="15" fill="#c7d0d9" text-anchor="middle" font-weight="400" stroke="#c7d0d9" stroke-width="0.25" >13:00</text>
<line x1="359.5" y1="799" x2="359.5" y2="962" stroke="rgba(255,255,255,0.17)" stroke-width="1"/>
<text x="359.4" y="992" font-size="15" fill="#c7d0d9" text-anchor="middle" font-weight="400" stroke="#c7d0d9" stroke-width="0.25" >14:00</text>
<line x1="506.5" y1="799" x2="506.5" y2="962" stroke="rgba(255,255,255,0.17)" stroke-width="1"/>
<text x="506.5" y="992" font-size="15" fill="#c7d0d9" text-anchor="middle" font-weight="400" stroke="#c7d0d9" stroke-width="0.25" >15:00</text>
<line x1="110.7" y1="933.616" x2="553.6" y2="933.616" stroke="rgb(237,46,24)" stroke-opacity="0.75" stroke-width="2.2"/>
<line x1="110.7" y1="907.5999999999999" x2="553.6" y2="907.5999999999999" stroke="#7eb26d" stroke-width="1.6"/>
<path d="M110.7,961.8 L368.5,961.8 L370.5,853.4 L553.6,853.4" fill="none" stroke="#eab839" stroke-width="1.5" stroke-linejoin="round"/>
<path d="M142.3,961.8 L143.9,907.5999999999999 L145.1,907.5999999999999 L146.7,961.8" fill="none" stroke="#ef843c" stroke-width="1.5"/>
<path d="M210.60000000000002,961.8 L212.20000000000002,853.4 L213.4,853.4 L215.0,961.8" fill="none" stroke="#1f78c1" stroke-width="1.5"/>
<path d="M358.3,961.8 L359.9,853.4 L361.1,853.4 L362.7,961.8" fill="none" stroke="#1f78c1" stroke-width="1.5"/>
<path d="M506.0,961.8 L507.59999999999997,907.5999999999999 L508.8,907.5999999999999 L510.4,961.8" fill="none" stroke="#1f78c1" stroke-width="1.5"/>
<line x1="110.7" y1="961.8" x2="553.6" y2="961.8" stroke="#6b8dd6" stroke-width="1.6"/>
<line x1="547.4" y1="798.8" x2="547.4" y2="962" stroke="#2fbf3f" stroke-width="1" stroke-dasharray="2.5,2"/>
<path d="M547.4,963 L552.5,969.5 L542.3,969.5 Z" fill="#2fbf3f"/>
<rect x="595.5" y="742.5" width="504" height="277" rx="3" fill="#141619" stroke="#202226" stroke-width="1"/>
<text x="847.5" y="767" font-size="17.5" fill="#d8d9da" text-anchor="middle" font-weight="400" stroke="#d8d9da" stroke-width="0.5" >APIServer Requests by Status</text>
<line x1="637" y1="969.5" x2="1069" y2="969.5" stroke="rgba(255,255,255,0.17)" stroke-width="1"/>
<text x="631" y="973.0999999999999" font-size="15" fill="#c7d0d9" text-anchor="end" font-weight="400" stroke="#c7d0d9" stroke-width="0.25" >0</text>
<line x1="637" y1="913.5" x2="1069" y2="913.5" stroke="rgba(255,255,255,0.17)" stroke-width="1"/>
<text x="631" y="916.2499999999999" font-size="15" fill="#c7d0d9" text-anchor="end" font-weight="400" stroke="#c7d0d9" stroke-width="0.25" >50</text>
<line x1="637" y1="856.5" x2="1069" y2="856.5" stroke="rgba(255,255,255,0.17)" stroke-width="1"/>
<text x="631" y="859.3999999999999" font-size="15" fill="#c7d0d9" text-anchor="end" font-weight="400" stroke="#c7d0d9" stroke-width="0.25" >100</text>
<line x1="637" y1="799.5" x2="1069" y2="799.5" stroke="rgba(255,255,255,0.17)" stroke-width="1"/>
<text x="631" y="802.5499999999998" font-size="15" fill="#c7d0d9" text-anchor="end" font-weight="400" stroke="#c7d0d9" stroke-width="0.25" >150</text>
<line x1="736.5" y1="799" x2="736.5" y2="970" stroke="rgba(255,255,255,0.17)" stroke-width="1"/>
<text x="736.6" y="992" font-size="15" fill="#c7d0d9" text-anchor="middle" font-weight="400" stroke="#c7d0d9" stroke-width="0.25" >13:00</text>
<line x1="879.5" y1="799" x2="879.5" y2="970" stroke="rgba(255,255,255,0.17)" stroke-width="1"/>
<text x="879" y="992" font-size="15" fill="#c7d0d9" text-anchor="middle" font-weight="400" stroke="#c7d0d9" stroke-width="0.25" >14:00</text>
<line x1="1022.5" y1="799" x2="1022.5" y2="970" stroke="rgba(255,255,255,0.17)" stroke-width="1"/>
<text x="1022.7" y="992" font-size="15" fill="#c7d0d9" text-anchor="middle" font-weight="400" stroke="#c7d0d9" stroke-width="0.25" >15:00</text>
<path d="M637.7,874.0 L639.2,871.1 L640.7,871.9 L642.2,869.3 L643.7,871.9 L645.2,872.4 L646.7,872.1 L648.2,870.2 L649.7,869.6 L651.2,869.2 L652.7,870.2 L654.2,869.9 L655.7,867.7 L657.2,868.8 L658.7,865.8 L660.2,868.5 L661.7,866.0 L663.2,870.2 L664.7,867.9 L666.2,868.4 L667.7,868.6 L669.2,869.1 L670.7,869.9 L672.2,869.4 L673.7,870.5 L675.2,868.9 L676.7,870.3 L678.2,867.1 L679.7,871.1 L681.2,869.7 L682.7,867.8 L684.2,868.1 L685.7,867.7 L687.2,866.5 L688.7,867.9 L690.2,869.1 L691.7,868.5 L693.2,870.5 L694.7,869.4 L696.2,869.5 L697.7,871.5 L699.2,871.3 L700.7,872.7 L702.2,870.5 L703.7,869.7 L705.2,871.8 L706.7,871.4 L708.2,872.9 L709.7,870.3 L711.2,872.6 L712.7,870.5 L714.2,872.0 L715.7,872.6 L717.2,870.9 L718.7,871.5 L720.2,872.2 L721.7,873.6 L723.2,869.9 L724.7,873.8 L726.2,871.2 L727.7,872.4 L729.2,873.8 L730.7,876.6 L732.2,876.6 L733.7,873.9 L735.2,873.6 L736.7,875.7 L738.2,873.5 L739.7,875.8 L741.2,875.1 L742.7,875.7 L744.2,873.5 L745.7,874.2 L747.2,876.4 L748.7,876.9 L750.2,876.0 L751.7,875.8 L753.2,878.1 L754.7,876.7 L756.2,876.4 L757.7,874.7 L759.2,874.8 L760.7,877.2 L762.2,878.1 L763.7,876.6 L765.2,876.5 L766.7,878.4 L768.2,875.7 L769.7,876.0 L771.2,874.0 L772.7,874.2 L774.2,875.9 L775.7,873.7 L777.2,876.1 L778.7,877.1 L780.2,876.6 L781.7,873.0 L783.2,874.7 L784.7,876.3 L786.2,877.3 L787.7,874.2 L789.2,876.1 L790.7,874.7 L792.2,873.5 L793.7,872.4 L795.2,874.2 L796.7,874.4 L798.2,872.4 L799.7,874.3 L801.2,874.7 L802.7,874.2 L804.2,873.4 L805.7,874.0 L807.2,873.0 L808.7,873.3 L810.2,872.7 L811.7,873.4 L813.2,874.3 L814.7,876.1 L816.2,873.8 L817.7,873.7 L819.2,874.1 L820.7,872.7 L822.2,873.4 L823.7,871.8 L825.2,874.2 L826.7,871.6 L828.2,873.5 L829.7,873.7 L831.2,874.2 L832.7,872.9 L834.2,874.6 L835.7,871.5 L837.2,873.1 L838.7,871.9 L840.2,873.7 L841.7,872.6 L843.2,873.0 L844.7,872.9 L846.2,874.3 L847.7,872.9 L849.2,875.2 L850.7,874.4 L852.2,874.9 L853.7,874.8 L855.2,871.7 L856.7,873.9 L858.2,872.6 L859.7,874.9 L861.2,873.9 L862.7,873.7 L864.2,872.6 L865.7,873.1 L867.2,872.5 L868.7,873.0 L870.2,870.2 L871.7,870.6 L873.2,873.1 L874.7,871.4 L876.2,871.0 L877.7,869.2 L879.2,870.8 L880.7,871.3 L882.2,870.8 L883.7,869.1 L885.2,870.7 L886.7,869.5 L888.2,869.4 L889.7,872.2 L891.2,869.9 L892.7,868.6 L894.2,871.4 L895.7,870.1 L897.2,873.5 L898.7,871.3 L900.2,871.8 L901.7,872.1 L903.2,872.2 L904.7,872.8 L906.2,870.9 L907.7,872.6 L909.2,871.6 L910.7,870.9 L912.2,874.0 L913.7,874.4 L915.2,872.6 L916.7,873.0 L918.2,874.4 L919.7,871.8 L921.2,873.1 L922.7,874.4 L924.2,873.2 L925.7,872.8 L927.2,873.1 L928.7,873.1 L930.2,870.9 L931.7,872.7 L933.2,872.3 L934.7,872.5 L936.2,871.2 L937.7,872.0 L939.2,871.8 L940.7,870.6 L942.2,871.0 L943.7,873.5 L945.2,874.6 L946.7,873.8 L948.2,873.2 L949.7,870.9 L951.2,870.5 L952.7,869.5 L954.2,871.6 L955.7,871.2 L957.2,870.1 L958.7,871.3 L960.2,867.6 L961.7,868.9 L963.2,868.5 L964.7,870.8 L966.2,869.8 L967.7,870.2 L969.2,872.8 L970.7,872.3 L972.2,872.8 L973.7,871.3 L975.2,871.3 L976.7,868.9 L978.2,861.5 L979.7,861.4 L981.2,862.0 L982.7,862.5 L984.2,861.6 L985.7,861.4 L987.2,860.2 L988.7,859.2 L990.2,858.3 L991.7,857.8 L993.2,858.6 L994.7,859.3 L996.2,863.0 L997.7,868.6 L999.2,868.6 L1000.7,868.7 L1002.2,868.3 L1003.7,868.2 L1005.2,869.1 L1006.7,868.3 L1008.2,870.5 L1009.7,870.2 L1011.2,869.8 L1012.7,868.8 L1014.2,867.9 L1015.7,870.4 L1017.2,868.9 L1018.7,866.3 L1020.2,868.9 L1021.7,867.1 L1023.2,869.3 L1024.7,870.6 L1026.2,870.5 L1027.7,869.2 L1029.2,870.6 L1030.7,870.7 L1032.2,871.4 L1033.7,869.7 L1035.2,870.6 L1036.7,868.0 L1038.2,867.3 L1039.7,868.6 L1041.2,868.8 L1042.7,869.8 L1044.2,868.2 L1045.7,867.3 L1047.2,869.3 L1048.7,869.7 L1050.2,868.7 L1051.7,871.3 L1053.2,868.4 L1054.7,870.7 L1056.2,869.6 L1057.7,869.9 L1059.2,869.6 L1060.7,870.6 L1062.2,872.7 L1063.7,874.1 L1065.2,872.0 L1066.7,874.0 L1068.2,875.2 L1068.2,969.9 L637.7,969.9 Z" fill="#eab839" fill-opacity="0.12"/>
<path d="M637.7,874.0 L639.2,871.1 L640.7,871.9 L642.2,869.3 L643.7,871.9 L645.2,872.4 L646.7,872.1 L648.2,870.2 L649.7,869.6 L651.2,869.2 L652.7,870.2 L654.2,869.9 L655.7,867.7 L657.2,868.8 L658.7,865.8 L660.2,868.5 L661.7,866.0 L663.2,870.2 L664.7,867.9 L666.2,868.4 L667.7,868.6 L669.2,869.1 L670.7,869.9 L672.2,869.4 L673.7,870.5 L675.2,868.9 L676.7,870.3 L678.2,867.1 L679.7,871.1 L681.2,869.7 L682.7,867.8 L684.2,868.1 L685.7,867.7 L687.2,866.5 L688.7,867.9 L690.2,869.1 L691.7,868.5 L693.2,870.5 L694.7,869.4 L696.2,869.5 L697.7,871.5 L699.2,871.3 L700.7,872.7 L702.2,870.5 L703.7,869.7 L705.2,871.8 L706.7,871.4 L708.2,872.9 L709.7,870.3 L711.2,872.6 L712.7,870.5 L714.2,872.0 L715.7,872.6 L717.2,870.9 L718.7,871.5 L720.2,872.2 L721.7,873.6 L723.2,869.9 L724.7,873.8 L726.2,871.2 L727.7,872.4 L729.2,873.8 L730.7,876.6 L732.2,876.6 L733.7,873.9 L735.2,873.6 L736.7,875.7 L738.2,873.5 L739.7,875.8 L741.2,875.1 L742.7,875.7 L744.2,873.5 L745.7,874.2 L747.2,876.4 L748.7,876.9 L750.2,876.0 L751.7,875.8 L753.2,878.1 L754.7,876.7 L756.2,876.4 L757.7,874.7 L759.2,874.8 L760.7,877.2 L762.2,878.1 L763.7,876.6 L765.2,876.5 L766.7,878.4 L768.2,875.7 L769.7,876.0 L771.2,874.0 L772.7,874.2 L774.2,875.9 L775.7,873.7 L777.2,876.1 L778.7,877.1 L780.2,876.6 L781.7,873.0 L783.2,874.7 L784.7,876.3 L786.2,877.3 L787.7,874.2 L789.2,876.1 L790.7,874.7 L792.2,873.5 L793.7,872.4 L795.2,874.2 L796.7,874.4 L798.2,872.4 L799.7,874.3 L801.2,874.7 L802.7,874.2 L804.2,873.4 L805.7,874.0 L807.2,873.0 L808.7,873.3 L810.2,872.7 L811.7,873.4 L813.2,874.3 L814.7,876.1 L816.2,873.8 L817.7,873.7 L819.2,874.1 L820.7,872.7 L822.2,873.4 L823.7,871.8 L825.2,874.2 L826.7,871.6 L828.2,873.5 L829.7,873.7 L831.2,874.2 L832.7,872.9 L834.2,874.6 L835.7,871.5 L837.2,873.1 L838.7,871.9 L840.2,873.7 L841.7,872.6 L843.2,873.0 L844.7,872.9 L846.2,874.3 L847.7,872.9 L849.2,875.2 L850.7,874.4 L852.2,874.9 L853.7,874.8 L855.2,871.7 L856.7,873.9 L858.2,872.6 L859.7,874.9 L861.2,873.9 L862.7,873.7 L864.2,872.6 L865.7,873.1 L867.2,872.5 L868.7,873.0 L870.2,870.2 L871.7,870.6 L873.2,873.1 L874.7,871.4 L876.2,871.0 L877.7,869.2 L879.2,870.8 L880.7,871.3 L882.2,870.8 L883.7,869.1 L885.2,870.7 L886.7,869.5 L888.2,869.4 L889.7,872.2 L891.2,869.9 L892.7,868.6 L894.2,871.4 L895.7,870.1 L897.2,873.5 L898.7,871.3 L900.2,871.8 L901.7,872.1 L903.2,872.2 L904.7,872.8 L906.2,870.9 L907.7,872.6 L909.2,871.6 L910.7,870.9 L912.2,874.0 L913.7,874.4 L915.2,872.6 L916.7,873.0 L918.2,874.4 L919.7,871.8 L921.2,873.1 L922.7,874.4 L924.2,873.2 L925.7,872.8 L927.2,873.1 L928.7,873.1 L930.2,870.9 L931.7,872.7 L933.2,872.3 L934.7,872.5 L936.2,871.2 L937.7,872.0 L939.2,871.8 L940.7,870.6 L942.2,871.0 L943.7,873.5 L945.2,874.6 L946.7,873.8 L948.2,873.2 L949.7,870.9 L951.2,870.5 L952.7,869.5 L954.2,871.6 L955.7,871.2 L957.2,870.1 L958.7,871.3 L960.2,867.6 L961.7,868.9 L963.2,868.5 L964.7,870.8 L966.2,869.8 L967.7,870.2 L969.2,872.8 L970.7,872.3 L972.2,872.8 L973.7,871.3 L975.2,871.3 L976.7,868.9 L978.2,861.5 L979.7,861.4 L981.2,862.0 L982.7,862.5 L984.2,861.6 L985.7,861.4 L987.2,860.2 L988.7,859.2 L990.2,858.3 L991.7,857.8 L993.2,858.6 L994.7,859.3 L996.2,863.0 L997.7,868.6 L999.2,868.6 L1000.7,868.7 L1002.2,868.3 L1003.7,868.2 L1005.2,869.1 L1006.7,868.3 L1008.2,870.5 L1009.7,870.2 L1011.2,869.8 L1012.7,868.8 L1014.2,867.9 L1015.7,870.4 L1017.2,868.9 L1018.7,866.3 L1020.2,868.9 L1021.7,867.1 L1023.2,869.3 L1024.7,870.6 L1026.2,870.5 L1027.7,869.2 L1029.2,870.6 L1030.7,870.7 L1032.2,871.4 L1033.7,869.7 L1035.2,870.6 L1036.7,868.0 L1038.2,867.3 L1039.7,868.6 L1041.2,868.8 L1042.7,869.8 L1044.2,868.2 L1045.7,867.3 L1047.2,869.3 L1048.7,869.7 L1050.2,868.7 L1051.7,871.3 L1053.2,868.4 L1054.7,870.7 L1056.2,869.6 L1057.7,869.9 L1059.2,869.6 L1060.7,870.6 L1062.2,872.7 L1063.7,874.1 L1065.2,872.0 L1066.7,874.0 L1068.2,875.2" fill="none" stroke="#eab839" stroke-width="1.25" stroke-linejoin="round"/>
<path d="M637.7,958.5 L639.7,958.3 L641.7,957.6 L643.7,957.6 L645.7,957.7 L647.7,957.9 L649.7,957.8 L651.7,957.5 L653.7,957.4 L655.7,957.5 L657.7,957.6 L659.7,957.9 L661.7,957.5 L663.7,957.3 L665.7,957.4 L667.7,958.0 L669.7,957.4 L671.7,957.8 L673.7,958.0 L675.7,957.2 L677.7,957.5 L679.7,957.5 L681.7,958.1 L683.7,957.5 L685.7,957.5 L687.7,957.5 L689.7,957.7 L691.7,957.7 L693.7,957.8 L695.7,958.1 L697.7,958.3 L699.7,958.0 L701.7,958.1 L703.7,958.1 L705.7,958.7 L707.7,958.1 L709.7,958.6 L711.7,958.3 L713.7,959.1 L715.7,958.4 L717.7,958.7 L719.7,959.2 L721.7,958.7 L723.7,959.3 L725.7,959.4 L727.7,959.2 L729.7,959.5 L731.7,959.3 L733.7,959.0 L735.7,959.2 L737.7,959.2 L739.7,959.5 L741.7,959.2 L743.7,959.2 L745.7,959.3 L747.7,959.0 L749.7,959.1 L751.7,959.5 L753.7,959.8 L755.7,959.2 L757.7,959.0 L759.7,959.5 L761.7,959.2 L763.7,958.9 L765.7,958.9 L767.7,959.6 L769.7,959.1 L771.7,959.4 L773.7,959.3 L775.7,958.6 L777.7,958.9 L779.7,958.6 L781.7,958.7 L783.7,958.7 L785.7,958.8 L787.7,958.6 L789.7,958.1 L791.7,958.2 L793.7,958.4 L795.7,958.5 L797.7,958.3 L799.7,957.9 L801.7,958.0 L803.7,957.8 L805.7,957.6 L807.7,958.2 L809.7,957.6 L811.7,958.2 L813.7,957.4 L815.7,958.0 L817.7,957.9 L819.7,957.2 L821.7,957.8 L823.7,957.9 L825.7,957.3 L827.7,957.5 L829.7,957.3 L831.7,957.8 L833.7,957.7 L835.7,957.3 L837.7,957.7 L839.7,957.3 L841.7,958.1 L843.7,957.6 L845.7,958.2 L847.7,958.0 L849.7,958.5 L851.7,958.4 L853.7,957.8 L855.7,958.3 L857.7,958.0 L859.7,958.6 L861.7,958.6 L863.7,958.9 L865.7,958.5 L867.7,958.3 L869.7,958.7 L871.7,958.9 L873.7,958.5 L875.7,958.6 L877.7,958.9 L879.7,959.5 L881.7,959.0 L883.7,959.2 L885.7,958.8 L887.7,959.4 L889.7,959.2 L891.7,959.2 L893.7,959.5 L895.7,959.4 L897.7,959.3 L899.7,959.1 L901.7,959.4 L903.7,959.6 L905.7,959.0 L907.7,959.8 L909.7,959.1 L911.7,959.2 L913.7,959.3 L915.7,959.4 L917.7,959.1 L919.7,958.9 L921.7,959.0 L923.7,958.9 L925.7,959.5 L927.7,959.2 L929.7,959.3 L931.7,958.5 L933.7,958.5 L935.7,959.1 L937.7,958.6 L939.7,958.6 L941.7,959.0 L943.7,958.6 L945.7,958.2 L947.7,958.2 L949.7,958.5 L951.7,958.0 L953.7,958.3 L955.7,958.0 L957.7,958.1 L959.7,957.5 L961.7,957.8 L963.7,957.6 L965.7,957.6 L967.7,957.9 L969.7,957.3 L971.7,957.5 L973.7,957.5 L975.7,957.8 L977.7,957.9 L979.7,957.6 L981.7,957.3 L983.7,957.4 L985.7,957.8 L987.7,958.0 L989.7,957.7 L991.7,957.3 L993.7,958.0 L995.7,957.5 L997.7,958.1 L999.7,958.0 L1001.7,958.3 L1003.7,958.1 L1005.7,958.1 L1007.7,957.6 L1009.7,957.7 L1011.7,958.5 L1013.7,958.4 L1015.7,957.9 L1017.7,958.7 L1019.7,958.6 L1021.7,958.6 L1023.7,959.0 L1025.7,958.9 L1027.7,958.9 L1029.7,958.9 L1031.7,958.5 L1033.7,959.2 L1035.7,959.3 L1037.7,958.7 L1039.7,959.2 L1041.7,958.9 L1043.7,959.1 L1045.7,959.0 L1047.7,959.5 L1049.7,959.7 L1051.7,959.2 L1053.7,959.4 L1055.7,959.4 L1057.7,959.3 L1059.7,959.2 L1061.7,959.6 L1063.7,959.6 L1065.7,959.0 L1067.7,959.4 L1067.7,969.9 L637.7,969.9 Z" fill="#6ed0e0" fill-opacity="0.12"/>
<path d="M637.7,958.5 L639.7,958.3 L641.7,957.6 L643.7,957.6 L645.7,957.7 L647.7,957.9 L649.7,957.8 L651.7,957.5 L653.7,957.4 L655.7,957.5 L657.7,957.6 L659.7,957.9 L661.7,957.5 L663.7,957.3 L665.7,957.4 L667.7,958.0 L669.7,957.4 L671.7,957.8 L673.7,958.0 L675.7,957.2 L677.7,957.5 L679.7,957.5 L681.7,958.1 L683.7,957.5 L685.7,957.5 L687.7,957.5 L689.7,957.7 L691.7,957.7 L693.7,957.8 L695.7,958.1 L697.7,958.3 L699.7,958.0 L701.7,958.1 L703.7,958.1 L705.7,958.7 L707.7,958.1 L709.7,958.6 L711.7,958.3 L713.7,959.1 L715.7,958.4 L717.7,958.7 L719.7,959.2 L721.7,958.7 L723.7,959.3 L725.7,959.4 L727.7,959.2 L729.7,959.5 L731.7,959.3 L733.7,959.0 L735.7,959.2 L737.7,959.2 L739.7,959.5 L741.7,959.2 L743.7,959.2 L745.7,959.3 L747.7,959.0 L749.7,959.1 L751.7,959.5 L753.7,959.8 L755.7,959.2 L757.7,959.0 L759.7,959.5 L761.7,959.2 L763.7,958.9 L765.7,958.9 L767.7,959.6 L769.7,959.1 L771.7,959.4 L773.7,959.3 L775.7,958.6 L777.7,958.9 L779.7,958.6 L781.7,958.7 L783.7,958.7 L785.7,958.8 L787.7,958.6 L789.7,958.1 L791.7,958.2 L793.7,958.4 L795.7,958.5 L797.7,958.3 L799.7,957.9 L801.7,958.0 L803.7,957.8 L805.7,957.6 L807.7,958.2 L809.7,957.6 L811.7,958.2 L813.7,957.4 L815.7,958.0 L817.7,957.9 L819.7,957.2 L821.7,957.8 L823.7,957.9 L825.7,957.3 L827.7,957.5 L829.7,957.3 L831.7,957.8 L833.7,957.7 L835.7,957.3 L837.7,957.7 L839.7,957.3 L841.7,958.1 L843.7,957.6 L845.7,958.2 L847.7,958.0 L849.7,958.5 L851.7,958.4 L853.7,957.8 L855.7,958.3 L857.7,958.0 L859.7,958.6 L861.7,958.6 L863.7,958.9 L865.7,958.5 L867.7,958.3 L869.7,958.7 L871.7,958.9 L873.7,958.5 L875.7,958.6 L877.7,958.9 L879.7,959.5 L881.7,959.0 L883.7,959.2 L885.7,958.8 L887.7,959.4 L889.7,959.2 L891.7,959.2 L893.7,959.5 L895.7,959.4 L897.7,959.3 L899.7,959.1 L901.7,959.4 L903.7,959.6 L905.7,959.0 L907.7,959.8 L909.7,959.1 L911.7,959.2 L913.7,959.3 L915.7,959.4 L917.7,959.1 L919.7,958.9 L921.7,959.0 L923.7,958.9 L925.7,959.5 L927.7,959.2 L929.7,959.3 L931.7,958.5 L933.7,958.5 L935.7,959.1 L937.7,958.6 L939.7,958.6 L941.7,959.0 L943.7,958.6 L945.7,958.2 L947.7,958.2 L949.7,958.5 L951.7,958.0 L953.7,958.3 L955.7,958.0 L957.7,958.1 L959.7,957.5 L961.7,957.8 L963.7,957.6 L965.7,957.6 L967.7,957.9 L969.7,957.3 L971.7,957.5 L973.7,957.5 L975.7,957.8 L977.7,957.9 L979.7,957.6 L981.7,957.3 L983.7,957.4 L985.7,957.8 L987.7,958.0 L989.7,957.7 L991.7,957.3 L993.7,958.0 L995.7,957.5 L997.7,958.1 L999.7,958.0 L1001.7,958.3 L1003.7,958.1 L1005.7,958.1 L1007.7,957.6 L1009.7,957.7 L1011.7,958.5 L1013.7,958.4 L1015.7,957.9 L1017.7,958.7 L1019.7,958.6 L1021.7,958.6 L1023.7,959.0 L1025.7,958.9 L1027.7,958.9 L1029.7,958.9 L1031.7,958.5 L1033.7,959.2 L1035.7,959.3 L1037.7,958.7 L1039.7,959.2 L1041.7,958.9 L1043.7,959.1 L1045.7,959.0 L1047.7,959.5 L1049.7,959.7 L1051.7,959.2 L1053.7,959.4 L1055.7,959.4 L1057.7,959.3 L1059.7,959.2 L1061.7,959.6 L1063.7,959.6 L1065.7,959.0 L1067.7,959.4" fill="none" stroke="#6ed0e0" stroke-width="1.25" stroke-linejoin="round"/>
<path d="M637.7,967.4 L1068.8,967.4" fill="none" stroke="#e24d42" stroke-width="1.5" stroke-linejoin="round"/>
<path d="M637.7,969.3 L1068.8,969.3" fill="none" stroke="#7eb26d" stroke-width="1.5" stroke-linejoin="round"/>
<rect x="1110.5" y="742.5" width="504" height="277" rx="3" fill="#141619" stroke="#202226" stroke-width="1"/>
<text x="1362.5" y="767" font-size="17.5" fill="#d8d9da" text-anchor="middle" font-weight="400" stroke="#d8d9da" stroke-width="0.5" >APIServer Requests by Verb</text>
<line x1="1153" y1="970.5" x2="1584" y2="970.5" stroke="rgba(255,255,255,0.17)" stroke-width="1"/>
<text x="1147" y="973.8" font-size="15" fill="#c7d0d9" text-anchor="end" font-weight="400" stroke="#c7d0d9" stroke-width="0.25" >0</text>
<line x1="1153" y1="927.5" x2="1584" y2="927.5" stroke="rgba(255,255,255,0.17)" stroke-width="1"/>
<text x="1147" y="930.9749999999999" font-size="15" fill="#c7d0d9" text-anchor="end" font-weight="400" stroke="#c7d0d9" stroke-width="0.25" >25</text>
<line x1="1153" y1="884.5" x2="1584" y2="884.5" stroke="rgba(255,255,255,0.17)" stroke-width="1"/>
<text x="1147" y="888.15" font-size="15" fill="#c7d0d9" text-anchor="end" font-weight="400" stroke="#c7d0d9" stroke-width="0.25" >50</text>
<line x1="1153" y1="842.5" x2="1584" y2="842.5" stroke="rgba(255,255,255,0.17)" stroke-width="1"/>
<text x="1147" y="845.3249999999999" font-size="15" fill="#c7d0d9" text-anchor="end" font-weight="400" stroke="#c7d0d9" stroke-width="0.25" >75</text>
<line x1="1153" y1="799.5" x2="1584" y2="799.5" stroke="rgba(255,255,255,0.17)" stroke-width="1"/>
<text x="1147" y="802.4999999999999" font-size="15" fill="#c7d0d9" text-anchor="end" font-weight="400" stroke="#c7d0d9" stroke-width="0.25" >100</text>
<line x1="1251.5" y1="799" x2="1251.5" y2="971" stroke="rgba(255,255,255,0.17)" stroke-width="1"/>
<text x="1251.7" y="992" font-size="15" fill="#c7d0d9" text-anchor="middle" font-weight="400" stroke="#c7d0d9" stroke-width="0.25" >13:00</text>
<line x1="1394.5" y1="799" x2="1394.5" y2="971" stroke="rgba(255,255,255,0.17)" stroke-width="1"/>
<text x="1394.3" y="992" font-size="15" fill="#c7d0d9" text-anchor="middle" font-weight="400" stroke="#c7d0d9" stroke-width="0.25" >14:00</text>
<line x1="1537.5" y1="799" x2="1537.5" y2="971" stroke="rgba(255,255,255,0.17)" stroke-width="1"/>
<text x="1537.7" y="992" font-size="15" fill="#c7d0d9" text-anchor="middle" font-weight="400" stroke="#c7d0d9" stroke-width="0.25" >15:00</text>
<path d="M1153.4,862.5 L1155.6,857.2 L1157.8,863.0 L1160.0,855.1 L1162.2,866.3 L1164.4,854.2 L1166.6,858.2 L1168.8,861.5 L1171.0,852.5 L1173.2,862.9 L1175.4,863.2 L1177.6,865.9 L1179.8,858.5 L1182.0,855.3 L1184.2,856.5 L1186.4,860.6 L1188.6,854.5 L1190.8,865.2 L1193.0,862.2 L1195.2,857.0 L1197.4,852.1 L1199.6,857.2 L1201.8,856.3 L1204.0,855.0 L1206.2,860.9 L1208.4,852.5 L1210.6,855.5 L1212.8,861.7 L1215.0,860.9 L1217.2,854.5 L1219.4,861.6 L1221.6,864.1 L1223.8,853.5 L1226.0,858.8 L1228.2,858.9 L1230.4,856.6 L1232.6,853.1 L1234.8,864.9 L1237.0,861.7 L1239.2,865.9 L1241.4,860.6 L1243.6,859.2 L1245.8,853.8 L1248.0,856.7 L1250.2,858.1 L1252.4,860.7 L1254.6,858.1 L1256.8,862.7 L1259.0,853.9 L1261.2,854.8 L1263.4,854.0 L1265.6,864.6 L1267.8,856.6 L1270.0,855.3 L1272.2,859.2 L1274.4,853.1 L1276.6,853.1 L1278.8,855.5 L1281.0,854.3 L1283.2,857.0 L1285.4,853.4 L1287.6,864.9 L1289.8,856.1 L1292.0,856.1 L1294.2,857.5 L1296.4,862.7 L1298.6,865.9 L1300.8,857.7 L1303.0,854.3 L1305.2,862.8 L1307.4,863.7 L1309.6,863.5 L1311.8,865.5 L1314.0,856.5 L1316.2,851.9 L1318.4,854.6 L1320.6,861.4 L1322.8,856.2 L1325.0,865.9 L1327.2,854.0 L1329.4,862.0 L1331.6,866.9 L1333.8,857.3 L1336.0,864.8 L1338.2,862.7 L1340.4,866.1 L1342.6,860.1 L1344.8,858.4 L1347.0,854.5 L1349.2,866.4 L1351.4,854.2 L1353.6,865.3 L1355.8,863.5 L1358.0,857.3 L1360.2,861.7 L1362.4,861.9 L1364.6,858.2 L1366.8,863.6 L1369.0,854.7 L1371.2,863.7 L1373.4,854.0 L1375.6,854.5 L1377.8,858.7 L1380.0,866.5 L1382.2,855.0 L1384.4,866.5 L1386.6,859.2 L1388.8,860.4 L1391.0,866.0 L1393.2,857.3 L1395.4,855.8 L1397.6,857.9 L1399.8,860.8 L1402.0,859.1 L1404.2,857.9 L1406.4,863.5 L1408.6,853.6 L1410.8,851.6 L1413.0,854.6 L1415.2,852.1 L1417.4,861.9 L1419.6,851.8 L1421.8,865.9 L1424.0,859.6 L1426.2,864.9 L1428.4,860.0 L1430.6,856.4 L1432.8,856.0 L1435.0,860.0 L1437.2,861.7 L1439.4,864.0 L1441.6,860.8 L1443.8,862.6 L1446.0,864.0 L1448.2,855.6 L1450.4,859.0 L1452.6,860.2 L1454.8,863.9 L1457.0,856.1 L1459.2,863.9 L1461.4,862.9 L1463.6,858.3 L1465.8,856.2 L1468.0,852.0 L1470.2,855.4 L1472.4,852.3 L1474.6,852.8 L1476.8,855.8 L1479.0,855.9 L1481.2,866.0 L1483.4,863.8 L1485.6,866.8 L1487.8,853.6 L1490.0,836.0 L1492.2,828.4 L1494.4,825.7 L1496.6,833.2 L1498.8,843.8 L1501.0,843.8 L1503.2,851.7 L1505.4,862.2 L1507.6,866.3 L1509.8,864.3 L1512.0,861.5 L1514.2,853.1 L1516.4,854.6 L1518.6,859.9 L1520.8,865.4 L1523.0,865.3 L1525.2,864.6 L1527.4,855.0 L1529.6,859.7 L1531.8,851.7 L1534.0,852.9 L1536.2,854.7 L1538.4,859.6 L1540.6,854.3 L1542.8,865.0 L1545.0,865.3 L1547.2,858.3 L1549.4,859.1 L1551.6,863.7 L1553.8,863.1 L1556.0,866.6 L1558.2,853.0 L1560.4,856.0 L1562.6,852.4 L1564.8,851.8 L1567.0,860.2 L1569.2,855.7 L1571.4,861.0 L1573.6,854.4 L1575.8,854.0 L1578.0,864.9 L1580.2,866.8 L1582.4,863.7 L1582.4,970.6 L1153.4,970.6 Z" fill="#6ed0e0" fill-opacity="0.1"/>
<path d="M1153.4,862.5 L1155.6,857.2 L1157.8,863.0 L1160.0,855.1 L1162.2,866.3 L1164.4,854.2 L1166.6,858.2 L1168.8,861.5 L1171.0,852.5 L1173.2,862.9 L1175.4,863.2 L1177.6,865.9 L1179.8,858.5 L1182.0,855.3 L1184.2,856.5 L1186.4,860.6 L1188.6,854.5 L1190.8,865.2 L1193.0,862.2 L1195.2,857.0 L1197.4,852.1 L1199.6,857.2 L1201.8,856.3 L1204.0,855.0 L1206.2,860.9 L1208.4,852.5 L1210.6,855.5 L1212.8,861.7 L1215.0,860.9 L1217.2,854.5 L1219.4,861.6 L1221.6,864.1 L1223.8,853.5 L1226.0,858.8 L1228.2,858.9 L1230.4,856.6 L1232.6,853.1 L1234.8,864.9 L1237.0,861.7 L1239.2,865.9 L1241.4,860.6 L1243.6,859.2 L1245.8,853.8 L1248.0,856.7 L1250.2,858.1 L1252.4,860.7 L1254.6,858.1 L1256.8,862.7 L1259.0,853.9 L1261.2,854.8 L1263.4,854.0 L1265.6,864.6 L1267.8,856.6 L1270.0,855.3 L1272.2,859.2 L1274.4,853.1 L1276.6,853.1 L1278.8,855.5 L1281.0,854.3 L1283.2,857.0 L1285.4,853.4 L1287.6,864.9 L1289.8,856.1 L1292.0,856.1 L1294.2,857.5 L1296.4,862.7 L1298.6,865.9 L1300.8,857.7 L1303.0,854.3 L1305.2,862.8 L1307.4,863.7 L1309.6,863.5 L1311.8,865.5 L1314.0,856.5 L1316.2,851.9 L1318.4,854.6 L1320.6,861.4 L1322.8,856.2 L1325.0,865.9 L1327.2,854.0 L1329.4,862.0 L1331.6,866.9 L1333.8,857.3 L1336.0,864.8 L1338.2,862.7 L1340.4,866.1 L1342.6,860.1 L1344.8,858.4 L1347.0,854.5 L1349.2,866.4 L1351.4,854.2 L1353.6,865.3 L1355.8,863.5 L1358.0,857.3 L1360.2,861.7 L1362.4,861.9 L1364.6,858.2 L1366.8,863.6 L1369.0,854.7 L1371.2,863.7 L1373.4,854.0 L1375.6,854.5 L1377.8,858.7 L1380.0,866.5 L1382.2,855.0 L1384.4,866.5 L1386.6,859.2 L1388.8,860.4 L1391.0,866.0 L1393.2,857.3 L1395.4,855.8 L1397.6,857.9 L1399.8,860.8 L1402.0,859.1 L1404.2,857.9 L1406.4,863.5 L1408.6,853.6 L1410.8,851.6 L1413.0,854.6 L1415.2,852.1 L1417.4,861.9 L1419.6,851.8 L1421.8,865.9 L1424.0,859.6 L1426.2,864.9 L1428.4,860.0 L1430.6,856.4 L1432.8,856.0 L1435.0,860.0 L1437.2,861.7 L1439.4,864.0 L1441.6,860.8 L1443.8,862.6 L1446.0,864.0 L1448.2,855.6 L1450.4,859.0 L1452.6,860.2 L1454.8,863.9 L1457.0,856.1 L1459.2,863.9 L1461.4,862.9 L1463.6,858.3 L1465.8,856.2 L1468.0,852.0 L1470.2,855.4 L1472.4,852.3 L1474.6,852.8 L1476.8,855.8 L1479.0,855.9 L1481.2,866.0 L1483.4,863.8 L1485.6,866.8 L1487.8,853.6 L1490.0,836.0 L1492.2,828.4 L1494.4,825.7 L1496.6,833.2 L1498.8,843.8 L1501.0,843.8 L1503.2,851.7 L1505.4,862.2 L1507.6,866.3 L1509.8,864.3 L1512.0,861.5 L1514.2,853.1 L1516.4,854.6 L1518.6,859.9 L1520.8,865.4 L1523.0,865.3 L1525.2,864.6 L1527.4,855.0 L1529.6,859.7 L1531.8,851.7 L1534.0,852.9 L1536.2,854.7 L1538.4,859.6 L1540.6,854.3 L1542.8,865.0 L1545.0,865.3 L1547.2,858.3 L1549.4,859.1 L1551.6,863.7 L1553.8,863.1 L1556.0,866.6 L1558.2,853.0 L1560.4,856.0 L1562.6,852.4 L1564.8,851.8 L1567.0,860.2 L1569.2,855.7 L1571.4,861.0 L1573.6,854.4 L1575.8,854.0 L1578.0,864.9 L1580.2,866.8 L1582.4,863.7" fill="none" stroke="#6ed0e0" stroke-width="1.25" stroke-linejoin="round"/>
<path d="M1153.4,948.9 L1155.9,949.5 L1158.4,950.6 L1160.9,948.0 L1163.4,948.1 L1165.9,949.0 L1168.4,950.3 L1170.9,947.6 L1173.4,948.7 L1175.9,950.1 L1178.4,949.4 L1180.9,948.4 L1183.4,947.6 L1185.9,948.9 L1188.4,948.5 L1190.9,949.8 L1193.4,949.8 L1195.9,947.8 L1198.4,949.4 L1200.9,950.4 L1203.4,948.9 L1205.9,950.5 L1208.4,950.3 L1210.9,949.6 L1213.4,949.3 L1215.9,949.2 L1218.4,949.1 L1220.9,950.1 L1223.4,951.3 L1225.9,949.4 L1228.4,951.6 L1230.9,950.4 L1233.4,950.7 L1235.9,949.9 L1238.4,949.9 L1240.9,951.5 L1243.4,950.3 L1245.9,950.2 L1248.4,951.0 L1250.9,952.1 L1253.4,949.8 L1255.9,950.8 L1258.4,952.5 L1260.9,952.0 L1263.4,949.7 L1265.9,952.1 L1268.4,951.6 L1270.9,950.4 L1273.4,950.3 L1275.9,950.9 L1278.4,950.5 L1280.9,952.7 L1283.4,952.4 L1285.9,949.7 L1288.4,950.2 L1290.9,952.5 L1293.4,952.4 L1295.9,951.7 L1298.4,949.5 L1300.9,951.6 L1303.4,950.1 L1305.9,949.3 L1308.4,950.1 L1310.9,949.1 L1313.4,951.0 L1315.9,951.3 L1318.4,951.6 L1320.9,949.2 L1323.4,951.1 L1325.9,948.3 L1328.4,949.0 L1330.9,950.6 L1333.4,948.5 L1335.9,950.4 L1338.4,949.3 L1340.9,950.5 L1343.4,948.3 L1345.9,947.9 L1348.4,947.7 L1350.9,950.5 L1353.4,947.8 L1355.9,948.7 L1358.4,947.9 L1360.9,948.8 L1363.4,948.4 L1365.9,948.5 L1368.4,947.9 L1370.9,950.1 L1373.4,950.2 L1375.9,948.7 L1378.4,949.5 L1380.9,949.3 L1383.4,950.5 L1385.9,948.3 L1388.4,950.6 L1390.9,948.2 L1393.4,948.3 L1395.9,949.5 L1398.4,950.6 L1400.9,949.1 L1403.4,950.5 L1405.9,949.9 L1408.4,951.0 L1410.9,948.5 L1413.4,949.9 L1415.9,950.6 L1418.4,951.5 L1420.9,949.6 L1423.4,949.4 L1425.9,949.5 L1428.4,951.9 L1430.9,951.1 L1433.4,951.4 L1435.9,950.1 L1438.4,952.0 L1440.9,950.7 L1443.4,949.6 L1445.9,950.3 L1448.4,952.7 L1450.9,952.5 L1453.4,952.4 L1455.9,950.7 L1458.4,951.0 L1460.9,951.2 L1463.4,951.4 L1465.9,951.5 L1468.4,950.9 L1470.9,950.8 L1473.4,949.9 L1475.9,950.4 L1478.4,950.2 L1480.9,949.7 L1483.4,949.9 L1485.9,950.2 L1488.4,952.2 L1490.9,950.2 L1493.4,949.5 L1495.9,950.7 L1498.4,949.3 L1500.9,951.3 L1503.4,948.9 L1505.9,950.3 L1508.4,949.4 L1510.9,950.7 L1513.4,950.4 L1515.9,950.2 L1518.4,950.2 L1520.9,950.8 L1523.4,949.6 L1525.9,947.9 L1528.4,948.8 L1530.9,947.9 L1533.4,948.3 L1535.9,948.0 L1538.4,947.5 L1540.9,948.2 L1543.4,949.6 L1545.9,949.6 L1548.4,949.1 L1550.9,950.3 L1553.4,949.6 L1555.9,947.6 L1558.4,947.5 L1560.9,949.4 L1563.4,948.0 L1565.9,948.0 L1568.4,947.7 L1570.9,948.1 L1573.4,948.9 L1575.9,950.3 L1578.4,948.2 L1580.9,949.8 L1583.4,948.9 L1583.4,970.6 L1153.4,970.6 Z" fill="#d683ce" fill-opacity="0.08"/>
<path d="M1153.4,948.9 L1155.9,949.5 L1158.4,950.6 L1160.9,948.0 L1163.4,948.1 L1165.9,949.0 L1168.4,950.3 L1170.9,947.6 L1173.4,948.7 L1175.9,950.1 L1178.4,949.4 L1180.9,948.4 L1183.4,947.6 L1185.9,948.9 L1188.4,948.5 L1190.9,949.8 L1193.4,949.8 L1195.9,947.8 L1198.4,949.4 L1200.9,950.4 L1203.4,948.9 L1205.9,950.5 L1208.4,950.3 L1210.9,949.6 L1213.4,949.3 L1215.9,949.2 L1218.4,949.1 L1220.9,950.1 L1223.4,951.3 L1225.9,949.4 L1228.4,951.6 L1230.9,950.4 L1233.4,950.7 L1235.9,949.9 L1238.4,949.9 L1240.9,951.5 L1243.4,950.3 L1245.9,950.2 L1248.4,951.0 L1250.9,952.1 L1253.4,949.8 L1255.9,950.8 L1258.4,952.5 L1260.9,952.0 L1263.4,949.7 L1265.9,952.1 L1268.4,951.6 L1270.9,950.4 L1273.4,950.3 L1275.9,950.9 L1278.4,950.5 L1280.9,952.7 L1283.4,952.4 L1285.9,949.7 L1288.4,950.2 L1290.9,952.5 L1293.4,952.4 L1295.9,951.7 L1298.4,949.5 L1300.9,951.6 L1303.4,950.1 L1305.9,949.3 L1308.4,950.1 L1310.9,949.1 L1313.4,951.0 L1315.9,951.3 L1318.4,951.6 L1320.9,949.2 L1323.4,951.1 L1325.9,948.3 L1328.4,949.0 L1330.9,950.6 L1333.4,948.5 L1335.9,950.4 L1338.4,949.3 L1340.9,950.5 L1343.4,948.3 L1345.9,947.9 L1348.4,947.7 L1350.9,950.5 L1353.4,947.8 L1355.9,948.7 L1358.4,947.9 L1360.9,948.8 L1363.4,948.4 L1365.9,948.5 L1368.4,947.9 L1370.9,950.1 L1373.4,950.2 L1375.9,948.7 L1378.4,949.5 L1380.9,949.3 L1383.4,950.5 L1385.9,948.3 L1388.4,950.6 L1390.9,948.2 L1393.4,948.3 L1395.9,949.5 L1398.4,950.6 L1400.9,949.1 L1403.4,950.5 L1405.9,949.9 L1408.4,951.0 L1410.9,948.5 L1413.4,949.9 L1415.9,950.6 L1418.4,951.5 L1420.9,949.6 L1423.4,949.4 L1425.9,949.5 L1428.4,951.9 L1430.9,951.1 L1433.4,951.4 L1435.9,950.1 L1438.4,952.0 L1440.9,950.7 L1443.4,949.6 L1445.9,950.3 L1448.4,952.7 L1450.9,952.5 L1453.4,952.4 L1455.9,950.7 L1458.4,951.0 L1460.9,951.2 L1463.4,951.4 L1465.9,951.5 L1468.4,950.9 L1470.9,950.8 L1473.4,949.9 L1475.9,950.4 L1478.4,950.2 L1480.9,949.7 L1483.4,949.9 L1485.9,950.2 L1488.4,952.2 L1490.9,950.2 L1493.4,949.5 L1495.9,950.7 L1498.4,949.3 L1500.9,951.3 L1503.4,948.9 L1505.9,950.3 L1508.4,949.4 L1510.9,950.7 L1513.4,950.4 L1515.9,950.2 L1518.4,950.2 L1520.9,950.8 L1523.4,949.6 L1525.9,947.9 L1528.4,948.8 L1530.9,947.9 L1533.4,948.3 L1535.9,948.0 L1538.4,947.5 L1540.9,948.2 L1543.4,949.6 L1545.9,949.6 L1548.4,949.1 L1550.9,950.3 L1553.4,949.6 L1555.9,947.6 L1558.4,947.5 L1560.9,949.4 L1563.4,948.0 L1565.9,948.0 L1568.4,947.7 L1570.9,948.1 L1573.4,948.9 L1575.9,950.3 L1578.4,948.2 L1580.9,949.8 L1583.4,948.9" fill="none" stroke="#d683ce" stroke-width="1.3" stroke-linejoin="round"/>
<path d="M1153.4,953.1 L1155.9,952.6 L1158.4,951.3 L1160.9,953.5 L1163.4,952.4 L1165.9,952.1 L1168.4,952.3 L1170.9,951.2 L1173.4,952.6 L1175.9,951.2 L1178.4,951.9 L1180.9,951.1 L1183.4,953.5 L1185.9,953.2 L1188.4,953.0 L1190.9,951.4 L1193.4,953.8 L1195.9,953.2 L1198.4,952.0 L1200.9,951.3 L1203.4,953.6 L1205.9,953.0 L1208.4,952.4 L1210.9,952.4 L1213.4,952.4 L1215.9,952.4 L1218.4,953.9 L1220.9,954.0 L1223.4,954.7 L1225.9,953.0 L1228.4,954.4 L1230.9,954.3 L1233.4,952.5 L1235.9,953.5 L1238.4,953.7 L1240.9,953.6 L1243.4,953.8 L1245.9,953.6 L1248.4,954.8 L1250.9,955.5 L1253.4,955.5 L1255.9,955.7 L1258.4,954.8 L1260.9,955.5 L1263.4,955.6 L1265.9,954.6 L1268.4,953.3 L1270.9,954.1 L1273.4,955.2 L1275.9,953.8 L1278.4,955.4 L1280.9,955.6 L1283.4,955.0 L1285.9,954.7 L1288.4,953.9 L1290.9,954.5 L1293.4,953.7 L1295.9,955.4 L1298.4,953.0 L1300.9,954.5 L1303.4,953.1 L1305.9,955.2 L1308.4,953.0 L1310.9,954.5 L1313.4,952.7 L1315.9,952.8 L1318.4,953.0 L1320.9,954.0 L1323.4,954.7 L1325.9,954.1 L1328.4,952.0 L1330.9,954.0 L1333.4,952.5 L1335.9,952.7 L1338.4,952.4 L1340.9,953.6 L1343.4,953.7 L1345.9,953.7 L1348.4,951.2 L1350.9,952.8 L1353.4,952.1 L1355.9,952.3 L1358.4,953.2 L1360.9,953.6 L1363.4,953.7 L1365.9,951.4 L1368.4,953.4 L1370.9,951.1 L1373.4,952.8 L1375.9,951.8 L1378.4,953.4 L1380.9,951.7 L1383.4,953.2 L1385.9,953.0 L1388.4,952.6 L1390.9,953.8 L1393.4,953.5 L1395.9,952.0 L1398.4,953.5 L1400.9,953.3 L1403.4,952.4 L1405.9,953.9 L1408.4,954.1 L1410.9,954.1 L1413.4,953.8 L1415.9,953.9 L1418.4,953.3 L1420.9,953.8 L1423.4,952.8 L1425.9,955.1 L1428.4,953.5 L1430.9,953.1 L1433.4,954.9 L1435.9,955.5 L1438.4,954.4 L1440.9,955.4 L1443.4,954.5 L1445.9,953.9 L1448.4,955.6 L1450.9,955.6 L1453.4,954.6 L1455.9,955.4 L1458.4,955.3 L1460.9,954.7 L1463.4,955.6 L1465.9,955.7 L1468.4,954.9 L1470.9,954.6 L1473.4,953.3 L1475.9,954.3 L1478.4,955.6 L1480.9,955.1 L1483.4,953.6 L1485.9,954.0 L1488.4,953.1 L1490.9,952.8 L1493.4,953.0 L1495.9,955.0 L1498.4,952.6 L1500.9,953.7 L1503.4,954.3 L1505.9,954.4 L1508.4,952.5 L1510.9,954.2 L1513.4,954.4 L1515.9,953.8 L1518.4,951.9 L1520.9,953.1 L1523.4,952.3 L1525.9,954.0 L1528.4,952.9 L1530.9,953.2 L1533.4,953.5 L1535.9,952.1 L1538.4,952.9 L1540.9,953.5 L1543.4,951.1 L1545.9,952.5 L1548.4,953.3 L1550.9,953.7 L1553.4,952.0 L1555.9,952.3 L1558.4,953.7 L1560.9,952.5 L1563.4,951.8 L1565.9,952.3 L1568.4,953.2 L1570.9,952.5 L1573.4,952.3 L1575.9,952.2 L1578.4,953.7 L1580.9,951.9 L1583.4,951.6 L1583.4,970.6 L1153.4,970.6 Z" fill="#447ebc" fill-opacity="0.08"/>
<path d="M1153.4,953.1 L1155.9,952.6 L1158.4,951.3 L1160.9,953.5 L1163.4,952.4 L1165.9,952.1 L1168.4,952.3 L1170.9,951.2 L1173.4,952.6 L1175.9,951.2 L1178.4,951.9 L1180.9,951.1 L1183.4,953.5 L1185.9,953.2 L1188.4,953.0 L1190.9,951.4 L1193.4,953.8 L1195.9,953.2 L1198.4,952.0 L1200.9,951.3 L1203.4,953.6 L1205.9,953.0 L1208.4,952.4 L1210.9,952.4 L1213.4,952.4 L1215.9,952.4 L1218.4,953.9 L1220.9,954.0 L1223.4,954.7 L1225.9,953.0 L1228.4,954.4 L1230.9,954.3 L1233.4,952.5 L1235.9,953.5 L1238.4,953.7 L1240.9,953.6 L1243.4,953.8 L1245.9,953.6 L1248.4,954.8 L1250.9,955.5 L1253.4,955.5 L1255.9,955.7 L1258.4,954.8 L1260.9,955.5 L1263.4,955.6 L1265.9,954.6 L1268.4,953.3 L1270.9,954.1 L1273.4,955.2 L1275.9,953.8 L1278.4,955.4 L1280.9,955.6 L1283.4,955.0 L1285.9,954.7 L1288.4,953.9 L1290.9,954.5 L1293.4,953.7 L1295.9,955.4 L1298.4,953.0 L1300.9,954.5 L1303.4,953.1 L1305.9,955.2 L1308.4,953.0 L1310.9,954.5 L1313.4,952.7 L1315.9,952.8 L1318.4,953.0 L1320.9,954.0 L1323.4,954.7 L1325.9,954.1 L1328.4,952.0 L1330.9,954.0 L1333.4,952.5 L1335.9,952.7 L1338.4,952.4 L1340.9,953.6 L1343.4,953.7 L1345.9,953.7 L1348.4,951.2 L1350.9,952.8 L1353.4,952.1 L1355.9,952.3 L1358.4,953.2 L1360.9,953.6 L1363.4,953.7 L1365.9,951.4 L1368.4,953.4 L1370.9,951.1 L1373.4,952.8 L1375.9,951.8 L1378.4,953.4 L1380.9,951.7 L1383.4,953.2 L1385.9,953.0 L1388.4,952.6 L1390.9,953.8 L1393.4,953.5 L1395.9,952.0 L1398.4,953.5 L1400.9,953.3 L1403.4,952.4 L1405.9,953.9 L1408.4,954.1 L1410.9,954.1 L1413.4,953.8 L1415.9,953.9 L1418.4,953.3 L1420.9,953.8 L1423.4,952.8 L1425.9,955.1 L1428.4,953.5 L1430.9,953.1 L1433.4,954.9 L1435.9,955.5 L1438.4,954.4 L1440.9,955.4 L1443.4,954.5 L1445.9,953.9 L1448.4,955.6 L1450.9,955.6 L1453.4,954.6 L1455.9,955.4 L1458.4,955.3 L1460.9,954.7 L1463.4,955.6 L1465.9,955.7 L1468.4,954.9 L1470.9,954.6 L1473.4,953.3 L1475.9,954.3 L1478.4,955.6 L1480.9,955.1 L1483.4,953.6 L1485.9,954.0 L1488.4,953.1 L1490.9,952.8 L1493.4,953.0 L1495.9,955.0 L1498.4,952.6 L1500.9,953.7 L1503.4,954.3 L1505.9,954.4 L1508.4,952.5 L1510.9,954.2 L1513.4,954.4 L1515.9,953.8 L1518.4,951.9 L1520.9,953.1 L1523.4,952.3 L1525.9,954.0 L1528.4,952.9 L1530.9,953.2 L1533.4,953.5 L1535.9,952.1 L1538.4,952.9 L1540.9,953.5 L1543.4,951.1 L1545.9,952.5 L1548.4,953.3 L1550.9,953.7 L1553.4,952.0 L1555.9,952.3 L1558.4,953.7 L1560.9,952.5 L1563.4,951.8 L1565.9,952.3 L1568.4,953.2 L1570.9,952.5 L1573.4,952.3 L1575.9,952.2 L1578.4,953.7 L1580.9,951.9 L1583.4,951.6" fill="none" stroke="#447ebc" stroke-width="1.3" stroke-linejoin="round"/>
<path d="M1153.4,956.0 L1155.9,955.8 L1158.4,956.6 L1160.9,955.6 L1163.4,956.8 L1165.9,956.7 L1168.4,956.1 L1170.9,955.5 L1173.4,956.9 L1175.9,956.7 L1178.4,957.0 L1180.9,956.3 L1183.4,956.8 L1185.9,956.8 L1188.4,955.8 L1190.9,956.1 L1193.4,955.5 L1195.9,956.5 L1198.4,956.1 L1200.9,957.2 L1203.4,955.7 L1205.9,956.9 L1208.4,956.6 L1210.9,956.6 L1213.4,955.9 L1215.9,956.7 L1218.4,955.9 L1220.9,956.6 L1223.4,957.3 L1225.9,956.3 L1228.4,957.5 L1230.9,956.2 L1233.4,957.2 L1235.9,957.6 L1238.4,956.4 L1240.9,957.5 L1243.4,957.4 L1245.9,957.6 L1248.4,957.1 L1250.9,958.2 L1253.4,957.7 L1255.9,958.1 L1258.4,956.9 L1260.9,958.4 L1263.4,957.4 L1265.9,958.0 L1268.4,957.7 L1270.9,957.5 L1273.4,957.2 L1275.9,958.2 L1278.4,958.0 L1280.9,958.2 L1283.4,956.7 L1285.9,958.1 L1288.4,958.1 L1290.9,957.4 L1293.4,957.3 L1295.9,956.7 L1298.4,958.1 L1300.9,957.7 L1303.4,957.8 L1305.9,957.0 L1308.4,957.2 L1310.9,957.2 L1313.4,956.4 L1315.9,956.7 L1318.4,956.3 L1320.9,956.1 L1323.4,957.2 L1325.9,956.0 L1328.4,956.9 L1330.9,957.4 L1333.4,955.9 L1335.9,957.2 L1338.4,957.3 L1340.9,956.8 L1343.4,956.8 L1345.9,955.6 L1348.4,955.7 L1350.9,956.4 L1353.4,956.2 L1355.9,955.7 L1358.4,955.7 L1360.9,956.0 L1363.4,956.2 L1365.9,956.9 L1368.4,956.7 L1370.9,955.9 L1373.4,956.1 L1375.9,955.7 L1378.4,955.6 L1380.9,955.5 L1383.4,956.8 L1385.9,957.1 L1388.4,955.7 L1390.9,956.3 L1393.4,957.0 L1395.9,956.2 L1398.4,957.0 L1400.9,957.1 L1403.4,956.9 L1405.9,956.7 L1408.4,956.5 L1410.9,957.6 L1413.4,956.5 L1415.9,956.7 L1418.4,957.1 L1420.9,956.8 L1423.4,956.6 L1425.9,958.0 L1428.4,957.3 L1430.9,957.0 L1433.4,957.0 L1435.9,957.1 L1438.4,957.9 L1440.9,956.6 L1443.4,957.0 L1445.9,958.0 L1448.4,957.6 L1450.9,956.8 L1453.4,958.1 L1455.9,957.7 L1458.4,956.8 L1460.9,956.9 L1463.4,958.0 L1465.9,957.2 L1468.4,957.8 L1470.9,957.3 L1473.4,957.1 L1475.9,958.1 L1478.4,957.9 L1480.9,957.9 L1483.4,957.8 L1485.9,958.2 L1488.4,957.9 L1490.9,957.4 L1493.4,957.4 L1495.9,957.9 L1498.4,957.0 L1500.9,956.3 L1503.4,956.9 L1505.9,957.2 L1508.4,956.5 L1510.9,956.9 L1513.4,957.3 L1515.9,956.7 L1518.4,957.5 L1520.9,956.3 L1523.4,957.1 L1525.9,956.7 L1528.4,955.7 L1530.9,956.0 L1533.4,955.8 L1535.9,956.1 L1538.4,956.1 L1540.9,955.9 L1543.4,955.5 L1545.9,956.8 L1548.4,955.8 L1550.9,956.6 L1553.4,956.6 L1555.9,955.7 L1558.4,956.0 L1560.9,955.6 L1563.4,955.6 L1565.9,956.1 L1568.4,956.8 L1570.9,957.1 L1573.4,956.3 L1575.9,956.0 L1578.4,956.8 L1580.9,957.2 L1583.4,957.3 L1583.4,970.6 L1153.4,970.6 Z" fill="#806eb7" fill-opacity="0.08"/>
<path d="M1153.4,956.0 L1155.9,955.8 L1158.4,956.6 L1160.9,955.6 L1163.4,956.8 L1165.9,956.7 L1168.4,956.1 L1170.9,955.5 L1173.4,956.9 L1175.9,956.7 L1178.4,957.0 L1180.9,956.3 L1183.4,956.8 L1185.9,956.8 L1188.4,955.8 L1190.9,956.1 L1193.4,955.5 L1195.9,956.5 L1198.4,956.1 L1200.9,957.2 L1203.4,955.7 L1205.9,956.9 L1208.4,956.6 L1210.9,956.6 L1213.4,955.9 L1215.9,956.7 L1218.4,955.9 L1220.9,956.6 L1223.4,957.3 L1225.9,956.3 L1228.4,957.5 L1230.9,956.2 L1233.4,957.2 L1235.9,957.6 L1238.4,956.4 L1240.9,957.5 L1243.4,957.4 L1245.9,957.6 L1248.4,957.1 L1250.9,958.2 L1253.4,957.7 L1255.9,958.1 L1258.4,956.9 L1260.9,958.4 L1263.4,957.4 L1265.9,958.0 L1268.4,957.7 L1270.9,957.5 L1273.4,957.2 L1275.9,958.2 L1278.4,958.0 L1280.9,958.2 L1283.4,956.7 L1285.9,958.1 L1288.4,958.1 L1290.9,957.4 L1293.4,957.3 L1295.9,956.7 L1298.4,958.1 L1300.9,957.7 L1303.4,957.8 L1305.9,957.0 L1308.4,957.2 L1310.9,957.2 L1313.4,956.4 L1315.9,956.7 L1318.4,956.3 L1320.9,956.1 L1323.4,957.2 L1325.9,956.0 L1328.4,956.9 L1330.9,957.4 L1333.4,955.9 L1335.9,957.2 L1338.4,957.3 L1340.9,956.8 L1343.4,956.8 L1345.9,955.6 L1348.4,955.7 L1350.9,956.4 L1353.4,956.2 L1355.9,955.7 L1358.4,955.7 L1360.9,956.0 L1363.4,956.2 L1365.9,956.9 L1368.4,956.7 L1370.9,955.9 L1373.4,956.1 L1375.9,955.7 L1378.4,955.6 L1380.9,955.5 L1383.4,956.8 L1385.9,957.1 L1388.4,955.7 L1390.9,956.3 L1393.4,957.0 L1395.9,956.2 L1398.4,957.0 L1400.9,957.1 L1403.4,956.9 L1405.9,956.7 L1408.4,956.5 L1410.9,957.6 L1413.4,956.5 L1415.9,956.7 L1418.4,957.1 L1420.9,956.8 L1423.4,956.6 L1425.9,958.0 L1428.4,957.3 L1430.9,957.0 L1433.4,957.0 L1435.9,957.1 L1438.4,957.9 L1440.9,956.6 L1443.4,957.0 L1445.9,958.0 L1448.4,957.6 L1450.9,956.8 L1453.4,958.1 L1455.9,957.7 L1458.4,956.8 L1460.9,956.9 L1463.4,958.0 L1465.9,957.2 L1468.4,957.8 L1470.9,957.3 L1473.4,957.1 L1475.9,958.1 L1478.4,957.9 L1480.9,957.9 L1483.4,957.8 L1485.9,958.2 L1488.4,957.9 L1490.9,957.4 L1493.4,957.4 L1495.9,957.9 L1498.4,957.0 L1500.9,956.3 L1503.4,956.9 L1505.9,957.2 L1508.4,956.5 L1510.9,956.9 L1513.4,957.3 L1515.9,956.7 L1518.4,957.5 L1520.9,956.3 L1523.4,957.1 L1525.9,956.7 L1528.4,955.7 L1530.9,956.0 L1533.4,955.8 L1535.9,956.1 L1538.4,956.1 L1540.9,955.9 L1543.4,955.5 L1545.9,956.8 L1548.4,955.8 L1550.9,956.6 L1553.4,956.6 L1555.9,955.7 L1558.4,956.0 L1560.9,955.6 L1563.4,955.6 L1565.9,956.1 L1568.4,956.8 L1570.9,957.1 L1573.4,956.3 L1575.9,956.0 L1578.4,956.8 L1580.9,957.2 L1583.4,957.3" fill="none" stroke="#806eb7" stroke-width="1.3" stroke-linejoin="round"/>
<path d="M1153.4,962.1 L1155.9,961.0 L1158.4,962.4 L1160.9,961.9 L1163.4,961.8 L1165.9,960.8 L1168.4,960.3 L1170.9,962.2 L1173.4,962.0 L1175.9,960.3 L1178.4,960.2 L1180.9,961.9 L1183.4,961.6 L1185.9,961.2 L1188.4,961.6 L1190.9,961.5 L1193.4,961.4 L1195.9,961.8 L1198.4,962.3 L1200.9,962.3 L1203.4,962.2 L1205.9,962.4 L1208.4,961.3 L1210.9,961.3 L1213.4,962.2 L1215.9,961.2 L1218.4,961.4 L1220.9,962.2 L1223.4,962.0 L1225.9,962.7 L1228.4,961.2 L1230.9,962.1 L1233.4,963.2 L1235.9,963.0 L1238.4,962.0 L1240.9,962.7 L1243.4,962.1 L1245.9,963.1 L1248.4,962.0 L1250.9,962.0 L1253.4,963.5 L1255.9,962.6 L1258.4,963.4 L1260.9,962.4 L1263.4,962.2 L1265.9,962.2 L1268.4,963.4 L1270.9,963.7 L1273.4,962.5 L1275.9,962.7 L1278.4,963.6 L1280.9,963.5 L1283.4,962.6 L1285.9,963.6 L1288.4,962.5 L1290.9,963.2 L1293.4,963.2 L1295.9,962.8 L1298.4,962.5 L1300.9,962.1 L1303.4,963.4 L1305.9,961.9 L1308.4,962.9 L1310.9,962.7 L1313.4,961.9 L1315.9,961.7 L1318.4,961.8 L1320.9,961.2 L1323.4,962.5 L1325.9,962.2 L1328.4,961.5 L1330.9,962.2 L1333.4,962.4 L1335.9,962.2 L1338.4,961.0 L1340.9,960.8 L1343.4,961.0 L1345.9,960.5 L1348.4,960.8 L1350.9,961.7 L1353.4,961.7 L1355.9,960.8 L1358.4,962.2 L1360.9,961.0 L1363.4,962.1 L1365.9,962.1 L1368.4,961.2 L1370.9,961.9 L1373.4,960.3 L1375.9,960.5 L1378.4,961.4 L1380.9,961.9 L1383.4,962.1 L1385.9,961.4 L1388.4,961.4 L1390.9,961.8 L1393.4,961.1 L1395.9,961.5 L1398.4,961.1 L1400.9,962.5 L1403.4,962.6 L1405.9,962.1 L1408.4,961.9 L1410.9,962.5 L1413.4,961.7 L1415.9,962.7 L1418.4,962.5 L1420.9,962.3 L1423.4,961.9 L1425.9,961.8 L1428.4,962.7 L1430.9,962.6 L1433.4,961.7 L1435.9,961.7 L1438.4,962.4 L1440.9,963.5 L1443.4,962.8 L1445.9,962.5 L1448.4,963.2 L1450.9,963.8 L1453.4,961.8 L1455.9,962.0 L1458.4,963.6 L1460.9,962.9 L1463.4,962.6 L1465.9,963.3 L1468.4,963.7 L1470.9,962.3 L1473.4,962.2 L1475.9,962.9 L1478.4,963.6 L1480.9,962.9 L1483.4,963.5 L1485.9,960.4 L1488.4,956.4 L1490.9,953.9 L1493.4,953.6 L1495.9,955.6 L1498.4,959.2 L1500.9,963.1 L1503.4,962.9 L1505.9,962.0 L1508.4,961.3 L1510.9,962.6 L1513.4,962.6 L1515.9,961.3 L1518.4,961.9 L1520.9,962.0 L1523.4,962.4 L1525.9,962.1 L1528.4,960.5 L1530.9,962.3 L1533.4,961.9 L1535.9,960.9 L1538.4,960.5 L1540.9,960.5 L1543.4,961.3 L1545.9,960.3 L1548.4,961.0 L1550.9,961.7 L1553.4,961.3 L1555.9,960.8 L1558.4,960.7 L1560.9,962.0 L1563.4,961.9 L1565.9,960.3 L1568.4,962.1 L1570.9,960.7 L1573.4,961.7 L1575.9,961.9 L1578.4,962.0 L1580.9,961.6 L1583.4,960.5 L1583.4,970.6 L1153.4,970.6 Z" fill="#ef843c" fill-opacity="0.08"/>
<path d="M1153.4,962.1 L1155.9,961.0 L1158.4,962.4 L1160.9,961.9 L1163.4,961.8 L1165.9,960.8 L1168.4,960.3 L1170.9,962.2 L1173.4,962.0 L1175.9,960.3 L1178.4,960.2 L1180.9,961.9 L1183.4,961.6 L1185.9,961.2 L1188.4,961.6 L1190.9,961.5 L1193.4,961.4 L1195.9,961.8 L1198.4,962.3 L1200.9,962.3 L1203.4,962.2 L1205.9,962.4 L1208.4,961.3 L1210.9,961.3 L1213.4,962.2 L1215.9,961.2 L1218.4,961.4 L1220.9,962.2 L1223.4,962.0 L1225.9,962.7 L1228.4,961.2 L1230.9,962.1 L1233.4,963.2 L1235.9,963.0 L1238.4,962.0 L1240.9,962.7 L1243.4,962.1 L1245.9,963.1 L1248.4,962.0 L1250.9,962.0 L1253.4,963.5 L1255.9,962.6 L1258.4,963.4 L1260.9,962.4 L1263.4,962.2 L1265.9,962.2 L1268.4,963.4 L1270.9,963.7 L1273.4,962.5 L1275.9,962.7 L1278.4,963.6 L1280.9,963.5 L1283.4,962.6 L1285.9,963.6 L1288.4,962.5 L1290.9,963.2 L1293.4,963.2 L1295.9,962.8 L1298.4,962.5 L1300.9,962.1 L1303.4,963.4 L1305.9,961.9 L1308.4,962.9 L1310.9,962.7 L1313.4,961.9 L1315.9,961.7 L1318.4,961.8 L1320.9,961.2 L1323.4,962.5 L1325.9,962.2 L1328.4,961.5 L1330.9,962.2 L1333.4,962.4 L1335.9,962.2 L1338.4,961.0 L1340.9,960.8 L1343.4,961.0 L1345.9,960.5 L1348.4,960.8 L1350.9,961.7 L1353.4,961.7 L1355.9,960.8 L1358.4,962.2 L1360.9,961.0 L1363.4,962.1 L1365.9,962.1 L1368.4,961.2 L1370.9,961.9 L1373.4,960.3 L1375.9,960.5 L1378.4,961.4 L1380.9,961.9 L1383.4,962.1 L1385.9,961.4 L1388.4,961.4 L1390.9,961.8 L1393.4,961.1 L1395.9,961.5 L1398.4,961.1 L1400.9,962.5 L1403.4,962.6 L1405.9,962.1 L1408.4,961.9 L1410.9,962.5 L1413.4,961.7 L1415.9,962.7 L1418.4,962.5 L1420.9,962.3 L1423.4,961.9 L1425.9,961.8 L1428.4,962.7 L1430.9,962.6 L1433.4,961.7 L1435.9,961.7 L1438.4,962.4 L1440.9,963.5 L1443.4,962.8 L1445.9,962.5 L1448.4,963.2 L1450.9,963.8 L1453.4,961.8 L1455.9,962.0 L1458.4,963.6 L1460.9,962.9 L1463.4,962.6 L1465.9,963.3 L1468.4,963.7 L1470.9,962.3 L1473.4,962.2 L1475.9,962.9 L1478.4,963.6 L1480.9,962.9 L1483.4,963.5 L1485.9,960.4 L1488.4,956.4 L1490.9,953.9 L1493.4,953.6 L1495.9,955.6 L1498.4,959.2 L1500.9,963.1 L1503.4,962.9 L1505.9,962.0 L1508.4,961.3 L1510.9,962.6 L1513.4,962.6 L1515.9,961.3 L1518.4,961.9 L1520.9,962.0 L1523.4,962.4 L1525.9,962.1 L1528.4,960.5 L1530.9,962.3 L1533.4,961.9 L1535.9,960.9 L1538.4,960.5 L1540.9,960.5 L1543.4,961.3 L1545.9,960.3 L1548.4,961.0 L1550.9,961.7 L1553.4,961.3 L1555.9,960.8 L1558.4,960.7 L1560.9,962.0 L1563.4,961.9 L1565.9,960.3 L1568.4,962.1 L1570.9,960.7 L1573.4,961.7 L1575.9,961.9 L1578.4,962.0 L1580.9,961.6 L1583.4,960.5" fill="none" stroke="#ef843c" stroke-width="1.3" stroke-linejoin="round"/>
<path d="M1153.4,967.3 L1155.9,966.3 L1158.4,967.0 L1160.9,967.2 L1163.4,966.4 L1165.9,966.9 L1168.4,967.1 L1170.9,966.8 L1173.4,966.2 L1175.9,966.1 L1178.4,966.5 L1180.9,967.3 L1183.4,966.3 L1185.9,966.5 L1188.4,966.1 L1190.9,966.1 L1193.4,966.9 L1195.9,966.2 L1198.4,966.3 L1200.9,967.1 L1203.4,967.0 L1205.9,967.0 L1208.4,967.1 L1210.9,967.1 L1213.4,967.5 L1215.9,967.4 L1218.4,966.5 L1220.9,967.2 L1223.4,967.0 L1225.9,966.7 L1228.4,966.9 L1230.9,967.6 L1233.4,966.7 L1235.9,966.9 L1238.4,966.7 L1240.9,967.1 L1243.4,967.1 L1245.9,967.1 L1248.4,967.9 L1250.9,967.4 L1253.4,967.8 L1255.9,967.2 L1258.4,968.2 L1260.9,967.6 L1263.4,967.9 L1265.9,967.3 L1268.4,967.9 L1270.9,967.3 L1273.4,967.2 L1275.9,967.2 L1278.4,968.2 L1280.9,967.1 L1283.4,967.4 L1285.9,967.4 L1288.4,967.4 L1290.9,968.2 L1293.4,967.1 L1295.9,967.5 L1298.4,967.6 L1300.9,967.7 L1303.4,967.1 L1305.9,967.0 L1308.4,966.9 L1310.9,967.7 L1313.4,967.5 L1315.9,967.6 L1318.4,967.7 L1320.9,967.4 L1323.4,967.8 L1325.9,966.7 L1328.4,967.4 L1330.9,967.6 L1333.4,967.5 L1335.9,966.6 L1338.4,967.3 L1340.9,966.9 L1343.4,966.9 L1345.9,966.3 L1348.4,966.1 L1350.9,967.0 L1353.4,966.5 L1355.9,966.1 L1358.4,966.7 L1360.9,966.1 L1363.4,966.3 L1365.9,966.9 L1368.4,966.1 L1370.9,966.5 L1373.4,967.2 L1375.9,966.5 L1378.4,966.2 L1380.9,966.7 L1383.4,966.7 L1385.9,966.9 L1388.4,966.2 L1390.9,966.6 L1393.4,967.2 L1395.9,967.1 L1398.4,967.1 L1400.9,966.3 L1403.4,966.7 L1405.9,967.5 L1408.4,966.5 L1410.9,967.8 L1413.4,967.0 L1415.9,967.3 L1418.4,967.0 L1420.9,967.4 L1423.4,967.9 L1425.9,967.4 L1428.4,967.0 L1430.9,967.1 L1433.4,967.7 L1435.9,967.9 L1438.4,967.2 L1440.9,967.2 L1443.4,968.0 L1445.9,967.1 L1448.4,967.0 L1450.9,967.8 L1453.4,967.9 L1455.9,967.4 L1458.4,967.1 L1460.9,968.1 L1463.4,968.0 L1465.9,967.9 L1468.4,967.4 L1470.9,968.1 L1473.4,967.6 L1475.9,967.7 L1478.4,967.4 L1480.9,968.1 L1483.4,966.9 L1485.9,966.9 L1488.4,967.4 L1490.9,967.1 L1493.4,967.9 L1495.9,966.8 L1498.4,967.3 L1500.9,966.9 L1503.4,966.8 L1505.9,967.4 L1508.4,966.6 L1510.9,967.5 L1513.4,967.7 L1515.9,967.0 L1518.4,966.4 L1520.9,966.4 L1523.4,966.3 L1525.9,966.9 L1528.4,966.2 L1530.9,966.7 L1533.4,967.3 L1535.9,966.6 L1538.4,966.3 L1540.9,966.8 L1543.4,966.5 L1545.9,967.0 L1548.4,966.9 L1550.9,966.7 L1553.4,966.6 L1555.9,966.7 L1558.4,967.2 L1560.9,967.3 L1563.4,966.9 L1565.9,966.4 L1568.4,966.3 L1570.9,967.1 L1573.4,967.1 L1575.9,966.7 L1578.4,967.2 L1580.9,966.7 L1583.4,966.3 L1583.4,970.6 L1153.4,970.6 Z" fill="#eab839" fill-opacity="0.08"/>
<path d="M1153.4,967.3 L1155.9,966.3 L1158.4,967.0 L1160.9,967.2 L1163.4,966.4 L1165.9,966.9 L1168.4,967.1 L1170.9,966.8 L1173.4,966.2 L1175.9,966.1 L1178.4,966.5 L1180.9,967.3 L1183.4,966.3 L1185.9,966.5 L1188.4,966.1 L1190.9,966.1 L1193.4,966.9 L1195.9,966.2 L1198.4,966.3 L1200.9,967.1 L1203.4,967.0 L1205.9,967.0 L1208.4,967.1 L1210.9,967.1 L1213.4,967.5 L1215.9,967.4 L1218.4,966.5 L1220.9,967.2 L1223.4,967.0 L1225.9,966.7 L1228.4,966.9 L1230.9,967.6 L1233.4,966.7 L1235.9,966.9 L1238.4,966.7 L1240.9,967.1 L1243.4,967.1 L1245.9,967.1 L1248.4,967.9 L1250.9,967.4 L1253.4,967.8 L1255.9,967.2 L1258.4,968.2 L1260.9,967.6 L1263.4,967.9 L1265.9,967.3 L1268.4,967.9 L1270.9,967.3 L1273.4,967.2 L1275.9,967.2 L1278.4,968.2 L1280.9,967.1 L1283.4,967.4 L1285.9,967.4 L1288.4,967.4 L1290.9,968.2 L1293.4,967.1 L1295.9,967.5 L1298.4,967.6 L1300.9,967.7 L1303.4,967.1 L1305.9,967.0 L1308.4,966.9 L1310.9,967.7 L1313.4,967.5 L1315.9,967.6 L1318.4,967.7 L1320.9,967.4 L1323.4,967.8 L1325.9,966.7 L1328.4,967.4 L1330.9,967.6 L1333.4,967.5 L1335.9,966.6 L1338.4,967.3 L1340.9,966.9 L1343.4,966.9 L1345.9,966.3 L1348.4,966.1 L1350.9,967.0 L1353.4,966.5 L1355.9,966.1 L1358.4,966.7 L1360.9,966.1 L1363.4,966.3 L1365.9,966.9 L1368.4,966.1 L1370.9,966.5 L1373.4,967.2 L1375.9,966.5 L1378.4,966.2 L1380.9,966.7 L1383.4,966.7 L1385.9,966.9 L1388.4,966.2 L1390.9,966.6 L1393.4,967.2 L1395.9,967.1 L1398.4,967.1 L1400.9,966.3 L1403.4,966.7 L1405.9,967.5 L1408.4,966.5 L1410.9,967.8 L1413.4,967.0 L1415.9,967.3 L1418.4,967.0 L1420.9,967.4 L1423.4,967.9 L1425.9,967.4 L1428.4,967.0 L1430.9,967.1 L1433.4,967.7 L1435.9,967.9 L1438.4,967.2 L1440.9,967.2 L1443.4,968.0 L1445.9,967.1 L1448.4,967.0 L1450.9,967.8 L1453.4,967.9 L1455.9,967.4 L1458.4,967.1 L1460.9,968.1 L1463.4,968.0 L1465.9,967.9 L1468.4,967.4 L1470.9,968.1 L1473.4,967.6 L1475.9,967.7 L1478.4,967.4 L1480.9,968.1 L1483.4,966.9 L1485.9,966.9 L1488.4,967.4 L1490.9,967.1 L1493.4,967.9 L1495.9,966.8 L1498.4,967.3 L1500.9,966.9 L1503.4,966.8 L1505.9,967.4 L1508.4,966.6 L1510.9,967.5 L1513.4,967.7 L1515.9,967.0 L1518.4,966.4 L1520.9,966.4 L1523.4,966.3 L1525.9,966.9 L1528.4,966.2 L1530.9,966.7 L1533.4,967.3 L1535.9,966.6 L1538.4,966.3 L1540.9,966.8 L1543.4,966.5 L1545.9,967.0 L1548.4,966.9 L1550.9,966.7 L1553.4,966.6 L1555.9,966.7 L1558.4,967.2 L1560.9,967.3 L1563.4,966.9 L1565.9,966.4 L1568.4,966.3 L1570.9,967.1 L1573.4,967.1 L1575.9,966.7 L1578.4,967.2 L1580.9,966.7 L1583.4,966.3" fill="none" stroke="#eab839" stroke-width="1.3" stroke-linejoin="round"/>
<path d="M1153.4,969.6 L1155.9,969.2 L1158.4,969.0 L1160.9,969.0 L1163.4,969.0 L1165.9,969.0 L1168.4,969.4 L1170.9,968.8 L1173.4,968.7 L1175.9,969.6 L1178.4,968.7 L1180.9,969.2 L1183.4,969.6 L1185.9,969.6 L1188.4,968.9 L1190.9,969.0 L1193.4,969.6 L1195.9,969.3 L1198.4,969.1 L1200.9,968.8 L1203.4,969.5 L1205.9,969.1 L1208.4,969.6 L1210.9,969.7 L1213.4,969.8 L1215.9,969.5 L1218.4,969.4 L1220.9,969.7 L1223.4,969.9 L1225.9,969.9 L1228.4,970.0 L1230.9,970.0 L1233.4,969.9 L1235.9,969.7 L1238.4,970.1 L1240.9,969.8 L1243.4,969.9 L1245.9,969.3 L1248.4,969.9 L1250.9,969.4 L1253.4,969.9 L1255.9,970.2 L1258.4,969.8 L1260.9,970.3 L1263.4,970.3 L1265.9,970.4 L1268.4,969.8 L1270.9,969.5 L1273.4,970.1 L1275.9,970.1 L1278.4,970.1 L1280.9,970.1 L1283.4,969.8 L1285.9,970.1 L1288.4,970.3 L1290.9,969.5 L1293.4,969.8 L1295.9,970.4 L1298.4,969.5 L1300.9,969.6 L1303.4,969.9 L1305.9,969.6 L1308.4,969.3 L1310.9,969.8 L1313.4,969.7 L1315.9,969.8 L1318.4,969.5 L1320.9,969.4 L1323.4,969.3 L1325.9,969.0 L1328.4,969.8 L1330.9,969.6 L1333.4,969.0 L1335.9,969.1 L1338.4,969.2 L1340.9,969.1 L1343.4,969.4 L1345.9,968.8 L1348.4,969.2 L1350.9,969.3 L1353.4,969.5 L1355.9,969.6 L1358.4,968.8 L1360.9,968.9 L1363.4,969.6 L1365.9,969.3 L1368.4,969.2 L1370.9,969.2 L1373.4,969.3 L1375.9,968.8 L1378.4,969.3 L1380.9,969.2 L1383.4,968.8 L1385.9,969.1 L1388.4,969.3 L1390.9,969.5 L1393.4,969.4 L1395.9,969.2 L1398.4,969.1 L1400.9,969.6 L1403.4,969.6 L1405.9,969.6 L1408.4,969.6 L1410.9,969.1 L1413.4,969.5 L1415.9,969.8 L1418.4,969.8 L1420.9,969.3 L1423.4,970.1 L1425.9,969.5 L1428.4,970.3 L1430.9,970.1 L1433.4,970.3 L1435.9,969.5 L1438.4,970.2 L1440.9,970.2 L1443.4,970.4 L1445.9,970.2 L1448.4,969.7 L1450.9,969.7 L1453.4,969.5 L1455.9,969.5 L1458.4,969.9 L1460.9,969.5 L1463.4,970.4 L1465.9,969.5 L1468.4,970.0 L1470.9,970.3 L1473.4,969.7 L1475.9,969.6 L1478.4,970.0 L1480.9,970.3 L1483.4,969.5 L1485.9,969.6 L1488.4,969.7 L1490.9,969.3 L1493.4,970.2 L1495.9,970.2 L1498.4,970.1 L1500.9,970.2 L1503.4,969.4 L1505.9,969.5 L1508.4,970.0 L1510.9,969.9 L1513.4,969.8 L1515.9,969.4 L1518.4,969.3 L1520.9,968.9 L1523.4,969.5 L1525.9,968.8 L1528.4,969.4 L1530.9,969.4 L1533.4,969.5 L1535.9,969.5 L1538.4,968.7 L1540.9,968.7 L1543.4,969.0 L1545.9,969.5 L1548.4,969.5 L1550.9,969.5 L1553.4,969.3 L1555.9,968.9 L1558.4,969.6 L1560.9,969.1 L1563.4,969.0 L1565.9,969.7 L1568.4,969.3 L1570.9,968.9 L1573.4,969.2 L1575.9,969.3 L1578.4,968.9 L1580.9,969.2 L1583.4,969.5 L1583.4,970.6 L1153.4,970.6 Z" fill="#e24d42" fill-opacity="0.08"/>
<path d="M1153.4,969.6 L1155.9,969.2 L1158.4,969.0 L1160.9,969.0 L1163.4,969.0 L1165.9,969.0 L1168.4,969.4 L1170.9,968.8 L1173.4,968.7 L1175.9,969.6 L1178.4,968.7 L1180.9,969.2 L1183.4,969.6 L1185.9,969.6 L1188.4,968.9 L1190.9,969.0 L1193.4,969.6 L1195.9,969.3 L1198.4,969.1 L1200.9,968.8 L1203.4,969.5 L1205.9,969.1 L1208.4,969.6 L1210.9,969.7 L1213.4,969.8 L1215.9,969.5 L1218.4,969.4 L1220.9,969.7 L1223.4,969.9 L1225.9,969.9 L1228.4,970.0 L1230.9,970.0 L1233.4,969.9 L1235.9,969.7 L1238.4,970.1 L1240.9,969.8 L1243.4,969.9 L1245.9,969.3 L1248.4,969.9 L1250.9,969.4 L1253.4,969.9 L1255.9,970.2 L1258.4,969.8 L1260.9,970.3 L1263.4,970.3 L1265.9,970.4 L1268.4,969.8 L1270.9,969.5 L1273.4,970.1 L1275.9,970.1 L1278.4,970.1 L1280.9,970.1 L1283.4,969.8 L1285.9,970.1 L1288.4,970.3 L1290.9,969.5 L1293.4,969.8 L1295.9,970.4 L1298.4,969.5 L1300.9,969.6 L1303.4,969.9 L1305.9,969.6 L1308.4,969.3 L1310.9,969.8 L1313.4,969.7 L1315.9,969.8 L1318.4,969.5 L1320.9,969.4 L1323.4,969.3 L1325.9,969.0 L1328.4,969.8 L1330.9,969.6 L1333.4,969.0 L1335.9,969.1 L1338.4,969.2 L1340.9,969.1 L1343.4,969.4 L1345.9,968.8 L1348.4,969.2 L1350.9,969.3 L1353.4,969.5 L1355.9,969.6 L1358.4,968.8 L1360.9,968.9 L1363.4,969.6 L1365.9,969.3 L1368.4,969.2 L1370.9,969.2 L1373.4,969.3 L1375.9,968.8 L1378.4,969.3 L1380.9,969.2 L1383.4,968.8 L1385.9,969.1 L1388.4,969.3 L1390.9,969.5 L1393.4,969.4 L1395.9,969.2 L1398.4,969.1 L1400.9,969.6 L1403.4,969.6 L1405.9,969.6 L1408.4,969.6 L1410.9,969.1 L1413.4,969.5 L1415.9,969.8 L1418.4,969.8 L1420.9,969.3 L1423.4,970.1 L1425.9,969.5 L1428.4,970.3 L1430.9,970.1 L1433.4,970.3 L1435.9,969.5 L1438.4,970.2 L1440.9,970.2 L1443.4,970.4 L1445.9,970.2 L1448.4,969.7 L1450.9,969.7 L1453.4,969.5 L1455.9,969.5 L1458.4,969.9 L1460.9,969.5 L1463.4,970.4 L1465.9,969.5 L1468.4,970.0 L1470.9,970.3 L1473.4,969.7 L1475.9,969.6 L1478.4,970.0 L1480.9,970.3 L1483.4,969.5 L1485.9,969.6 L1488.4,969.7 L1490.9,969.3 L1493.4,970.2 L1495.9,970.2 L1498.4,970.1 L1500.9,970.2 L1503.4,969.4 L1505.9,969.5 L1508.4,970.0 L1510.9,969.9 L1513.4,969.8 L1515.9,969.4 L1518.4,969.3 L1520.9,968.9 L1523.4,969.5 L1525.9,968.8 L1528.4,969.4 L1530.9,969.4 L1533.4,969.5 L1535.9,969.5 L1538.4,968.7 L1540.9,968.7 L1543.4,969.0 L1545.9,969.5 L1548.4,969.5 L1550.9,969.5 L1553.4,969.3 L1555.9,968.9 L1558.4,969.6 L1560.9,969.1 L1563.4,969.0 L1565.9,969.7 L1568.4,969.3 L1570.9,968.9 L1573.4,969.2 L1575.9,969.3 L1578.4,968.9 L1580.9,969.2 L1583.4,969.5" fill="none" stroke="#e24d42" stroke-width="1.3" stroke-linejoin="round"/>
<rect x="1625.5" y="742.5" width="274" height="277" rx="3" fill="#141619" stroke="#202226" stroke-width="1"/>
<text x="1646" y="811.5" font-size="15" fill="#c7d0d9" text-anchor="end" font-weight="400" stroke="#c7d0d9" stroke-width="0.25" >1</text>
<text x="1646" y="966.5" font-size="15" fill="#c7d0d9" text-anchor="end" font-weight="400" stroke="#c7d0d9" stroke-width="0.25" >0</text>
<rect x="1655.8" y="806.5" width="100" height="155.5" fill="#2e2326"/>
<line x1="1655" y1="962.5" x2="1745" y2="962.5" stroke="rgba(255,255,255,0.17)" stroke-width="1"/>
<line x1="1655.8" y1="806.6" x2="1745" y2="806.6" stroke="#6ed0e0" stroke-width="1.5"/>
<text x="1738.5" y="992" font-size="15" fill="#c7d0d9" text-anchor="start" font-weight="400" stroke="#c7d0d9" stroke-width="0.25" >13:00</text>
</svg></body></html>
